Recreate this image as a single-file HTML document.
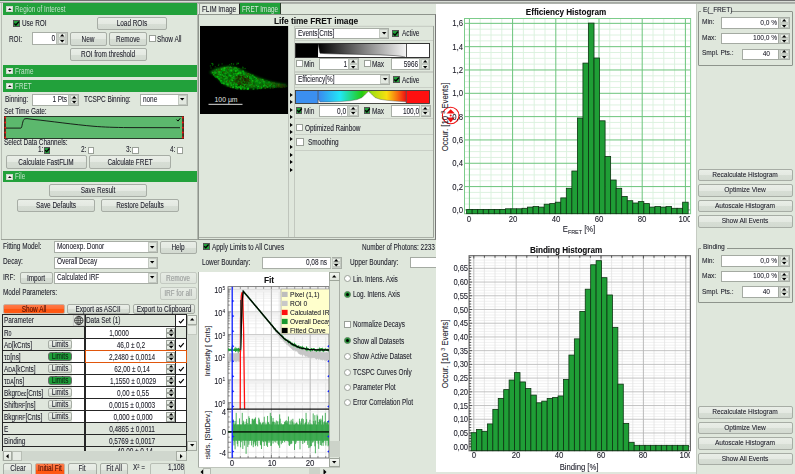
<!DOCTYPE html><html><head><meta charset="utf-8"><style>
html,body{margin:0;padding:0;}
body{width:795px;height:474px;position:relative;overflow:hidden;background:#dfe7dc;font-family:"Liberation Sans",sans-serif;}
body div{position:absolute;box-sizing:border-box;}
.t{white-space:nowrap;line-height:12px;height:12px;text-shadow:0.3px 0 0 rgba(20,20,40,0.3);}
svg{position:absolute;overflow:visible}
</style></head><body>
<div style="left:0px;top:0px;width:795px;height:1px;background:#727272;"></div>
<div style="left:0px;top:1px;width:795px;height:1px;background:#d9ddd7;"></div>
<div style="left:0px;top:2px;width:795px;height:1px;background:#a6aaa4;"></div>
<div style="left:197px;top:3px;width:598px;height:1px;background:#aeb2ac;"></div>
<div style="left:0px;top:0px;width:32.5px;height:1px;background:#3a8a4a;"></div>
<div style="left:1px;top:3px;width:1px;height:237px;background:#b6bcb3;"></div>
<div style="left:197px;top:3px;width:1px;height:237px;background:#b3b9b0;"></div>
<div style="left:1px;top:239px;width:197px;height:1px;background:#9aa097;"></div>
<div style="left:3px;top:3px;width:194px;height:12px;background:#22a13b;"></div>
<div style="left:6px;top:6.1px;width:6.6px;height:6.4px;background:#eef1ec;border:0.5px solid #cfd8cc;"></div>
<svg style="position:absolute;left:7.60px;top:8.40px" width="3.6" height="2"><path d="M0 2 L1.8 0 L3.6 2Z" fill="#111"/></svg>
<div class="t" style="left:15.00px;top:2.87px;width:400px;text-align:left;font-size:8.3px;font-weight:normal;color:#c4f0cc;transform:scaleX(0.77);transform-origin:0 0;">Region of Interest</div>
<div style="left:13px;top:20px;width:7px;height:7px;background:#22a13b;border:1px solid #555;box-sizing:border-box"><svg width="7" height="7" viewBox="0 0 7 7" style="position:absolute;left:-1px;top:-1px"><path d="M1.3 3.4 L2.9 5 L5.9 1.6" stroke="#000" stroke-width="1.4" fill="none"/></svg></div>
<div class="t" style="left:21.50px;top:16.67px;width:400px;text-align:left;font-size:8.3px;font-weight:normal;color:#262630;transform:scaleX(0.77);transform-origin:0 0;">Use ROI</div>
<div style="left:97px;top:17px;width:70px;height:13px;border:1px solid #a7ada5;border-radius:2px;background:linear-gradient(#e9eee7 0%,#e4e9e2 50%,#d7ded5 51%,#d3dad1 100%);"></div>
<div class="t" style="left:-68.00px;top:17.37px;width:400px;text-align:center;font-size:8.3px;font-weight:normal;color:#262630;transform:scaleX(0.77);transform-origin:50% 0;">Load ROIs</div>
<div class="t" style="left:8.50px;top:32.67px;width:400px;text-align:left;font-size:8.3px;font-weight:normal;color:#262630;transform:scaleX(0.77);transform-origin:0 0;">ROI:</div>
<div style="left:32px;top:32px;width:25px;height:13px;background:#fff;border:1px solid #a8aea6;border-right:1px solid #b8beb6;"></div>
<div class="t" style="left:-345.00px;top:32.37px;width:400px;text-align:right;font-size:8.3px;font-weight:normal;color:#262630;transform:scaleX(0.77);transform-origin:100% 0;">0</div>
<div style="left:57px;top:32px;width:10.5px;height:13px;background:#c9cfc7;border:1px solid #a8aea6;border-left:none;"></div>
<div style="left:57.6px;top:33px;width:8.9px;height:5.1px;background:#e9eee7;border:1px solid #c3c9c1;"></div>
<div style="left:57.6px;top:38.9px;width:8.9px;height:5.1px;background:#e9eee7;border:1px solid #c3c9c1;"></div>
<svg style="position:absolute;left:59.75px;top:34.25px" width="4.4" height="2.6"><path d="M0 2.6 L2.2 0 L4.4 2.6Z" fill="#000"/></svg>
<svg style="position:absolute;left:59.75px;top:40.35px" width="4.4" height="2.6"><path d="M0 0 L2.2 2.6 L4.4 0Z" fill="#000"/></svg>
<div style="left:69.5px;top:32px;width:37px;height:13.5px;border:1px solid #a7ada5;border-radius:2px;background:linear-gradient(#e9eee7 0%,#e4e9e2 50%,#d7ded5 51%,#d3dad1 100%);"></div>
<div class="t" style="left:-112.00px;top:32.62px;width:400px;text-align:center;font-size:8.3px;font-weight:normal;color:#262630;transform:scaleX(0.77);transform-origin:50% 0;">New</div>
<div style="left:109px;top:32px;width:37.5px;height:13.5px;border:1px solid #a7ada5;border-radius:2px;background:linear-gradient(#e9eee7 0%,#e4e9e2 50%,#d7ded5 51%,#d3dad1 100%);"></div>
<div class="t" style="left:-72.25px;top:32.62px;width:400px;text-align:center;font-size:8.3px;font-weight:normal;color:#262630;transform:scaleX(0.77);transform-origin:50% 0;">Remove</div>
<div style="left:148.5px;top:35px;width:7px;height:7px;background:#fff;border:1px solid #9aa098;"></div>
<div class="t" style="left:157.00px;top:32.67px;width:400px;text-align:left;font-size:8.3px;font-weight:normal;color:#262630;transform:scaleX(0.77);transform-origin:0 0;">Show All</div>
<div style="left:69.5px;top:48px;width:77px;height:12.5px;border:1px solid #a7ada5;border-radius:2px;background:linear-gradient(#e9eee7 0%,#e4e9e2 50%,#d7ded5 51%,#d3dad1 100%);"></div>
<div class="t" style="left:-92.00px;top:48.12px;width:400px;text-align:center;font-size:8.3px;font-weight:normal;color:#262630;transform:scaleX(0.77);transform-origin:50% 0;">ROI from threshold</div>
<div style="left:3px;top:65px;width:194px;height:12px;background:#22a13b;"></div>
<div style="left:6px;top:68.1px;width:6.6px;height:6.4px;background:#eef1ec;border:0.5px solid #cfd8cc;"></div>
<svg style="position:absolute;left:7.60px;top:70.40px" width="3.6" height="2"><path d="M0 0 L1.8 2 L3.6 0Z" fill="#111"/></svg>
<div class="t" style="left:15.00px;top:64.87px;width:400px;text-align:left;font-size:8.3px;font-weight:normal;color:#c4f0cc;transform:scaleX(0.77);transform-origin:0 0;">Frame</div>
<div style="left:3px;top:80px;width:194px;height:12px;background:#22a13b;"></div>
<div style="left:6px;top:83.1px;width:6.6px;height:6.4px;background:#eef1ec;border:0.5px solid #cfd8cc;"></div>
<svg style="position:absolute;left:7.60px;top:85.40px" width="3.6" height="2"><path d="M0 2 L1.8 0 L3.6 2Z" fill="#111"/></svg>
<div class="t" style="left:15.00px;top:79.87px;width:400px;text-align:left;font-size:8.3px;font-weight:normal;color:#c4f0cc;transform:scaleX(0.77);transform-origin:0 0;">FRET</div>
<div class="t" style="left:4.50px;top:92.87px;width:400px;text-align:left;font-size:8.3px;font-weight:normal;color:#262630;transform:scaleX(0.77);transform-origin:0 0;">Binning:</div>
<div style="left:32px;top:93.5px;width:37px;height:12px;background:#fff;border:1px solid #a8aea6;border-right:1px solid #b8beb6;"></div>
<div class="t" style="left:-333.00px;top:93.37px;width:400px;text-align:right;font-size:8.3px;font-weight:normal;color:#262630;transform:scaleX(0.77);transform-origin:100% 0;">1 Pts</div>
<div style="left:69px;top:93.5px;width:10px;height:12px;background:#c9cfc7;border:1px solid #a8aea6;border-left:none;"></div>
<div style="left:69.6px;top:94.5px;width:8.4px;height:4.6px;background:#e9eee7;border:1px solid #c3c9c1;"></div>
<div style="left:69.6px;top:99.9px;width:8.4px;height:4.6px;background:#e9eee7;border:1px solid #c3c9c1;"></div>
<svg style="position:absolute;left:71.50px;top:95.50px" width="4.4" height="2.6"><path d="M0 2.6 L2.2 0 L4.4 2.6Z" fill="#000"/></svg>
<svg style="position:absolute;left:71.50px;top:101.10px" width="4.4" height="2.6"><path d="M0 0 L2.2 2.6 L4.4 0Z" fill="#000"/></svg>
<div class="t" style="left:84.00px;top:92.87px;width:400px;text-align:left;font-size:8.3px;font-weight:normal;color:#262630;transform:scaleX(0.77);transform-origin:0 0;">TCSPC Binning:</div>
<div style="left:140px;top:93.5px;width:48px;height:12px;background:#fff;border:1px solid #a8aea6;"></div>
<div style="left:178px;top:94.5px;width:9px;height:10px;background:#e2e8e0;border:1px solid #c3c9c1;"></div>
<svg style="position:absolute;left:180.30px;top:98.20px" width="4.4" height="2.6"><path d="M0 0 L2.2 2.6 L4.4 0Z" fill="#000"/></svg>
<div class="t" style="left:142.50px;top:93.37px;width:400px;text-align:left;font-size:8.3px;font-weight:normal;color:#262630;transform:scaleX(0.77);transform-origin:0 0;">none</div>
<div class="t" style="left:4.40px;top:105.37px;width:400px;text-align:left;font-size:8.3px;font-weight:normal;color:#262630;transform:scaleX(0.77);transform-origin:0 0;">Set Time Gate:</div>
<svg style="position:absolute;left:4px;top:116px" width="180" height="23" viewBox="0 0 180 23"><rect x="0.5" y="0.5" width="179" height="22" fill="#5cb86d" stroke="#2a3a2a" stroke-width="1"/><path d="M1 12.1 L17 12.1 C18.2 12.1 18.3 3.5 20.8 2.8 L23 2.6 L30 3.5 C45 5 70 8.6 90 10.3 C100 11.1 110 11.5 125 11.6 L176 11.7" stroke="#111" stroke-width="0.9" fill="none"/><rect x="0.6" y="0.6" width="1.2" height="21.8" fill="#5a1a10"/><rect x="178.2" y="0.6" width="1.2" height="21.8" fill="#5a1a10"/><path d="M172.5 3.6 L174 5.1 L176.2 2.3" stroke="#000" stroke-width="1" fill="none"/><circle cx="1.3" cy="1.5" r="0.9" fill="#ff1010"/><circle cx="178.8" cy="1.5" r="0.9" fill="#ff1010"/><circle cx="1.3" cy="6.5" r="0.9" fill="#ff1010"/><circle cx="178.8" cy="6.5" r="0.9" fill="#ff1010"/><circle cx="1.3" cy="11.7" r="0.9" fill="#ff1010"/><circle cx="178.8" cy="11.7" r="0.9" fill="#ff1010"/><circle cx="1.3" cy="16.5" r="0.9" fill="#ff1010"/><circle cx="178.8" cy="16.5" r="0.9" fill="#ff1010"/><circle cx="1.3" cy="21.5" r="0.9" fill="#ff1010"/><circle cx="178.8" cy="21.5" r="0.9" fill="#ff1010"/></svg>
<div class="t" style="left:4.40px;top:135.97px;width:400px;text-align:left;font-size:8.3px;font-weight:normal;color:#262630;transform:scaleX(0.77);transform-origin:0 0;">Select Data Channels:</div>
<div class="t" style="left:37.60px;top:143.37px;width:400px;text-align:left;font-size:8.3px;font-weight:normal;color:#262630;transform:scaleX(0.77);transform-origin:0 0;">1:</div>
<div style="left:43.5px;top:147px;width:6.5px;height:6.5px;background:#22a13b;border:1px solid #555;box-sizing:border-box"><svg width="6.5" height="6.5" viewBox="0 0 7 7" style="position:absolute;left:-1px;top:-1px"><path d="M1.3 3.4 L2.9 5 L5.9 1.6" stroke="#000" stroke-width="1.4" fill="none"/></svg></div>
<div class="t" style="left:81.00px;top:143.37px;width:400px;text-align:left;font-size:8.3px;font-weight:normal;color:#262630;transform:scaleX(0.77);transform-origin:0 0;">2:</div>
<div style="left:87.5px;top:147px;width:6.5px;height:6.5px;background:#fff;border:1px solid #9aa098;"></div>
<div class="t" style="left:125.50px;top:143.37px;width:400px;text-align:left;font-size:8.3px;font-weight:normal;color:#262630;transform:scaleX(0.77);transform-origin:0 0;">3:</div>
<div style="left:132px;top:147px;width:6.5px;height:6.5px;background:#fff;border:1px solid #9aa098;"></div>
<div class="t" style="left:169.50px;top:143.37px;width:400px;text-align:left;font-size:8.3px;font-weight:normal;color:#262630;transform:scaleX(0.77);transform-origin:0 0;">4:</div>
<div style="left:176.5px;top:147px;width:6.5px;height:6.5px;background:#fff;border:1px solid #9aa098;"></div>
<div style="left:5.5px;top:155px;width:81.5px;height:13.5px;border:1px solid #a7ada5;border-radius:2px;background:linear-gradient(#e9eee7 0%,#e4e9e2 50%,#d7ded5 51%,#d3dad1 100%);"></div>
<div class="t" style="left:-153.75px;top:155.62px;width:400px;text-align:center;font-size:8.3px;font-weight:normal;color:#262630;transform:scaleX(0.77);transform-origin:50% 0;">Calculate FastFLIM</div>
<div style="left:89px;top:155px;width:82px;height:13.5px;border:1px solid #a7ada5;border-radius:2px;background:linear-gradient(#e9eee7 0%,#e4e9e2 50%,#d7ded5 51%,#d3dad1 100%);"></div>
<div class="t" style="left:-70.00px;top:155.62px;width:400px;text-align:center;font-size:8.3px;font-weight:normal;color:#262630;transform:scaleX(0.77);transform-origin:50% 0;">Calculate FRET</div>
<div style="left:3px;top:170.5px;width:194px;height:11.5px;background:#22a13b;"></div>
<div style="left:6px;top:173.6px;width:6.6px;height:6.4px;background:#eef1ec;border:0.5px solid #cfd8cc;"></div>
<svg style="position:absolute;left:7.60px;top:175.90px" width="3.6" height="2"><path d="M0 2 L1.8 0 L3.6 2Z" fill="#111"/></svg>
<div class="t" style="left:15.00px;top:170.12px;width:400px;text-align:left;font-size:8.3px;font-weight:normal;color:#c4f0cc;transform:scaleX(0.77);transform-origin:0 0;">File</div>
<div style="left:49px;top:184px;width:98px;height:12.5px;border:1px solid #a7ada5;border-radius:2px;background:linear-gradient(#e9eee7 0%,#e4e9e2 50%,#d7ded5 51%,#d3dad1 100%);"></div>
<div class="t" style="left:-102.00px;top:184.12px;width:400px;text-align:center;font-size:8.3px;font-weight:normal;color:#262630;transform:scaleX(0.77);transform-origin:50% 0;">Save Result</div>
<div style="left:17px;top:199px;width:78px;height:13px;border:1px solid #a7ada5;border-radius:2px;background:linear-gradient(#e9eee7 0%,#e4e9e2 50%,#d7ded5 51%,#d3dad1 100%);"></div>
<div class="t" style="left:-144.00px;top:199.37px;width:400px;text-align:center;font-size:8.3px;font-weight:normal;color:#262630;transform:scaleX(0.77);transform-origin:50% 0;">Save Defaults</div>
<div style="left:101px;top:199px;width:78px;height:13px;border:1px solid #a7ada5;border-radius:2px;background:linear-gradient(#e9eee7 0%,#e4e9e2 50%,#d7ded5 51%,#d3dad1 100%);"></div>
<div class="t" style="left:-60.00px;top:199.37px;width:400px;text-align:center;font-size:8.3px;font-weight:normal;color:#262630;transform:scaleX(0.77);transform-origin:50% 0;">Restore Defaults</div>
<div class="t" style="left:2.50px;top:239.67px;width:400px;text-align:left;font-size:8.3px;font-weight:normal;color:#262630;transform:scaleX(0.77);transform-origin:0 0;">Fitting Model:</div>
<div style="left:54px;top:241px;width:103.5px;height:12px;background:#fff;border:1px solid #a8aea6;"></div>
<div style="left:147.5px;top:242px;width:9px;height:10px;background:#e2e8e0;border:1px solid #c3c9c1;"></div>
<svg style="position:absolute;left:149.80px;top:245.70px" width="4.4" height="2.6"><path d="M0 0 L2.2 2.6 L4.4 0Z" fill="#000"/></svg>
<div class="t" style="left:56.50px;top:239.67px;width:400px;text-align:left;font-size:8.3px;font-weight:normal;color:#262630;transform:scaleX(0.77);transform-origin:0 0;">Monoexp. Donor</div>
<div style="left:159.5px;top:241px;width:37px;height:12.5px;border:1px solid #a7ada5;border-radius:2px;background:linear-gradient(#e9eee7 0%,#e4e9e2 50%,#d7ded5 51%,#d3dad1 100%);"></div>
<div class="t" style="left:-22.00px;top:241.12px;width:400px;text-align:center;font-size:8.3px;font-weight:normal;color:#262630;transform:scaleX(0.77);transform-origin:50% 0;">Help</div>
<div class="t" style="left:2.50px;top:255.07px;width:400px;text-align:left;font-size:8.3px;font-weight:normal;color:#262630;transform:scaleX(0.77);transform-origin:0 0;">Decay:</div>
<div style="left:54px;top:256.5px;width:103.5px;height:12px;background:#fff;border:1px solid #a8aea6;"></div>
<div style="left:147.5px;top:257.5px;width:9px;height:10px;background:#e2e8e0;border:1px solid #c3c9c1;"></div>
<svg style="position:absolute;left:149.80px;top:261.20px" width="4.4" height="2.6"><path d="M0 0 L2.2 2.6 L4.4 0Z" fill="#000"/></svg>
<div class="t" style="left:56.50px;top:255.07px;width:400px;text-align:left;font-size:8.3px;font-weight:normal;color:#262630;transform:scaleX(0.77);transform-origin:0 0;">Overall Decay</div>
<div class="t" style="left:2.50px;top:270.67px;width:400px;text-align:left;font-size:8.3px;font-weight:normal;color:#262630;transform:scaleX(0.77);transform-origin:0 0;">IRF:</div>
<div style="left:19.5px;top:271.5px;width:33px;height:12.5px;border:1px solid #a7ada5;border-radius:2px;background:linear-gradient(#e9eee7 0%,#e4e9e2 50%,#d7ded5 51%,#d3dad1 100%);"></div>
<div class="t" style="left:-164.00px;top:271.62px;width:400px;text-align:center;font-size:8.3px;font-weight:normal;color:#262630;transform:scaleX(0.77);transform-origin:50% 0;">Import</div>
<div style="left:54px;top:271.5px;width:103.5px;height:12px;background:#fff;border:1px solid #a8aea6;"></div>
<div style="left:147.5px;top:272.5px;width:9px;height:10px;background:#e2e8e0;border:1px solid #c3c9c1;"></div>
<svg style="position:absolute;left:149.80px;top:276.20px" width="4.4" height="2.6"><path d="M0 0 L2.2 2.6 L4.4 0Z" fill="#000"/></svg>
<div class="t" style="left:56.50px;top:270.67px;width:400px;text-align:left;font-size:8.3px;font-weight:normal;color:#262630;transform:scaleX(0.77);transform-origin:0 0;">Calculated IRF</div>
<div style="left:159.5px;top:272px;width:37px;height:12px;border:1px solid #c4cac2;border-radius:2px;background:linear-gradient(#e6ebe4,#dde3db);"></div>
<div class="t" style="left:-22.00px;top:271.87px;width:400px;text-align:center;font-size:8.3px;font-weight:normal;color:#a8aca8;transform:scaleX(0.77);transform-origin:50% 0;">Remove</div>
<div class="t" style="left:2.50px;top:286.27px;width:400px;text-align:left;font-size:8.3px;font-weight:normal;color:#262630;transform:scaleX(0.77);transform-origin:0 0;">Model Parameters:</div>
<div style="left:159.5px;top:287px;width:37px;height:13px;border:1px solid #c4cac2;border-radius:2px;background:linear-gradient(#e6ebe4,#dde3db);"></div>
<div class="t" style="left:-22.00px;top:287.37px;width:400px;text-align:center;font-size:8.3px;font-weight:normal;color:#a8aca8;transform:scaleX(0.77);transform-origin:50% 0;">IRF for all</div>
<div style="left:3px;top:303.6px;width:61.8px;height:10.3px;border:1px solid #c8b0a0;border-radius:2px;background:linear-gradient(#ff7a48 0%,#ff6a30 50%,#ff5510 51%,#ff5a14 100%);"></div>
<div class="t" style="left:-166.10px;top:302.62px;width:400px;text-align:center;font-size:8.3px;font-weight:normal;color:#5a1000;transform:scaleX(0.77);transform-origin:50% 0;">Show All</div>
<div style="left:66.7px;top:303.6px;width:63.3px;height:10.3px;border:1px solid #a7ada5;border-radius:2px;background:linear-gradient(#e9eee7 0%,#e4e9e2 50%,#d7ded5 51%,#d3dad1 100%);"></div>
<div class="t" style="left:-101.65px;top:302.62px;width:400px;text-align:center;font-size:8.3px;font-weight:normal;color:#262630;transform:scaleX(0.77);transform-origin:50% 0;">Export as ASCII</div>
<div style="left:133px;top:303.5px;width:62px;height:10.5px;border:1px solid #a7ada5;border-radius:2px;background:linear-gradient(#e9eee7 0%,#e4e9e2 50%,#d7ded5 51%,#d3dad1 100%);"></div>
<div class="t" style="left:-36.00px;top:302.62px;width:400px;text-align:center;font-size:8.3px;font-weight:normal;color:#262630;transform:scaleX(0.77);transform-origin:50% 0;">Export to Clipboard</div>
<div style="left:2px;top:314px;width:185px;height:137px;background:#dfe6dc;"></div>
<div style="left:85px;top:326.5px;width:101.5px;height:12px;background:#fff;"></div>
<div style="left:85px;top:338.5px;width:101.5px;height:12px;background:#fff;"></div>
<div style="left:85px;top:350.5px;width:101.5px;height:12px;background:#fff;"></div>
<div style="left:85px;top:362.5px;width:101.5px;height:12px;background:#fff;"></div>
<div style="left:85px;top:374.5px;width:101.5px;height:12px;background:#fff;"></div>
<div style="left:85px;top:386.5px;width:101.5px;height:12px;background:#fff;"></div>
<div style="left:85px;top:398.5px;width:101.5px;height:12px;background:#fff;"></div>
<div style="left:85px;top:410.5px;width:101.5px;height:12px;background:#fff;"></div>
<div style="left:176px;top:314.5px;width:10.5px;height:12px;background:#fff;"></div>
<div style="left:176px;top:326.5px;width:10.5px;height:12px;background:#dfe6dc;"></div>
<div style="left:2px;top:313.9px;width:184.6px;height:1.3px;background:#262626;"></div>
<div style="left:2px;top:325.9px;width:184.6px;height:1.3px;background:#262626;"></div>
<div style="left:2px;top:337.9px;width:184.6px;height:1.3px;background:#262626;"></div>
<div style="left:2px;top:349.9px;width:184.6px;height:1.3px;background:#262626;"></div>
<div style="left:2px;top:361.9px;width:184.6px;height:1.3px;background:#262626;"></div>
<div style="left:2px;top:373.9px;width:184.6px;height:1.3px;background:#262626;"></div>
<div style="left:2px;top:385.9px;width:184.6px;height:1.3px;background:#262626;"></div>
<div style="left:2px;top:397.9px;width:184.6px;height:1.3px;background:#262626;"></div>
<div style="left:2px;top:409.9px;width:184.6px;height:1.3px;background:#262626;"></div>
<div style="left:2px;top:421.9px;width:184.6px;height:1.3px;background:#262626;"></div>
<div style="left:2px;top:433.9px;width:184.6px;height:1.3px;background:#262626;"></div>
<div style="left:2px;top:445.9px;width:184.6px;height:1.3px;background:#262626;"></div>
<div style="left:2px;top:314px;width:1.2px;height:137px;background:#262626;"></div>
<div style="left:84.2px;top:314px;width:1.4px;height:137px;background:#262626;"></div>
<div style="left:185.6px;top:314px;width:1.2px;height:137px;background:#262626;"></div>
<div style="left:175.4px;top:314.5px;width:0.9px;height:12px;background:#262626;"></div>
<div style="left:175.4px;top:326.5px;width:0.9px;height:12px;background:#262626;"></div>
<div style="left:175.4px;top:338.5px;width:0.9px;height:12px;background:#262626;"></div>
<div style="left:175.4px;top:350.5px;width:0.9px;height:12px;background:#262626;"></div>
<div style="left:175.4px;top:362.5px;width:0.9px;height:12px;background:#262626;"></div>
<div style="left:175.4px;top:374.5px;width:0.9px;height:12px;background:#262626;"></div>
<div style="left:175.4px;top:386.5px;width:0.9px;height:12px;background:#262626;"></div>
<div style="left:175.4px;top:398.5px;width:0.9px;height:12px;background:#262626;"></div>
<div style="left:175.4px;top:410.5px;width:0.9px;height:12px;background:#262626;"></div>
<div class="t" style="left:4.00px;top:314.27px;width:400px;text-align:left;font-size:8.3px;font-weight:normal;color:#262630;transform:scaleX(0.77);transform-origin:0 0;">Parameter</div>
<svg style="position:absolute;left:73px;top:315px" width="11.5" height="11" viewBox="0 0 11.5 11"><rect x="0.2" y="0.2" width="11" height="10.6" fill="#e4eae2" stroke="#b0b0b0" stroke-width="0.5"/><circle cx="5.8" cy="5.5" r="4.2" fill="none" stroke="#222" stroke-width="0.8"/><ellipse cx="5.8" cy="5.5" rx="1.9" ry="4.2" fill="none" stroke="#222" stroke-width="0.7"/><path d="M1.6 5.5 H10 M2.3 3.3 H9.3 M2.3 7.7 H9.3 M5.8 1.3 V9.7" stroke="#222" stroke-width="0.6"/></svg>
<div class="t" style="left:86.00px;top:314.27px;width:400px;text-align:left;font-size:8.3px;font-weight:normal;color:#262630;transform:scaleX(0.77);transform-origin:0 0;">Data Set (1)</div>
<svg style="position:absolute;left:177.5px;top:317.80px" width="7" height="6"><path d="M1 3.2 L2.6 4.8 L5.8 1.2" stroke="#000" stroke-width="1.2" fill="none"/></svg>
<div class="t" style="left:3.50px;top:326.57px;width:400px;text-align:left;font-size:8.3px;font-weight:normal;color:#262630;transform:scaleX(0.77);transform-origin:0 0;">R<span style="font-size:6.8px">0</span></div>
<div class="t" style="left:-81.00px;top:326.57px;width:400px;text-align:center;font-size:8.3px;font-weight:normal;color:#262630;transform:scaleX(0.77);transform-origin:50% 0;">1,0000</div>
<div style="left:166.3px;top:327.5px;width:9px;height:5px;background:#e8ede6;border:1px solid #9aa098;"></div>
<div style="left:166.3px;top:332.5px;width:9px;height:5px;background:#e8ede6;border:1px solid #9aa098;"></div>
<svg style="position:absolute;left:168.60px;top:328.70px" width="4.4" height="2.6"><path d="M0 2.6 L2.2 0 L4.4 2.6Z" fill="#000"/></svg>
<svg style="position:absolute;left:168.60px;top:333.70px" width="4.4" height="2.6"><path d="M0 0 L2.2 2.6 L4.4 0Z" fill="#000"/></svg>
<div class="t" style="left:3.50px;top:338.57px;width:400px;text-align:left;font-size:8.3px;font-weight:normal;color:#262630;transform:scaleX(0.77);transform-origin:0 0;">A<span style="font-size:6.8px">D</span>[kCnts]</div>
<div style="left:47.6px;top:340.1px;width:24px;height:9px;border:1px solid #a7ada5;border-radius:2px;background:linear-gradient(#e9eee7 0%,#e4e9e2 50%,#d7ded5 51%,#d3dad1 100%);"></div>
<div class="t" style="left:-140.40px;top:338.17px;width:400px;text-align:center;font-size:8.3px;font-weight:normal;color:#262630;transform:scaleX(0.77);transform-origin:50% 0;">Limits</div>
<div style="left:72px;top:339.2px;width:12.2px;height:10.6px;background:#fff;"></div>
<div class="t" style="left:-69.30px;top:338.57px;width:400px;text-align:center;font-size:8.3px;font-weight:normal;color:#262630;transform:scaleX(0.77);transform-origin:50% 0;">46,0 ± 0,2</div>
<div style="left:166.3px;top:339.5px;width:9px;height:5px;background:#e8ede6;border:1px solid #9aa098;"></div>
<div style="left:166.3px;top:344.5px;width:9px;height:5px;background:#e8ede6;border:1px solid #9aa098;"></div>
<svg style="position:absolute;left:168.60px;top:340.70px" width="4.4" height="2.6"><path d="M0 2.6 L2.2 0 L4.4 2.6Z" fill="#000"/></svg>
<svg style="position:absolute;left:168.60px;top:345.70px" width="4.4" height="2.6"><path d="M0 0 L2.2 2.6 L4.4 0Z" fill="#000"/></svg>
<svg style="position:absolute;left:177.5px;top:341.70px" width="7" height="6"><path d="M1 3.2 L2.6 4.8 L5.8 1.2" stroke="#000" stroke-width="1.2" fill="none"/></svg>
<div class="t" style="left:3.50px;top:350.57px;width:400px;text-align:left;font-size:8.3px;font-weight:normal;color:#262630;transform:scaleX(0.77);transform-origin:0 0;">τ<span style="font-size:6.8px">D</span>[ns]</div>
<div style="left:47.6px;top:352.1px;width:24px;height:9px;border:1px solid #6a6a6a;border-radius:3px;background:#1f9e3a;"></div>
<div class="t" style="left:-140.40px;top:350.17px;width:400px;text-align:center;font-size:8.3px;font-weight:normal;color:#0c2a10;transform:scaleX(0.77);transform-origin:50% 0;">Limits</div>
<div style="left:72px;top:351.2px;width:12.2px;height:10.6px;background:#fff;"></div>
<div class="t" style="left:-67.90px;top:350.57px;width:400px;text-align:center;font-size:8.3px;font-weight:normal;color:#262630;transform:scaleX(0.77);transform-origin:50% 0;">2,2480 ± 0,0014</div>
<div style="left:166.3px;top:351.5px;width:9px;height:5px;background:#e8ede6;border:1px solid #9aa098;"></div>
<div style="left:166.3px;top:356.5px;width:9px;height:5px;background:#e8ede6;border:1px solid #9aa098;"></div>
<svg style="position:absolute;left:168.60px;top:352.70px" width="4.4" height="2.6"><path d="M0 2.6 L2.2 0 L4.4 2.6Z" fill="#000"/></svg>
<svg style="position:absolute;left:168.60px;top:357.70px" width="4.4" height="2.6"><path d="M0 0 L2.2 2.6 L4.4 0Z" fill="#000"/></svg>
<div class="t" style="left:3.50px;top:362.57px;width:400px;text-align:left;font-size:8.3px;font-weight:normal;color:#262630;transform:scaleX(0.77);transform-origin:0 0;">A<span style="font-size:6.8px">DA</span>[kCnts]</div>
<div style="left:47.6px;top:364.1px;width:24px;height:9px;border:1px solid #a7ada5;border-radius:2px;background:linear-gradient(#e9eee7 0%,#e4e9e2 50%,#d7ded5 51%,#d3dad1 100%);"></div>
<div class="t" style="left:-140.40px;top:362.17px;width:400px;text-align:center;font-size:8.3px;font-weight:normal;color:#262630;transform:scaleX(0.77);transform-origin:50% 0;">Limits</div>
<div style="left:72px;top:363.2px;width:12.2px;height:10.6px;background:#fff;"></div>
<div class="t" style="left:-67.80px;top:362.57px;width:400px;text-align:center;font-size:8.3px;font-weight:normal;color:#262630;transform:scaleX(0.77);transform-origin:50% 0;">62,00 ± 0,14</div>
<div style="left:166.3px;top:363.5px;width:9px;height:5px;background:#e8ede6;border:1px solid #9aa098;"></div>
<div style="left:166.3px;top:368.5px;width:9px;height:5px;background:#e8ede6;border:1px solid #9aa098;"></div>
<svg style="position:absolute;left:168.60px;top:364.70px" width="4.4" height="2.6"><path d="M0 2.6 L2.2 0 L4.4 2.6Z" fill="#000"/></svg>
<svg style="position:absolute;left:168.60px;top:369.70px" width="4.4" height="2.6"><path d="M0 0 L2.2 2.6 L4.4 0Z" fill="#000"/></svg>
<svg style="position:absolute;left:177.5px;top:365.70px" width="7" height="6"><path d="M1 3.2 L2.6 4.8 L5.8 1.2" stroke="#000" stroke-width="1.2" fill="none"/></svg>
<div class="t" style="left:3.50px;top:374.57px;width:400px;text-align:left;font-size:8.3px;font-weight:normal;color:#262630;transform:scaleX(0.77);transform-origin:0 0;">τ<span style="font-size:6.8px">DA</span>[ns]</div>
<div style="left:47.6px;top:376.1px;width:24px;height:9px;border:1px solid #6a6a6a;border-radius:3px;background:#1f9e3a;"></div>
<div class="t" style="left:-140.40px;top:374.17px;width:400px;text-align:center;font-size:8.3px;font-weight:normal;color:#0c2a10;transform:scaleX(0.77);transform-origin:50% 0;">Limits</div>
<div style="left:72px;top:375.2px;width:12.2px;height:10.6px;background:#fff;"></div>
<div class="t" style="left:-67.30px;top:374.57px;width:400px;text-align:center;font-size:8.3px;font-weight:normal;color:#262630;transform:scaleX(0.77);transform-origin:50% 0;">1,1550 ± 0,0029</div>
<div style="left:166.3px;top:375.5px;width:9px;height:5px;background:#e8ede6;border:1px solid #9aa098;"></div>
<div style="left:166.3px;top:380.5px;width:9px;height:5px;background:#e8ede6;border:1px solid #9aa098;"></div>
<svg style="position:absolute;left:168.60px;top:376.70px" width="4.4" height="2.6"><path d="M0 2.6 L2.2 0 L4.4 2.6Z" fill="#000"/></svg>
<svg style="position:absolute;left:168.60px;top:381.70px" width="4.4" height="2.6"><path d="M0 0 L2.2 2.6 L4.4 0Z" fill="#000"/></svg>
<svg style="position:absolute;left:177.5px;top:377.70px" width="7" height="6"><path d="M1 3.2 L2.6 4.8 L5.8 1.2" stroke="#000" stroke-width="1.2" fill="none"/></svg>
<div class="t" style="left:3.50px;top:386.57px;width:400px;text-align:left;font-size:8.3px;font-weight:normal;color:#262630;transform:scaleX(0.77);transform-origin:0 0;">Bkgr<span style="font-size:6.8px">Dec</span>[Cnts]</div>
<div style="left:47.6px;top:388.1px;width:24px;height:9px;border:1px solid #a7ada5;border-radius:2px;background:linear-gradient(#e9eee7 0%,#e4e9e2 50%,#d7ded5 51%,#d3dad1 100%);"></div>
<div class="t" style="left:-140.40px;top:386.17px;width:400px;text-align:center;font-size:8.3px;font-weight:normal;color:#262630;transform:scaleX(0.77);transform-origin:50% 0;">Limits</div>
<div style="left:72px;top:387.2px;width:12.2px;height:10.6px;background:#fff;"></div>
<div class="t" style="left:-67.30px;top:386.57px;width:400px;text-align:center;font-size:8.3px;font-weight:normal;color:#262630;transform:scaleX(0.77);transform-origin:50% 0;">0,00 ± 0,55</div>
<div style="left:166.3px;top:387.5px;width:9px;height:5px;background:#e8ede6;border:1px solid #9aa098;"></div>
<div style="left:166.3px;top:392.5px;width:9px;height:5px;background:#e8ede6;border:1px solid #9aa098;"></div>
<svg style="position:absolute;left:168.60px;top:388.70px" width="4.4" height="2.6"><path d="M0 2.6 L2.2 0 L4.4 2.6Z" fill="#000"/></svg>
<svg style="position:absolute;left:168.60px;top:393.70px" width="4.4" height="2.6"><path d="M0 0 L2.2 2.6 L4.4 0Z" fill="#000"/></svg>
<div class="t" style="left:3.50px;top:398.57px;width:400px;text-align:left;font-size:8.3px;font-weight:normal;color:#262630;transform:scaleX(0.77);transform-origin:0 0;">Shift<span style="font-size:6.8px">IRF</span>[ns]</div>
<div style="left:47.6px;top:400.1px;width:24px;height:9px;border:1px solid #a7ada5;border-radius:2px;background:linear-gradient(#e9eee7 0%,#e4e9e2 50%,#d7ded5 51%,#d3dad1 100%);"></div>
<div class="t" style="left:-140.40px;top:398.17px;width:400px;text-align:center;font-size:8.3px;font-weight:normal;color:#262630;transform:scaleX(0.77);transform-origin:50% 0;">Limits</div>
<div style="left:72px;top:399.2px;width:12.2px;height:10.6px;background:#fff;"></div>
<div class="t" style="left:-68.00px;top:398.57px;width:400px;text-align:center;font-size:8.3px;font-weight:normal;color:#262630;transform:scaleX(0.77);transform-origin:50% 0;">0,0015 ± 0,0003</div>
<div style="left:166.3px;top:399.5px;width:9px;height:5px;background:#e8ede6;border:1px solid #9aa098;"></div>
<div style="left:166.3px;top:404.5px;width:9px;height:5px;background:#e8ede6;border:1px solid #9aa098;"></div>
<svg style="position:absolute;left:168.60px;top:400.70px" width="4.4" height="2.6"><path d="M0 2.6 L2.2 0 L4.4 2.6Z" fill="#000"/></svg>
<svg style="position:absolute;left:168.60px;top:405.70px" width="4.4" height="2.6"><path d="M0 0 L2.2 2.6 L4.4 0Z" fill="#000"/></svg>
<div class="t" style="left:3.50px;top:410.57px;width:400px;text-align:left;font-size:8.3px;font-weight:normal;color:#262630;transform:scaleX(0.77);transform-origin:0 0;">Bkgr<span style="font-size:6.8px">IRF</span>[Cnts]</div>
<div style="left:47.6px;top:412.1px;width:24px;height:9px;border:1px solid #a7ada5;border-radius:2px;background:linear-gradient(#e9eee7 0%,#e4e9e2 50%,#d7ded5 51%,#d3dad1 100%);"></div>
<div class="t" style="left:-140.40px;top:410.17px;width:400px;text-align:center;font-size:8.3px;font-weight:normal;color:#262630;transform:scaleX(0.77);transform-origin:50% 0;">Limits</div>
<div style="left:72px;top:411.2px;width:12.2px;height:10.6px;background:#fff;"></div>
<div class="t" style="left:-67.50px;top:410.57px;width:400px;text-align:center;font-size:8.3px;font-weight:normal;color:#262630;transform:scaleX(0.77);transform-origin:50% 0;">0,000 ± 0,000</div>
<div style="left:166.3px;top:411.5px;width:9px;height:5px;background:#e8ede6;border:1px solid #9aa098;"></div>
<div style="left:166.3px;top:416.5px;width:9px;height:5px;background:#e8ede6;border:1px solid #9aa098;"></div>
<svg style="position:absolute;left:168.60px;top:412.70px" width="4.4" height="2.6"><path d="M0 2.6 L2.2 0 L4.4 2.6Z" fill="#000"/></svg>
<svg style="position:absolute;left:168.60px;top:417.70px" width="4.4" height="2.6"><path d="M0 0 L2.2 2.6 L4.4 0Z" fill="#000"/></svg>
<div style="left:85px;top:350.3px;width:101.6px;height:12.4px;border:1.4px solid #e0560c;"></div>
<div class="t" style="left:3.50px;top:422.57px;width:400px;text-align:left;font-size:8.3px;font-weight:normal;color:#262630;transform:scaleX(0.77);transform-origin:0 0;">E</div>
<div class="t" style="left:-67.80px;top:422.57px;width:400px;text-align:center;font-size:8.3px;font-weight:normal;color:#262630;transform:scaleX(0.77);transform-origin:50% 0;">0,4865 ± 0,0011</div>
<div class="t" style="left:3.50px;top:434.57px;width:400px;text-align:left;font-size:8.3px;font-weight:normal;color:#262630;transform:scaleX(0.77);transform-origin:0 0;">Binding</div>
<div class="t" style="left:-67.80px;top:434.57px;width:400px;text-align:center;font-size:8.3px;font-weight:normal;color:#262630;transform:scaleX(0.77);transform-origin:50% 0;">0,5769 ± 0,0017</div>
<div class="t" style="left:3.50px;top:446.57px;width:400px;text-align:left;font-size:8.3px;font-weight:normal;color:#262630;transform:scaleX(0.77);transform-origin:0 0;"></div>
<div style="left:3px;top:447.3px;width:182px;height:4.2px;overflow:hidden"><div class="t" style="left:-67.8px;top:-2.2px;width:400px;text-align:center;font-size:8.3px;color:#262630;transform:scaleX(0.77)">40,00 ± 0,14</div></div>
<div style="left:186.6px;top:314.5px;width:10.4px;height:137px;background:#d3dad1;"></div>
<div style="left:187px;top:314.5px;width:9.8px;height:10px;background:linear-gradient(#f0f4ee,#dfe5dc);border:1px solid #a6aca3;"></div>
<svg style="position:absolute;left:189.70px;top:318.20px" width="4.4" height="2.6"><path d="M0 2.6 L2.2 0 L4.4 2.6Z" fill="#000"/></svg>
<div style="left:187px;top:325px;width:9.8px;height:10px;background:#e6ebe4;border:1px solid #c4cac1;"></div>
<div style="left:187px;top:440.7px;width:9.8px;height:10px;background:linear-gradient(#f0f4ee,#dfe5dc);border:1px solid #a6aca3;"></div>
<svg style="position:absolute;left:189.70px;top:444.40px" width="4.4" height="2.6"><path d="M0 0 L2.2 2.6 L4.4 0Z" fill="#000"/></svg>
<div style="left:2px;top:451.3px;width:184.6px;height:9.7px;background:#d0d7ce;"></div>
<div style="left:2.7px;top:451.3px;width:9.7px;height:9.7px;background:linear-gradient(#f0f4ee,#dfe5dc);border:1px solid #a6aca3;"></div>
<svg style="position:absolute;left:6px;top:454px" width="3" height="4.4"><path d="M2.6 0 L0 2.2 L2.6 4.4Z" fill="#000"/></svg>
<div style="left:12.4px;top:451.3px;width:10.1px;height:9.7px;background:#e6ebe4;border:1px solid #b8beb5;"></div>
<div style="left:176.4px;top:451.3px;width:10.2px;height:9.7px;background:linear-gradient(#f0f4ee,#dfe5dc);border:1px solid #a6aca3;"></div>
<svg style="position:absolute;left:180.2px;top:454px" width="3" height="4.4"><path d="M0 0 L2.6 2.2 L0 4.4Z" fill="#000"/></svg>
<div style="left:186.6px;top:451.3px;width:10.4px;height:9.7px;background:#dfe6dc;"></div>
<div style="left:3.1px;top:462.5px;width:28.9px;height:13px;border:1px solid #a7ada5;border-radius:2px;background:linear-gradient(#e9eee7 0%,#e4e9e2 50%,#d7ded5 51%,#d3dad1 100%);"></div>
<div class="t" style="left:-182.45px;top:462.17px;width:400px;text-align:center;font-size:8.3px;font-weight:normal;color:#262630;transform:scaleX(0.77);transform-origin:50% 0;">Clear</div>
<div style="left:35.3px;top:462.5px;width:29.8px;height:13px;border:1px solid #c8b0a0;border-radius:2px;background:linear-gradient(#ff7a48 0%,#ff6a30 50%,#ff5510 51%,#ff5a14 100%);"></div>
<div class="t" style="left:-149.80px;top:462.17px;width:400px;text-align:center;font-size:8.3px;font-weight:normal;color:#5a1000;transform:scaleX(0.77);transform-origin:50% 0;">Initial Fit</div>
<div style="left:68px;top:462.5px;width:28.9px;height:13px;border:1px solid #a7ada5;border-radius:2px;background:linear-gradient(#e9eee7 0%,#e4e9e2 50%,#d7ded5 51%,#d3dad1 100%);"></div>
<div class="t" style="left:-117.55px;top:462.17px;width:400px;text-align:center;font-size:8.3px;font-weight:normal;color:#262630;transform:scaleX(0.77);transform-origin:50% 0;">Fit</div>
<div style="left:99.7px;top:462.5px;width:28.8px;height:13px;border:1px solid #a7ada5;border-radius:2px;background:linear-gradient(#e9eee7 0%,#e4e9e2 50%,#d7ded5 51%,#d3dad1 100%);"></div>
<div class="t" style="left:-85.90px;top:462.17px;width:400px;text-align:center;font-size:8.3px;font-weight:normal;color:#262630;transform:scaleX(0.77);transform-origin:50% 0;">Fit All</div>
<div class="t" style="left:133.40px;top:461.47px;width:400px;text-align:left;font-size:8.3px;font-weight:normal;color:#262630;transform:scaleX(0.77);transform-origin:0 0;">X² =</div>
<div style="left:150.2px;top:462.5px;width:35px;height:13px;background:#e1e8df;border:1px solid #b8beb5;border-radius:2px"></div>
<div class="t" style="left:-216.30px;top:461.47px;width:400px;text-align:right;font-size:8.3px;font-weight:normal;color:#262630;transform:scaleX(0.77);transform-origin:100% 0;">1,108</div>
<div style="left:198px;top:14px;width:238px;height:226px;border:1px solid #8e948c;border-right:1px solid #777;"></div>
<div style="left:199.2px;top:3.4px;width:40.8px;height:11px;background:#e4ebe1;border:1px solid #9ea49b;border-bottom:none;border-right:1.2px solid #2a2a2a;"></div>
<div class="t" style="left:18.50px;top:2.87px;width:400px;text-align:center;font-size:8.3px;font-weight:normal;color:#262630;transform:scaleX(0.77);transform-origin:50% 0;">FLIM Image</div>
<div style="left:240px;top:3.4px;width:40.8px;height:11px;background:#22a13b;border-right:1px solid #2a3a2a;"></div>
<div class="t" style="left:59.80px;top:2.87px;width:400px;text-align:center;font-size:8.3px;font-weight:normal;color:#d8f2da;transform:scaleX(0.77);transform-origin:50% 0;">FRET Image</div>
<div class="t" style="left:116.00px;top:14.63px;width:400px;text-align:center;font-size:9px;font-weight:bold;color:#111;transform:scaleX(0.92);transform-origin:50% 0;">Life time FRET image</div>
<div style="left:199px;top:25px;width:235px;height:1px;background:#d9e1d6;"></div>
<div style="left:199px;top:26px;width:90px;height:212px;border-right:1px solid #bfc5bc;"></div>
<div style="left:200.2px;top:26.4px;width:88.1px;height:87.6px;background:#000;"></div>
<svg style="position:absolute;left:200.2px;top:26.4px" width="88" height="87" viewBox="0 0 88 87"><defs><filter id="bl" x="-20%" y="-20%" width="140%" height="140%"><feGaussianBlur stdDeviation="0.5"/></filter><filter id="bl2" x="-20%" y="-20%" width="140%" height="140%"><feGaussianBlur stdDeviation="1.3"/></filter></defs><polygon points="9.3,46.2 14.8,42.9 22.6,40.7 29.3,40.1 35.9,41.2 42.6,44.0 50.3,47.9 59.2,51.7 70.2,55.6 81.3,57.8 86.3,58.6 86.3,60.1 75.8,60.8 64.7,61.7 53.6,62.6 42.6,62.8 34.8,61.7 25.9,59.5 21.5,56.7 18.2,52.9 13.8,49.0" fill="#0c700c" filter="url(#bl2)"/><g filter="url(#bl)"><rect x="40.0" y="60.1" width="1.6" height="1.6" fill="rgb(7,95,7)"/><rect x="57.1" y="52.3" width="1.6" height="1.6" fill="rgb(46,87,6)"/><rect x="23.1" y="51.4" width="1.6" height="1.6" fill="rgb(9,97,7)"/><rect x="39.6" y="50.9" width="1.6" height="1.6" fill="rgb(21,82,6)"/><rect x="48.9" y="58.5" width="1.6" height="1.6" fill="rgb(18,139,11)"/><rect x="29.7" y="49.4" width="1.6" height="1.6" fill="rgb(14,123,9)"/><rect x="14.6" y="47.0" width="1.6" height="1.6" fill="rgb(10,176,14)"/><rect x="17.4" y="49.2" width="1.6" height="1.6" fill="rgb(14,85,6)"/><rect x="44.2" y="54.9" width="1.6" height="1.6" fill="rgb(46,49,3)"/><rect x="28.4" y="45.9" width="1.6" height="1.6" fill="rgb(11,165,13)"/><rect x="37.2" y="61.5" width="1.6" height="1.6" fill="rgb(20,90,7)"/><rect x="42.1" y="51.2" width="1.6" height="1.6" fill="rgb(45,57,4)"/><rect x="27.9" y="46.9" width="1.6" height="1.6" fill="rgb(12,125,10)"/><rect x="24.2" y="49.1" width="1.6" height="1.6" fill="rgb(5,155,12)"/><rect x="39.6" y="45.4" width="1.6" height="1.6" fill="rgb(10,152,12)"/><rect x="47.6" y="53.4" width="1.6" height="1.6" fill="rgb(45,59,4)"/><rect x="37.4" y="46.4" width="1.6" height="1.6" fill="rgb(40,93,7)"/><rect x="18.3" y="44.5" width="1.6" height="1.6" fill="rgb(16,86,6)"/><rect x="13.2" y="45.2" width="1.6" height="1.6" fill="rgb(14,83,6)"/><rect x="33.6" y="45.3" width="1.6" height="1.6" fill="rgb(3,95,7)"/><rect x="43.5" y="49.1" width="1.6" height="1.6" fill="rgb(31,77,6)"/><rect x="34.8" y="55.7" width="1.6" height="1.6" fill="rgb(29,63,5)"/><rect x="71.7" y="59.8" width="1.6" height="1.6" fill="rgb(7,124,9)"/><rect x="21.4" y="49.4" width="1.6" height="1.6" fill="rgb(0,173,13)"/><rect x="71.9" y="56.7" width="1.6" height="1.6" fill="rgb(33,88,7)"/><rect x="58.2" y="60.3" width="1.6" height="1.6" fill="rgb(12,95,7)"/><rect x="69.7" y="57.6" width="1.6" height="1.6" fill="rgb(5,109,8)"/><rect x="40.8" y="53.9" width="1.6" height="1.6" fill="rgb(35,91,7)"/><rect x="43.2" y="57.4" width="1.6" height="1.6" fill="rgb(18,40,3)"/><rect x="43.4" y="54.6" width="1.6" height="1.6" fill="rgb(15,158,12)"/><rect x="77.2" y="60.0" width="1.6" height="1.6" fill="rgb(11,60,4)"/><rect x="25.7" y="43.0" width="1.6" height="1.6" fill="rgb(18,110,8)"/><rect x="31.9" y="51.0" width="1.6" height="1.6" fill="rgb(4,186,14)"/><rect x="47.2" y="61.5" width="1.6" height="1.6" fill="rgb(5,179,14)"/><rect x="55.3" y="58.4" width="1.6" height="1.6" fill="rgb(5,99,7)"/><rect x="44.8" y="58.4" width="1.6" height="1.6" fill="rgb(22,45,3)"/><rect x="27.8" y="58.3" width="1.6" height="1.6" fill="rgb(14,144,11)"/><rect x="51.4" y="57.9" width="1.6" height="1.6" fill="rgb(2,196,15)"/><rect x="41.6" y="53.2" width="1.6" height="1.6" fill="rgb(27,42,3)"/><rect x="42.3" y="50.7" width="1.6" height="1.6" fill="rgb(43,45,3)"/><rect x="26.3" y="51.5" width="1.6" height="1.6" fill="rgb(6,200,16)"/><rect x="14.9" y="47.7" width="1.6" height="1.6" fill="rgb(25,89,7)"/><rect x="43.6" y="57.5" width="1.6" height="1.6" fill="rgb(20,61,4)"/><rect x="18.2" y="47.4" width="1.6" height="1.6" fill="rgb(12,145,11)"/><rect x="31.2" y="56.7" width="1.6" height="1.6" fill="rgb(31,82,6)"/><rect x="52.2" y="56.0" width="1.6" height="1.6" fill="rgb(27,91,7)"/><rect x="32.9" y="51.3" width="1.6" height="1.6" fill="rgb(8,198,15)"/><rect x="21.9" y="47.9" width="1.6" height="1.6" fill="rgb(5,166,13)"/><rect x="27.3" y="59.3" width="1.6" height="1.6" fill="rgb(1,112,8)"/><rect x="40.7" y="49.4" width="1.6" height="1.6" fill="rgb(16,186,14)"/><rect x="30.3" y="40.5" width="1.6" height="1.6" fill="rgb(10,109,8)"/><rect x="56.7" y="61.8" width="1.6" height="1.6" fill="rgb(5,135,10)"/><rect x="36.4" y="49.8" width="1.6" height="1.6" fill="rgb(28,74,5)"/><rect x="35.0" y="44.1" width="1.6" height="1.6" fill="rgb(10,150,12)"/><rect x="30.5" y="45.0" width="1.6" height="1.6" fill="rgb(31,80,6)"/><rect x="36.5" y="48.8" width="1.6" height="1.6" fill="rgb(20,144,11)"/><rect x="21.5" y="49.8" width="1.6" height="1.6" fill="rgb(15,80,6)"/><rect x="24.1" y="52.3" width="1.6" height="1.6" fill="rgb(4,147,11)"/><rect x="59.4" y="56.5" width="1.6" height="1.6" fill="rgb(19,192,15)"/><rect x="37.1" y="44.0" width="1.6" height="1.6" fill="rgb(4,143,11)"/><rect x="28.4" y="53.4" width="1.6" height="1.6" fill="rgb(1,98,7)"/><rect x="73.3" y="56.5" width="1.6" height="1.6" fill="rgb(20,97,7)"/><rect x="40.4" y="56.0" width="1.6" height="1.6" fill="rgb(42,63,5)"/><rect x="52.0" y="59.6" width="1.6" height="1.6" fill="rgb(47,82,6)"/><rect x="71.0" y="56.4" width="1.6" height="1.6" fill="rgb(20,123,9)"/><rect x="15.8" y="45.1" width="1.6" height="1.6" fill="rgb(34,93,7)"/><rect x="56.9" y="53.6" width="1.6" height="1.6" fill="rgb(7,167,13)"/><rect x="71.0" y="57.5" width="1.6" height="1.6" fill="rgb(17,106,8)"/><rect x="72.0" y="60.7" width="1.6" height="1.6" fill="rgb(23,78,6)"/><rect x="24.0" y="54.4" width="1.6" height="1.6" fill="rgb(15,138,11)"/><rect x="21.3" y="52.8" width="1.6" height="1.6" fill="rgb(8,122,9)"/><rect x="58.9" y="55.8" width="1.6" height="1.6" fill="rgb(18,159,12)"/><rect x="15.9" y="49.0" width="1.6" height="1.6" fill="rgb(8,142,11)"/><rect x="22.9" y="49.3" width="1.6" height="1.6" fill="rgb(16,170,13)"/><rect x="28.5" y="48.5" width="1.6" height="1.6" fill="rgb(3,178,14)"/><rect x="26.5" y="45.1" width="1.6" height="1.6" fill="rgb(20,157,12)"/><rect x="47.0" y="62.0" width="1.6" height="1.6" fill="rgb(11,170,13)"/><rect x="16.5" y="44.6" width="1.6" height="1.6" fill="rgb(3,120,9)"/><rect x="67.1" y="60.5" width="1.6" height="1.6" fill="rgb(22,80,6)"/><rect x="28.9" y="45.5" width="1.6" height="1.6" fill="rgb(12,130,10)"/><rect x="34.7" y="47.3" width="1.6" height="1.6" fill="rgb(1,115,9)"/><rect x="59.7" y="53.9" width="1.6" height="1.6" fill="rgb(7,99,7)"/><rect x="31.0" y="58.3" width="1.6" height="1.6" fill="rgb(13,180,14)"/><rect x="78.2" y="59.6" width="1.6" height="1.6" fill="rgb(35,85,6)"/><rect x="50.4" y="56.6" width="1.6" height="1.6" fill="rgb(36,86,6)"/><rect x="42.2" y="57.7" width="1.6" height="1.6" fill="rgb(15,162,12)"/><rect x="15.4" y="48.7" width="1.6" height="1.6" fill="rgb(9,123,9)"/><rect x="29.5" y="57.2" width="1.6" height="1.6" fill="rgb(8,163,13)"/><rect x="44.9" y="55.0" width="1.6" height="1.6" fill="rgb(14,40,3)"/><rect x="24.6" y="41.9" width="1.6" height="1.6" fill="rgb(6,152,12)"/><rect x="78.4" y="57.6" width="1.6" height="1.6" fill="rgb(34,69,5)"/><rect x="39.2" y="50.4" width="1.6" height="1.6" fill="rgb(13,78,6)"/><rect x="46.1" y="52.0" width="1.6" height="1.6" fill="rgb(43,62,4)"/><rect x="57.1" y="61.2" width="1.6" height="1.6" fill="rgb(2,107,8)"/><rect x="27.3" y="41.6" width="1.6" height="1.6" fill="rgb(20,131,10)"/><rect x="44.1" y="52.4" width="1.6" height="1.6" fill="rgb(43,89,7)"/><rect x="17.6" y="50.3" width="1.6" height="1.6" fill="rgb(3,167,13)"/><rect x="58.5" y="58.1" width="1.6" height="1.6" fill="rgb(2,138,11)"/><rect x="25.7" y="54.0" width="1.6" height="1.6" fill="rgb(3,169,13)"/><rect x="26.5" y="58.9" width="1.6" height="1.6" fill="rgb(10,80,6)"/><rect x="27.9" y="43.7" width="1.6" height="1.6" fill="rgb(7,187,14)"/><rect x="26.2" y="55.0" width="1.6" height="1.6" fill="rgb(11,198,15)"/><rect x="32.9" y="47.1" width="1.6" height="1.6" fill="rgb(12,167,13)"/><rect x="30.7" y="59.8" width="1.6" height="1.6" fill="rgb(14,109,8)"/><rect x="23.3" y="46.9" width="1.6" height="1.6" fill="rgb(1,165,13)"/><rect x="36.2" y="45.6" width="1.6" height="1.6" fill="rgb(14,122,9)"/><rect x="28.0" y="44.8" width="1.6" height="1.6" fill="rgb(3,193,15)"/><rect x="51.4" y="57.9" width="1.6" height="1.6" fill="rgb(11,128,10)"/><rect x="49.7" y="47.9" width="1.6" height="1.6" fill="rgb(11,121,9)"/><rect x="36.0" y="48.4" width="1.6" height="1.6" fill="rgb(1,182,14)"/><rect x="26.1" y="57.5" width="1.6" height="1.6" fill="rgb(19,195,15)"/><rect x="32.9" y="42.3" width="1.6" height="1.6" fill="rgb(1,158,12)"/><rect x="26.6" y="56.5" width="1.6" height="1.6" fill="rgb(8,120,9)"/><rect x="29.5" y="56.7" width="1.6" height="1.6" fill="rgb(20,156,12)"/><rect x="69.2" y="58.9" width="1.6" height="1.6" fill="rgb(13,154,12)"/><rect x="43.0" y="58.7" width="1.6" height="1.6" fill="rgb(35,42,3)"/><rect x="46.2" y="56.3" width="1.6" height="1.6" fill="rgb(36,38,3)"/><rect x="43.1" y="62.1" width="1.6" height="1.6" fill="rgb(17,110,8)"/><rect x="29.2" y="51.7" width="1.6" height="1.6" fill="rgb(8,127,10)"/><rect x="25.3" y="41.5" width="1.6" height="1.6" fill="rgb(9,99,7)"/><rect x="31.9" y="46.3" width="1.6" height="1.6" fill="rgb(16,111,8)"/><rect x="48.5" y="54.4" width="1.6" height="1.6" fill="rgb(16,32,2)"/><rect x="24.0" y="47.9" width="1.6" height="1.6" fill="rgb(1,127,10)"/><rect x="19.6" y="52.9" width="1.6" height="1.6" fill="rgb(0,179,14)"/><rect x="21.7" y="41.8" width="1.6" height="1.6" fill="rgb(20,156,12)"/><rect x="80.7" y="59.7" width="1.6" height="1.6" fill="rgb(30,84,6)"/><rect x="38.7" y="45.5" width="1.6" height="1.6" fill="rgb(9,159,12)"/><rect x="45.9" y="49.1" width="1.6" height="1.6" fill="rgb(45,55,4)"/><rect x="17.6" y="50.7" width="1.6" height="1.6" fill="rgb(5,163,13)"/><rect x="37.8" y="42.3" width="1.6" height="1.6" fill="rgb(9,116,9)"/><rect x="68.4" y="59.3" width="1.6" height="1.6" fill="rgb(6,131,10)"/><rect x="37.2" y="46.6" width="1.6" height="1.6" fill="rgb(0,200,16)"/><rect x="36.6" y="57.7" width="1.6" height="1.6" fill="rgb(6,181,14)"/><rect x="29.8" y="60.4" width="1.6" height="1.6" fill="rgb(40,85,6)"/><rect x="30.9" y="53.0" width="1.6" height="1.6" fill="rgb(12,161,12)"/><rect x="57.9" y="61.0" width="1.6" height="1.6" fill="rgb(12,159,12)"/><rect x="44.1" y="51.7" width="1.6" height="1.6" fill="rgb(20,63,5)"/><rect x="25.3" y="56.8" width="1.6" height="1.6" fill="rgb(6,194,15)"/><rect x="54.6" y="51.2" width="1.6" height="1.6" fill="rgb(9,160,12)"/><rect x="25.5" y="46.1" width="1.6" height="1.6" fill="rgb(14,127,10)"/><rect x="43.4" y="47.9" width="1.6" height="1.6" fill="rgb(14,159,12)"/><rect x="74.2" y="59.5" width="1.6" height="1.6" fill="rgb(16,84,6)"/><rect x="35.1" y="59.3" width="1.6" height="1.6" fill="rgb(16,144,11)"/><rect x="30.8" y="56.7" width="1.6" height="1.6" fill="rgb(13,90,7)"/><rect x="59.0" y="58.7" width="1.6" height="1.6" fill="rgb(14,83,6)"/><rect x="33.9" y="57.8" width="1.6" height="1.6" fill="rgb(10,100,8)"/><rect x="22.1" y="42.0" width="1.6" height="1.6" fill="rgb(7,144,11)"/><rect x="48.8" y="54.0" width="1.6" height="1.6" fill="rgb(14,126,10)"/><rect x="50.9" y="52.2" width="1.6" height="1.6" fill="rgb(3,192,15)"/><rect x="25.7" y="50.7" width="1.6" height="1.6" fill="rgb(12,189,15)"/><rect x="36.0" y="45.4" width="1.6" height="1.6" fill="rgb(11,98,7)"/><rect x="23.9" y="53.3" width="1.6" height="1.6" fill="rgb(28,86,6)"/><rect x="53.4" y="54.8" width="1.6" height="1.6" fill="rgb(0,120,9)"/><rect x="29.0" y="53.6" width="1.6" height="1.6" fill="rgb(16,133,10)"/><rect x="45.3" y="53.2" width="1.6" height="1.6" fill="rgb(46,30,2)"/><rect x="53.2" y="52.5" width="1.6" height="1.6" fill="rgb(11,106,8)"/><rect x="77.1" y="58.6" width="1.6" height="1.6" fill="rgb(26,73,5)"/><rect x="54.2" y="52.1" width="1.6" height="1.6" fill="rgb(16,157,12)"/><rect x="58.1" y="59.6" width="1.6" height="1.6" fill="rgb(16,102,8)"/><rect x="30.5" y="43.2" width="1.6" height="1.6" fill="rgb(40,86,6)"/><rect x="74.9" y="57.4" width="1.6" height="1.6" fill="rgb(15,87,6)"/><rect x="32.6" y="57.6" width="1.6" height="1.6" fill="rgb(8,168,13)"/><rect x="26.8" y="54.1" width="1.6" height="1.6" fill="rgb(6,194,15)"/><rect x="20.7" y="46.0" width="1.6" height="1.6" fill="rgb(7,156,12)"/><rect x="36.3" y="60.9" width="1.6" height="1.6" fill="rgb(17,197,15)"/><rect x="43.8" y="60.5" width="1.6" height="1.6" fill="rgb(0,169,13)"/><rect x="30.3" y="40.4" width="1.6" height="1.6" fill="rgb(18,159,12)"/><rect x="62.3" y="53.9" width="1.6" height="1.6" fill="rgb(2,166,13)"/><rect x="72.7" y="59.8" width="1.6" height="1.6" fill="rgb(2,133,10)"/><rect x="77.8" y="57.8" width="1.6" height="1.6" fill="rgb(34,92,7)"/><rect x="75.2" y="59.6" width="1.6" height="1.6" fill="rgb(2,99,7)"/><rect x="21.8" y="43.8" width="1.6" height="1.6" fill="rgb(8,134,10)"/><rect x="28.3" y="56.5" width="1.6" height="1.6" fill="rgb(10,127,10)"/><rect x="66.7" y="58.8" width="1.6" height="1.6" fill="rgb(37,71,5)"/><rect x="51.8" y="56.5" width="1.6" height="1.6" fill="rgb(2,185,14)"/><rect x="41.0" y="50.4" width="1.6" height="1.6" fill="rgb(1,116,9)"/><rect x="45.6" y="59.1" width="1.6" height="1.6" fill="rgb(15,103,8)"/><rect x="47.6" y="52.1" width="1.6" height="1.6" fill="rgb(24,43,3)"/><rect x="70.2" y="55.9" width="1.6" height="1.6" fill="rgb(3,136,10)"/><rect x="38.1" y="46.2" width="1.6" height="1.6" fill="rgb(2,193,15)"/><rect x="39.8" y="54.3" width="1.6" height="1.6" fill="rgb(37,46,3)"/><rect x="36.3" y="61.9" width="1.6" height="1.6" fill="rgb(14,109,8)"/><rect x="62.0" y="53.0" width="1.6" height="1.6" fill="rgb(32,83,6)"/><rect x="53.1" y="50.3" width="1.6" height="1.6" fill="rgb(14,191,15)"/><rect x="59.8" y="57.3" width="1.6" height="1.6" fill="rgb(14,101,8)"/><rect x="41.2" y="58.3" width="1.6" height="1.6" fill="rgb(39,51,4)"/><rect x="58.1" y="55.9" width="1.6" height="1.6" fill="rgb(6,144,11)"/><rect x="27.0" y="57.8" width="1.6" height="1.6" fill="rgb(19,185,14)"/><rect x="25.3" y="44.1" width="1.6" height="1.6" fill="rgb(11,146,11)"/><rect x="18.2" y="44.1" width="1.6" height="1.6" fill="rgb(8,104,8)"/><rect x="13.2" y="45.9" width="1.6" height="1.6" fill="rgb(9,98,7)"/><rect x="21.1" y="54.0" width="1.6" height="1.6" fill="rgb(27,93,7)"/><rect x="21.9" y="46.0" width="1.6" height="1.6" fill="rgb(10,84,6)"/><rect x="37.9" y="58.9" width="1.6" height="1.6" fill="rgb(7,168,13)"/><rect x="46.3" y="53.8" width="1.6" height="1.6" fill="rgb(48,46,3)"/><rect x="58.5" y="60.7" width="1.6" height="1.6" fill="rgb(20,165,13)"/><rect x="77.8" y="58.4" width="1.6" height="1.6" fill="rgb(47,91,7)"/><rect x="30.8" y="53.7" width="1.6" height="1.6" fill="rgb(36,92,7)"/><rect x="24.9" y="46.4" width="1.6" height="1.6" fill="rgb(20,171,13)"/><rect x="59.7" y="61.5" width="1.6" height="1.6" fill="rgb(20,194,15)"/><rect x="22.9" y="56.5" width="1.6" height="1.6" fill="rgb(6,200,16)"/><rect x="52.5" y="50.9" width="1.6" height="1.6" fill="rgb(15,171,13)"/><rect x="47.3" y="54.1" width="1.6" height="1.6" fill="rgb(36,51,4)"/><rect x="57.0" y="55.2" width="1.6" height="1.6" fill="rgb(8,154,12)"/><rect x="20.8" y="54.2" width="1.6" height="1.6" fill="rgb(7,172,13)"/><rect x="60.1" y="60.2" width="1.6" height="1.6" fill="rgb(13,181,14)"/><rect x="36.0" y="41.7" width="1.6" height="1.6" fill="rgb(5,134,10)"/><rect x="44.8" y="59.4" width="1.6" height="1.6" fill="rgb(8,182,14)"/><rect x="34.5" y="54.5" width="1.6" height="1.6" fill="rgb(49,57,4)"/><rect x="57.7" y="54.7" width="1.6" height="1.6" fill="rgb(4,126,10)"/><rect x="80.0" y="58.7" width="1.6" height="1.6" fill="rgb(43,46,3)"/><rect x="79.0" y="58.8" width="1.6" height="1.6" fill="rgb(9,95,7)"/><rect x="21.2" y="55.8" width="1.6" height="1.6" fill="rgb(2,147,11)"/><rect x="26.8" y="41.1" width="1.6" height="1.6" fill="rgb(15,97,7)"/><rect x="45.6" y="49.5" width="1.6" height="1.6" fill="rgb(10,77,6)"/><rect x="18.1" y="43.9" width="1.6" height="1.6" fill="rgb(18,169,13)"/><rect x="43.5" y="47.2" width="1.6" height="1.6" fill="rgb(2,166,13)"/><rect x="19.8" y="45.1" width="1.6" height="1.6" fill="rgb(0,162,12)"/><rect x="45.0" y="57.8" width="1.6" height="1.6" fill="rgb(36,75,6)"/><rect x="44.2" y="50.4" width="1.6" height="1.6" fill="rgb(9,178,14)"/><rect x="40.9" y="47.1" width="1.6" height="1.6" fill="rgb(1,150,12)"/><rect x="59.1" y="58.9" width="1.6" height="1.6" fill="rgb(6,122,9)"/><rect x="31.1" y="43.2" width="1.6" height="1.6" fill="rgb(20,155,12)"/><rect x="37.9" y="51.3" width="1.6" height="1.6" fill="rgb(35,33,2)"/><rect x="55.3" y="54.7" width="1.6" height="1.6" fill="rgb(16,180,14)"/><rect x="56.0" y="53.7" width="1.6" height="1.6" fill="rgb(19,169,13)"/><rect x="59.9" y="61.4" width="1.6" height="1.6" fill="rgb(3,133,10)"/><rect x="35.4" y="59.9" width="1.6" height="1.6" fill="rgb(9,180,14)"/><rect x="29.9" y="47.1" width="1.6" height="1.6" fill="rgb(0,120,9)"/><rect x="40.5" y="54.1" width="1.6" height="1.6" fill="rgb(15,199,15)"/><rect x="36.9" y="52.5" width="1.6" height="1.6" fill="rgb(40,39,3)"/><rect x="14.9" y="48.7" width="1.6" height="1.6" fill="rgb(18,115,9)"/><rect x="24.9" y="57.1" width="1.6" height="1.6" fill="rgb(1,103,8)"/><rect x="35.2" y="57.5" width="1.6" height="1.6" fill="rgb(4,168,13)"/><rect x="57.0" y="56.3" width="1.6" height="1.6" fill="rgb(8,138,11)"/><rect x="30.7" y="52.8" width="1.6" height="1.6" fill="rgb(15,190,15)"/><rect x="27.4" y="57.8" width="1.6" height="1.6" fill="rgb(9,122,9)"/><rect x="28.0" y="53.5" width="1.6" height="1.6" fill="rgb(19,163,13)"/><rect x="32.4" y="53.0" width="1.6" height="1.6" fill="rgb(19,81,6)"/><rect x="40.4" y="62.0" width="1.6" height="1.6" fill="rgb(12,128,10)"/><rect x="61.6" y="52.9" width="1.6" height="1.6" fill="rgb(7,194,15)"/><rect x="39.9" y="52.4" width="1.6" height="1.6" fill="rgb(1,184,14)"/><rect x="49.2" y="50.9" width="1.6" height="1.6" fill="rgb(12,142,11)"/><rect x="55.2" y="55.3" width="1.6" height="1.6" fill="rgb(6,139,11)"/><rect x="49.7" y="50.8" width="1.6" height="1.6" fill="rgb(2,125,10)"/><rect x="24.1" y="52.1" width="1.6" height="1.6" fill="rgb(8,194,15)"/><rect x="44.4" y="52.5" width="1.6" height="1.6" fill="rgb(21,35,2)"/><rect x="69.5" y="61.0" width="1.6" height="1.6" fill="rgb(12,86,6)"/><rect x="28.1" y="53.0" width="1.6" height="1.6" fill="rgb(12,92,7)"/><rect x="51.7" y="52.4" width="1.6" height="1.6" fill="rgb(8,107,8)"/><rect x="12.9" y="47.9" width="1.6" height="1.6" fill="rgb(19,155,12)"/><rect x="51.7" y="54.1" width="1.6" height="1.6" fill="rgb(16,197,15)"/><rect x="37.4" y="47.9" width="1.6" height="1.6" fill="rgb(11,100,8)"/><rect x="26.0" y="44.9" width="1.6" height="1.6" fill="rgb(17,195,15)"/><rect x="79.9" y="60.4" width="1.6" height="1.6" fill="rgb(26,41,3)"/><rect x="70.1" y="56.3" width="1.6" height="1.6" fill="rgb(15,123,9)"/><rect x="53.9" y="57.9" width="1.6" height="1.6" fill="rgb(40,93,7)"/><rect x="31.7" y="41.8" width="1.6" height="1.6" fill="rgb(11,95,7)"/><rect x="16.4" y="47.9" width="1.6" height="1.6" fill="rgb(34,92,7)"/><rect x="42.3" y="44.5" width="1.6" height="1.6" fill="rgb(7,185,14)"/><rect x="44.4" y="53.7" width="1.6" height="1.6" fill="rgb(13,77,6)"/><rect x="19.8" y="48.0" width="1.6" height="1.6" fill="rgb(4,193,15)"/><rect x="29.4" y="59.3" width="1.6" height="1.6" fill="rgb(15,113,9)"/><rect x="13.9" y="48.2" width="1.6" height="1.6" fill="rgb(3,141,11)"/><rect x="17.5" y="50.0" width="1.6" height="1.6" fill="rgb(6,160,12)"/><rect x="51.3" y="60.3" width="1.6" height="1.6" fill="rgb(8,95,7)"/><rect x="24.6" y="41.2" width="1.6" height="1.6" fill="rgb(9,129,10)"/><rect x="41.5" y="49.8" width="1.6" height="1.6" fill="rgb(43,30,2)"/><rect x="28.6" y="45.1" width="1.6" height="1.6" fill="rgb(36,85,6)"/><rect x="22.9" y="51.9" width="1.6" height="1.6" fill="rgb(5,97,7)"/><rect x="19.4" y="52.8" width="1.6" height="1.6" fill="rgb(2,186,14)"/><rect x="28.2" y="54.1" width="1.6" height="1.6" fill="rgb(2,143,11)"/><rect x="44.4" y="61.5" width="1.6" height="1.6" fill="rgb(7,114,9)"/><rect x="35.6" y="52.6" width="1.6" height="1.6" fill="rgb(38,89,7)"/><rect x="34.4" y="41.4" width="1.6" height="1.6" fill="rgb(10,186,14)"/><rect x="52.6" y="62.3" width="1.6" height="1.6" fill="rgb(3,117,9)"/><rect x="47.4" y="50.6" width="1.6" height="1.6" fill="rgb(15,45,3)"/><rect x="54.6" y="52.0" width="1.6" height="1.6" fill="rgb(7,146,11)"/><rect x="45.8" y="49.6" width="1.6" height="1.6" fill="rgb(35,37,2)"/><rect x="23.7" y="40.9" width="1.6" height="1.6" fill="rgb(18,165,13)"/><rect x="43.2" y="46.3" width="1.6" height="1.6" fill="rgb(0,185,14)"/><rect x="39.7" y="60.5" width="1.6" height="1.6" fill="rgb(1,147,11)"/><rect x="24.8" y="44.3" width="1.6" height="1.6" fill="rgb(18,135,10)"/><rect x="72.4" y="60.7" width="1.6" height="1.6" fill="rgb(30,59,4)"/><rect x="39.8" y="53.8" width="1.6" height="1.6" fill="rgb(14,41,3)"/><rect x="39.7" y="46.3" width="1.6" height="1.6" fill="rgb(14,199,15)"/><rect x="57.4" y="59.5" width="1.6" height="1.6" fill="rgb(1,193,15)"/><rect x="26.9" y="55.3" width="1.6" height="1.6" fill="rgb(20,114,9)"/><rect x="48.0" y="47.5" width="1.6" height="1.6" fill="rgb(28,85,6)"/><rect x="14.2" y="44.7" width="1.6" height="1.6" fill="rgb(3,101,8)"/><rect x="47.3" y="61.9" width="1.6" height="1.6" fill="rgb(13,197,15)"/><rect x="65.9" y="57.3" width="1.6" height="1.6" fill="rgb(14,102,8)"/><rect x="55.4" y="51.8" width="1.6" height="1.6" fill="rgb(12,163,13)"/><rect x="21.5" y="56.3" width="1.6" height="1.6" fill="rgb(17,138,11)"/><rect x="30.0" y="48.9" width="1.6" height="1.6" fill="rgb(9,184,14)"/><rect x="20.5" y="51.1" width="1.6" height="1.6" fill="rgb(12,154,12)"/><rect x="51.0" y="49.3" width="1.6" height="1.6" fill="rgb(6,116,9)"/><rect x="29.3" y="58.3" width="1.6" height="1.6" fill="rgb(17,100,8)"/><rect x="37.0" y="47.7" width="1.6" height="1.6" fill="rgb(3,174,13)"/><rect x="39.4" y="55.0" width="1.6" height="1.6" fill="rgb(49,69,5)"/><rect x="75.3" y="59.9" width="1.6" height="1.6" fill="rgb(16,89,7)"/><rect x="66.1" y="57.4" width="1.6" height="1.6" fill="rgb(15,155,12)"/><rect x="27.1" y="53.8" width="1.6" height="1.6" fill="rgb(4,160,12)"/><rect x="38.9" y="51.2" width="1.6" height="1.6" fill="rgb(19,66,5)"/><rect x="39.5" y="58.7" width="1.6" height="1.6" fill="rgb(34,37,2)"/><rect x="28.7" y="44.9" width="1.6" height="1.6" fill="rgb(12,125,10)"/><rect x="48.5" y="52.7" width="1.6" height="1.6" fill="rgb(41,80,6)"/><rect x="36.4" y="43.2" width="1.6" height="1.6" fill="rgb(9,148,11)"/><rect x="24.9" y="44.0" width="1.6" height="1.6" fill="rgb(0,134,10)"/><rect x="73.3" y="56.9" width="1.6" height="1.6" fill="rgb(34,90,7)"/><rect x="23.8" y="46.7" width="1.6" height="1.6" fill="rgb(12,144,11)"/><rect x="39.8" y="46.5" width="1.6" height="1.6" fill="rgb(19,178,14)"/><rect x="62.2" y="57.5" width="1.6" height="1.6" fill="rgb(20,89,7)"/><rect x="34.9" y="45.3" width="1.6" height="1.6" fill="rgb(29,89,7)"/><rect x="17.8" y="42.9" width="1.6" height="1.6" fill="rgb(6,145,11)"/><rect x="19.9" y="53.8" width="1.6" height="1.6" fill="rgb(3,157,12)"/><rect x="38.9" y="58.8" width="1.6" height="1.6" fill="rgb(10,65,5)"/><rect x="21.3" y="52.9" width="1.6" height="1.6" fill="rgb(5,98,7)"/><rect x="47.8" y="49.9" width="1.6" height="1.6" fill="rgb(43,40,3)"/><rect x="45.5" y="48.6" width="1.6" height="1.6" fill="rgb(1,135,10)"/><rect x="58.8" y="55.5" width="1.6" height="1.6" fill="rgb(10,154,12)"/><rect x="57.0" y="61.1" width="1.6" height="1.6" fill="rgb(2,154,12)"/><rect x="33.8" y="48.0" width="1.6" height="1.6" fill="rgb(0,129,10)"/><rect x="41.3" y="53.4" width="1.6" height="1.6" fill="rgb(47,40,3)"/><rect x="79.4" y="59.7" width="1.6" height="1.6" fill="rgb(36,58,4)"/><rect x="25.0" y="46.1" width="1.6" height="1.6" fill="rgb(18,171,13)"/><rect x="23.2" y="43.5" width="1.6" height="1.6" fill="rgb(15,192,15)"/><rect x="34.9" y="44.3" width="1.6" height="1.6" fill="rgb(12,191,15)"/><rect x="32.7" y="54.4" width="1.6" height="1.6" fill="rgb(13,95,7)"/><rect x="28.3" y="41.2" width="1.6" height="1.6" fill="rgb(27,84,6)"/><rect x="41.6" y="60.4" width="1.6" height="1.6" fill="rgb(7,183,14)"/><rect x="18.0" y="44.9" width="1.6" height="1.6" fill="rgb(12,172,13)"/><rect x="35.3" y="41.5" width="1.6" height="1.6" fill="rgb(16,157,12)"/><rect x="15.0" y="50.0" width="1.6" height="1.6" fill="rgb(8,149,11)"/><rect x="65.9" y="58.1" width="1.6" height="1.6" fill="rgb(46,73,5)"/><rect x="63.8" y="55.8" width="1.6" height="1.6" fill="rgb(7,168,13)"/><rect x="31.4" y="54.8" width="1.6" height="1.6" fill="rgb(14,93,7)"/><rect x="61.2" y="54.8" width="1.6" height="1.6" fill="rgb(13,124,9)"/><rect x="27.3" y="53.1" width="1.6" height="1.6" fill="rgb(1,108,8)"/><rect x="38.4" y="53.1" width="1.6" height="1.6" fill="rgb(19,49,3)"/><rect x="30.6" y="54.0" width="1.6" height="1.6" fill="rgb(18,102,8)"/><rect x="40.9" y="55.5" width="1.6" height="1.6" fill="rgb(3,124,9)"/><rect x="74.0" y="58.4" width="1.6" height="1.6" fill="rgb(12,75,6)"/><rect x="31.2" y="58.5" width="1.6" height="1.6" fill="rgb(2,124,9)"/><rect x="39.4" y="57.4" width="1.6" height="1.6" fill="rgb(27,44,3)"/><rect x="33.0" y="49.7" width="1.6" height="1.6" fill="rgb(20,168,13)"/><rect x="60.7" y="60.7" width="1.6" height="1.6" fill="rgb(4,179,14)"/><rect x="83.8" y="60.0" width="1.6" height="1.6" fill="rgb(26,55,4)"/><rect x="18.7" y="44.7" width="1.6" height="1.6" fill="rgb(22,91,7)"/><rect x="44.9" y="56.2" width="1.6" height="1.6" fill="rgb(18,58,4)"/><rect x="32.5" y="59.7" width="1.6" height="1.6" fill="rgb(13,150,12)"/><rect x="60.1" y="52.8" width="1.6" height="1.6" fill="rgb(12,139,11)"/><rect x="28.8" y="45.1" width="1.6" height="1.6" fill="rgb(1,106,8)"/><rect x="21.2" y="56.1" width="1.6" height="1.6" fill="rgb(3,137,10)"/><rect x="18.2" y="47.8" width="1.6" height="1.6" fill="rgb(11,152,12)"/><rect x="28.8" y="51.4" width="1.6" height="1.6" fill="rgb(10,85,6)"/><rect x="45.1" y="57.5" width="1.6" height="1.6" fill="rgb(18,122,9)"/><rect x="26.7" y="54.2" width="1.6" height="1.6" fill="rgb(15,135,10)"/><rect x="20.6" y="51.0" width="1.6" height="1.6" fill="rgb(32,81,6)"/><rect x="20.2" y="54.0" width="1.6" height="1.6" fill="rgb(5,188,15)"/><rect x="30.6" y="53.3" width="1.6" height="1.6" fill="rgb(5,128,10)"/><rect x="81.1" y="60.4" width="1.6" height="1.6" fill="rgb(25,50,4)"/><rect x="39.9" y="57.0" width="1.6" height="1.6" fill="rgb(15,70,5)"/><rect x="22.9" y="45.5" width="1.6" height="1.6" fill="rgb(49,84,6)"/><rect x="75.8" y="58.8" width="1.6" height="1.6" fill="rgb(19,80,6)"/><rect x="28.3" y="54.8" width="1.6" height="1.6" fill="rgb(13,145,11)"/><rect x="51.9" y="48.6" width="1.6" height="1.6" fill="rgb(10,149,11)"/><rect x="47.7" y="47.3" width="1.6" height="1.6" fill="rgb(20,148,11)"/><rect x="60.9" y="53.1" width="1.6" height="1.6" fill="rgb(18,118,9)"/><rect x="44.7" y="54.3" width="1.6" height="1.6" fill="rgb(16,118,9)"/><rect x="20.5" y="55.3" width="1.6" height="1.6" fill="rgb(2,137,10)"/><rect x="34.7" y="41.3" width="1.6" height="1.6" fill="rgb(12,136,10)"/><rect x="26.5" y="40.9" width="1.6" height="1.6" fill="rgb(6,193,15)"/><rect x="25.7" y="49.3" width="1.6" height="1.6" fill="rgb(14,150,12)"/><rect x="23.6" y="51.9" width="1.6" height="1.6" fill="rgb(42,94,7)"/><rect x="46.6" y="49.8" width="1.6" height="1.6" fill="rgb(3,187,14)"/><rect x="47.6" y="48.3" width="1.6" height="1.6" fill="rgb(12,167,13)"/><rect x="20.7" y="48.8" width="1.6" height="1.6" fill="rgb(18,91,7)"/><rect x="35.8" y="53.4" width="1.6" height="1.6" fill="rgb(12,53,4)"/><rect x="22.5" y="43.2" width="1.6" height="1.6" fill="rgb(4,170,13)"/><rect x="40.2" y="62.0" width="1.6" height="1.6" fill="rgb(6,159,12)"/><rect x="68.2" y="55.4" width="1.6" height="1.6" fill="rgb(8,151,12)"/><rect x="15.0" y="45.5" width="1.6" height="1.6" fill="rgb(16,174,13)"/><rect x="41.9" y="60.4" width="1.6" height="1.6" fill="rgb(14,154,12)"/><rect x="20.2" y="51.3" width="1.6" height="1.6" fill="rgb(12,117,9)"/><rect x="56.3" y="54.2" width="1.6" height="1.6" fill="rgb(12,156,12)"/><rect x="30.9" y="44.3" width="1.6" height="1.6" fill="rgb(10,141,11)"/><rect x="23.6" y="41.6" width="1.6" height="1.6" fill="rgb(19,192,15)"/><rect x="27.5" y="49.6" width="1.6" height="1.6" fill="rgb(11,113,9)"/><rect x="52.0" y="50.5" width="1.6" height="1.6" fill="rgb(1,97,7)"/><rect x="40.2" y="51.9" width="1.6" height="1.6" fill="rgb(25,48,3)"/><rect x="68.2" y="57.3" width="1.6" height="1.6" fill="rgb(20,118,9)"/><rect x="63.3" y="55.1" width="1.6" height="1.6" fill="rgb(15,185,14)"/><rect x="46.6" y="62.2" width="1.6" height="1.6" fill="rgb(7,183,14)"/><rect x="37.7" y="58.3" width="1.6" height="1.6" fill="rgb(19,34,2)"/><rect x="29.8" y="43.5" width="1.6" height="1.6" fill="rgb(18,173,13)"/><rect x="19.6" y="52.2" width="1.6" height="1.6" fill="rgb(11,139,11)"/><rect x="50.2" y="57.9" width="1.6" height="1.6" fill="rgb(8,160,12)"/><rect x="52.6" y="56.6" width="1.6" height="1.6" fill="rgb(22,80,6)"/><rect x="27.3" y="54.2" width="1.6" height="1.6" fill="rgb(50,81,6)"/><rect x="55.4" y="59.2" width="1.6" height="1.6" fill="rgb(1,102,8)"/><rect x="76.5" y="59.1" width="1.6" height="1.6" fill="rgb(50,52,4)"/><rect x="55.7" y="58.4" width="1.6" height="1.6" fill="rgb(12,156,12)"/><rect x="26.1" y="48.4" width="1.6" height="1.6" fill="rgb(11,81,6)"/><rect x="55.8" y="56.8" width="1.6" height="1.6" fill="rgb(5,122,9)"/><rect x="39.9" y="50.8" width="1.6" height="1.6" fill="rgb(4,155,12)"/><rect x="59.4" y="52.9" width="1.6" height="1.6" fill="rgb(7,122,9)"/><rect x="63.8" y="58.0" width="1.6" height="1.6" fill="rgb(20,168,13)"/><rect x="30.5" y="58.3" width="1.6" height="1.6" fill="rgb(14,170,13)"/><rect x="25.8" y="51.5" width="1.6" height="1.6" fill="rgb(33,92,7)"/><rect x="26.3" y="53.0" width="1.6" height="1.6" fill="rgb(4,174,13)"/><rect x="75.8" y="58.5" width="1.6" height="1.6" fill="rgb(11,88,7)"/><rect x="33.9" y="56.3" width="1.6" height="1.6" fill="rgb(15,136,10)"/><rect x="33.9" y="40.9" width="1.6" height="1.6" fill="rgb(13,128,10)"/><rect x="59.3" y="61.1" width="1.6" height="1.6" fill="rgb(26,83,6)"/><rect x="24.9" y="44.9" width="1.6" height="1.6" fill="rgb(13,121,9)"/><rect x="27.0" y="57.6" width="1.6" height="1.6" fill="rgb(9,185,14)"/><rect x="28.3" y="44.2" width="1.6" height="1.6" fill="rgb(7,142,11)"/><rect x="52.9" y="61.9" width="1.6" height="1.6" fill="rgb(11,106,8)"/><rect x="41.2" y="47.5" width="1.6" height="1.6" fill="rgb(9,97,7)"/><rect x="61.7" y="59.4" width="1.6" height="1.6" fill="rgb(0,99,7)"/><rect x="15.9" y="43.3" width="1.6" height="1.6" fill="rgb(11,144,11)"/><rect x="14.8" y="49.2" width="1.6" height="1.6" fill="rgb(16,97,7)"/><rect x="14.1" y="44.9" width="1.6" height="1.6" fill="rgb(2,143,11)"/><rect x="19.5" y="42.1" width="1.6" height="1.6" fill="rgb(12,88,7)"/><rect x="27.0" y="44.0" width="1.6" height="1.6" fill="rgb(39,85,6)"/><rect x="49.9" y="51.2" width="1.6" height="1.6" fill="rgb(13,168,13)"/><rect x="31.2" y="47.0" width="1.6" height="1.6" fill="rgb(12,99,7)"/><rect x="62.4" y="57.0" width="1.6" height="1.6" fill="rgb(6,108,8)"/><rect x="51.2" y="55.5" width="1.6" height="1.6" fill="rgb(17,136,10)"/><rect x="33.2" y="51.1" width="1.6" height="1.6" fill="rgb(7,128,10)"/><rect x="73.3" y="58.9" width="1.6" height="1.6" fill="rgb(12,128,10)"/><rect x="59.5" y="60.0" width="1.6" height="1.6" fill="rgb(50,89,7)"/><rect x="81.5" y="58.1" width="1.6" height="1.6" fill="rgb(40,49,3)"/><rect x="53.7" y="51.9" width="1.6" height="1.6" fill="rgb(2,98,7)"/><rect x="48.3" y="50.5" width="1.6" height="1.6" fill="rgb(21,73,5)"/><rect x="34.8" y="61.2" width="1.6" height="1.6" fill="rgb(3,134,10)"/><rect x="38.8" y="56.1" width="1.6" height="1.6" fill="rgb(43,52,4)"/><rect x="48.1" y="48.1" width="1.6" height="1.6" fill="rgb(27,91,7)"/><rect x="44.5" y="59.1" width="1.6" height="1.6" fill="rgb(18,30,2)"/><rect x="35.3" y="50.3" width="1.6" height="1.6" fill="rgb(31,63,5)"/><rect x="26.4" y="52.5" width="1.6" height="1.6" fill="rgb(17,119,9)"/><rect x="27.6" y="44.0" width="1.6" height="1.6" fill="rgb(8,110,8)"/><rect x="57.6" y="61.1" width="1.6" height="1.6" fill="rgb(4,105,8)"/><rect x="39.9" y="59.0" width="1.6" height="1.6" fill="rgb(1,159,12)"/><rect x="37.4" y="46.9" width="1.6" height="1.6" fill="rgb(20,199,15)"/><rect x="43.2" y="60.5" width="1.6" height="1.6" fill="rgb(15,133,10)"/><rect x="29.2" y="44.2" width="1.6" height="1.6" fill="rgb(14,129,10)"/><rect x="39.5" y="52.3" width="1.6" height="1.6" fill="rgb(20,132,10)"/><rect x="16.9" y="44.3" width="1.6" height="1.6" fill="rgb(0,146,11)"/><rect x="20.3" y="50.8" width="1.6" height="1.6" fill="rgb(8,146,11)"/><rect x="12.0" y="45.9" width="1.6" height="1.6" fill="rgb(9,164,13)"/><rect x="50.9" y="50.0" width="1.6" height="1.6" fill="rgb(1,133,10)"/><rect x="30.3" y="41.6" width="1.6" height="1.6" fill="rgb(13,128,10)"/><rect x="43.3" y="49.2" width="1.6" height="1.6" fill="rgb(31,89,7)"/><rect x="30.9" y="50.7" width="1.6" height="1.6" fill="rgb(18,132,10)"/><rect x="23.0" y="47.7" width="1.6" height="1.6" fill="rgb(6,105,8)"/><rect x="41.7" y="61.7" width="1.6" height="1.6" fill="rgb(21,87,6)"/><rect x="40.8" y="54.1" width="1.6" height="1.6" fill="rgb(14,86,6)"/><rect x="23.1" y="56.7" width="1.6" height="1.6" fill="rgb(9,175,14)"/><rect x="40.0" y="61.4" width="1.6" height="1.6" fill="rgb(4,198,15)"/><rect x="29.2" y="41.0" width="1.6" height="1.6" fill="rgb(10,154,12)"/><rect x="63.5" y="56.6" width="1.6" height="1.6" fill="rgb(8,113,9)"/><rect x="31.7" y="60.5" width="1.6" height="1.6" fill="rgb(7,99,7)"/><rect x="36.3" y="54.1" width="1.6" height="1.6" fill="rgb(15,74,5)"/><rect x="20.1" y="44.3" width="1.6" height="1.6" fill="rgb(3,131,10)"/><rect x="21.4" y="42.6" width="1.6" height="1.6" fill="rgb(19,118,9)"/><rect x="53.3" y="57.8" width="1.6" height="1.6" fill="rgb(4,105,8)"/><rect x="43.8" y="58.2" width="1.6" height="1.6" fill="rgb(7,177,14)"/><rect x="17.4" y="43.2" width="1.6" height="1.6" fill="rgb(10,102,8)"/><rect x="33.9" y="49.0" width="1.6" height="1.6" fill="rgb(11,122,9)"/><rect x="50.6" y="58.8" width="1.6" height="1.6" fill="rgb(12,156,12)"/><rect x="35.9" y="54.8" width="1.6" height="1.6" fill="rgb(15,72,5)"/><rect x="32.3" y="60.6" width="1.6" height="1.6" fill="rgb(15,191,15)"/><rect x="30.0" y="42.0" width="1.6" height="1.6" fill="rgb(25,93,7)"/><rect x="14.5" y="49.5" width="1.6" height="1.6" fill="rgb(17,148,11)"/><rect x="14.6" y="48.6" width="1.6" height="1.6" fill="rgb(18,100,8)"/><rect x="49.2" y="49.8" width="1.6" height="1.6" fill="rgb(6,126,10)"/><rect x="28.3" y="51.4" width="1.6" height="1.6" fill="rgb(7,96,7)"/><rect x="70.5" y="56.0" width="1.6" height="1.6" fill="rgb(24,79,6)"/><rect x="40.0" y="53.6" width="1.6" height="1.6" fill="rgb(17,86,6)"/><rect x="24.2" y="52.6" width="1.6" height="1.6" fill="rgb(16,180,14)"/><rect x="25.2" y="52.8" width="1.6" height="1.6" fill="rgb(12,92,7)"/><rect x="19.3" y="43.3" width="1.6" height="1.6" fill="rgb(39,90,7)"/><rect x="71.0" y="58.2" width="1.6" height="1.6" fill="rgb(22,78,6)"/><rect x="35.1" y="46.8" width="1.6" height="1.6" fill="rgb(11,163,13)"/><rect x="53.2" y="59.3" width="1.6" height="1.6" fill="rgb(15,143,11)"/><rect x="66.6" y="60.2" width="1.6" height="1.6" fill="rgb(18,156,12)"/><rect x="18.5" y="45.9" width="1.6" height="1.6" fill="rgb(16,161,12)"/><rect x="21.2" y="48.3" width="1.6" height="1.6" fill="rgb(15,110,8)"/><rect x="56.8" y="58.4" width="1.6" height="1.6" fill="rgb(12,123,9)"/><rect x="59.0" y="60.4" width="1.6" height="1.6" fill="rgb(19,123,9)"/><rect x="30.1" y="43.2" width="1.6" height="1.6" fill="rgb(0,157,12)"/><rect x="44.3" y="46.7" width="1.6" height="1.6" fill="rgb(14,118,9)"/><rect x="16.9" y="51.1" width="1.6" height="1.6" fill="rgb(32,90,7)"/><rect x="37.5" y="48.5" width="1.6" height="1.6" fill="rgb(28,84,6)"/><rect x="38.6" y="50.8" width="1.6" height="1.6" fill="rgb(50,73,5)"/><rect x="20.1" y="42.3" width="1.6" height="1.6" fill="rgb(11,99,7)"/><rect x="18.7" y="44.8" width="1.6" height="1.6" fill="rgb(19,184,14)"/><rect x="30.4" y="43.8" width="1.6" height="1.6" fill="rgb(16,192,15)"/><rect x="25.2" y="51.7" width="1.6" height="1.6" fill="rgb(8,164,13)"/><rect x="65.9" y="55.2" width="1.6" height="1.6" fill="rgb(16,132,10)"/><rect x="39.3" y="50.1" width="1.6" height="1.6" fill="rgb(33,48,3)"/><rect x="30.1" y="56.3" width="1.6" height="1.6" fill="rgb(12,167,13)"/><rect x="82.6" y="59.5" width="1.6" height="1.6" fill="rgb(41,35,2)"/><rect x="45.7" y="55.7" width="1.6" height="1.6" fill="rgb(17,83,6)"/><rect x="65.3" y="57.6" width="1.6" height="1.6" fill="rgb(30,75,6)"/><rect x="19.2" y="52.5" width="1.6" height="1.6" fill="rgb(20,115,9)"/><rect x="63.7" y="55.7" width="1.6" height="1.6" fill="rgb(10,108,8)"/><rect x="18.2" y="52.0" width="1.6" height="1.6" fill="rgb(1,185,14)"/><rect x="16.4" y="50.1" width="1.6" height="1.6" fill="rgb(1,192,15)"/><rect x="19.0" y="43.6" width="1.6" height="1.6" fill="rgb(47,86,6)"/><rect x="29.5" y="45.9" width="1.6" height="1.6" fill="rgb(5,126,10)"/><rect x="44.2" y="53.5" width="1.6" height="1.6" fill="rgb(26,36,2)"/><rect x="34.8" y="43.8" width="1.6" height="1.6" fill="rgb(15,181,14)"/><rect x="43.8" y="51.5" width="1.6" height="1.6" fill="rgb(27,34,2)"/><rect x="37.3" y="56.6" width="1.6" height="1.6" fill="rgb(50,48,3)"/><rect x="14.9" y="48.0" width="1.6" height="1.6" fill="rgb(12,81,6)"/><rect x="49.0" y="55.9" width="1.6" height="1.6" fill="rgb(33,90,7)"/><rect x="26.8" y="41.4" width="1.6" height="1.6" fill="rgb(45,88,7)"/><rect x="73.6" y="60.3" width="1.6" height="1.6" fill="rgb(3,113,9)"/><rect x="38.3" y="60.5" width="1.6" height="1.6" fill="rgb(10,181,14)"/><rect x="38.0" y="49.6" width="1.6" height="1.6" fill="rgb(19,41,3)"/><rect x="48.9" y="50.3" width="1.6" height="1.6" fill="rgb(9,165,13)"/><rect x="15.9" y="44.4" width="1.6" height="1.6" fill="rgb(36,88,7)"/><rect x="65.3" y="58.7" width="1.6" height="1.6" fill="rgb(4,149,11)"/><rect x="66.5" y="59.9" width="1.6" height="1.6" fill="rgb(12,141,11)"/><rect x="63.2" y="56.1" width="1.6" height="1.6" fill="rgb(8,151,12)"/><rect x="63.9" y="58.3" width="1.6" height="1.6" fill="rgb(16,147,11)"/><rect x="27.5" y="40.4" width="1.6" height="1.6" fill="rgb(9,108,8)"/><rect x="85.7" y="59.3" width="1.6" height="1.6" fill="rgb(11,44,3)"/><rect x="50.9" y="59.4" width="1.6" height="1.6" fill="rgb(44,85,6)"/><rect x="23.4" y="53.7" width="1.6" height="1.6" fill="rgb(10,123,9)"/><rect x="51.0" y="59.9" width="1.6" height="1.6" fill="rgb(18,116,9)"/><rect x="46.7" y="47.2" width="1.6" height="1.6" fill="rgb(50,88,7)"/><rect x="14.1" y="46.1" width="1.6" height="1.6" fill="rgb(13,155,12)"/><rect x="42.5" y="55.4" width="1.6" height="1.6" fill="rgb(31,42,3)"/><rect x="70.4" y="57.4" width="1.6" height="1.6" fill="rgb(8,134,10)"/><rect x="39.5" y="60.3" width="1.6" height="1.6" fill="rgb(20,162,12)"/><rect x="49.4" y="51.4" width="1.6" height="1.6" fill="rgb(5,160,12)"/><rect x="66.2" y="55.7" width="1.6" height="1.6" fill="rgb(0,116,9)"/><rect x="80.5" y="59.0" width="1.6" height="1.6" fill="rgb(18,65,5)"/><rect x="25.7" y="46.0" width="1.6" height="1.6" fill="rgb(8,125,10)"/><rect x="20.8" y="42.5" width="1.6" height="1.6" fill="rgb(16,184,14)"/><rect x="41.1" y="57.0" width="1.6" height="1.6" fill="rgb(37,87,6)"/><rect x="22.6" y="52.3" width="1.6" height="1.6" fill="rgb(0,128,10)"/><rect x="31.6" y="53.6" width="1.6" height="1.6" fill="rgb(14,193,15)"/><rect x="45.0" y="54.1" width="1.6" height="1.6" fill="rgb(32,43,3)"/><rect x="21.4" y="48.2" width="1.6" height="1.6" fill="rgb(20,154,12)"/><rect x="64.5" y="61.2" width="1.6" height="1.6" fill="rgb(35,93,7)"/><rect x="58.9" y="61.2" width="1.6" height="1.6" fill="rgb(20,110,8)"/><rect x="43.8" y="61.8" width="1.6" height="1.6" fill="rgb(4,157,12)"/><rect x="14.6" y="49.5" width="1.6" height="1.6" fill="rgb(2,128,10)"/><rect x="62.9" y="59.2" width="1.6" height="1.6" fill="rgb(7,187,14)"/><rect x="66.1" y="54.3" width="1.6" height="1.6" fill="rgb(3,97,7)"/><rect x="43.3" y="42.0" width="1.2" height="1.2" fill="rgb(0,55,0)"/><rect x="42.3" y="41.1" width="1.2" height="1.2" fill="rgb(0,102,0)"/><rect x="18.3" y="37.7" width="1.2" height="1.2" fill="rgb(0,52,0)"/><rect x="12.3" y="37.6" width="1.2" height="1.2" fill="rgb(0,117,0)"/><rect x="14.7" y="40.2" width="1.2" height="1.2" fill="rgb(0,63,0)"/><rect x="11.4" y="36.8" width="1.2" height="1.2" fill="rgb(0,60,0)"/><rect x="11.6" y="37.0" width="1.2" height="1.2" fill="rgb(0,119,0)"/><rect x="30.9" y="39.8" width="1.2" height="1.2" fill="rgb(0,50,0)"/><rect x="29.0" y="38.1" width="1.2" height="1.2" fill="rgb(0,73,0)"/><rect x="38.7" y="42.3" width="1.2" height="1.2" fill="rgb(0,108,0)"/><rect x="16.3" y="41.6" width="1.2" height="1.2" fill="rgb(0,76,0)"/><rect x="30.9" y="37.2" width="1.2" height="1.2" fill="rgb(0,116,0)"/><rect x="21.5" y="37.3" width="1.2" height="1.2" fill="rgb(0,80,0)"/><rect x="39.4" y="42.5" width="1.2" height="1.2" fill="rgb(0,62,0)"/><rect x="12.0" y="38.5" width="1.2" height="1.2" fill="rgb(0,89,0)"/><rect x="36.2" y="37.6" width="1.2" height="1.2" fill="rgb(0,92,0)"/><rect x="36.5" y="36.6" width="1.2" height="1.2" fill="rgb(0,59,0)"/><rect x="10.4" y="41.4" width="1.2" height="1.2" fill="rgb(0,77,0)"/><rect x="27.5" y="39.8" width="1.2" height="1.2" fill="rgb(0,102,0)"/><rect x="42.1" y="40.6" width="1.2" height="1.2" fill="rgb(0,76,0)"/><rect x="41.8" y="41.7" width="1.2" height="1.2" fill="rgb(0,60,0)"/><rect x="41.7" y="42.5" width="1.2" height="1.2" fill="rgb(0,53,0)"/><rect x="32.9" y="37.5" width="1.2" height="1.2" fill="rgb(0,105,0)"/><rect x="37.6" y="37.0" width="1.2" height="1.2" fill="rgb(0,87,0)"/><rect x="17.9" y="38.7" width="1.2" height="1.2" fill="rgb(0,94,0)"/><rect x="9.8" y="39.3" width="1.2" height="1.2" fill="rgb(0,70,0)"/><rect x="44.6" y="41.9" width="1.2" height="1.2" fill="rgb(0,85,0)"/><rect x="37.7" y="36.7" width="1.2" height="1.2" fill="rgb(0,118,0)"/></g><text x="14.5" y="75.8" font-family="Liberation Sans" font-size="7.5" fill="#e0e0e0" transform="translate(14.5 0) scale(0.92 1) translate(-14.5 0)">100 µm</text><rect x="8.5" y="77.8" width="34" height="1.1" fill="#c8c8c8"/></svg>
<svg style="position:absolute;left:290.2px;top:92.5px" width="3" height="4"><path d="M0 0 L2.8 2 L0 4Z" fill="#000"/></svg>
<svg style="position:absolute;left:290.2px;top:100px" width="3" height="4"><path d="M0 0 L2.8 2 L0 4Z" fill="#000"/></svg>
<svg style="position:absolute;left:290.2px;top:107.5px" width="3" height="4"><path d="M0 0 L2.8 2 L0 4Z" fill="#000"/></svg>
<svg style="position:absolute;left:290.2px;top:115px" width="3" height="4"><path d="M0 0 L2.8 2 L0 4Z" fill="#000"/></svg>
<svg style="position:absolute;left:290.2px;top:122.5px" width="3" height="4"><path d="M0 0 L2.8 2 L0 4Z" fill="#000"/></svg>
<svg style="position:absolute;left:290.2px;top:129.5px" width="3" height="4"><path d="M0 0 L2.8 2 L0 4Z" fill="#000"/></svg>
<svg style="position:absolute;left:290.2px;top:137px" width="3" height="4"><path d="M0 0 L2.8 2 L0 4Z" fill="#000"/></svg>
<svg style="position:absolute;left:290.2px;top:145px" width="3" height="4"><path d="M0 0 L2.8 2 L0 4Z" fill="#000"/></svg>
<svg style="position:absolute;left:290.2px;top:152.5px" width="3" height="4"><path d="M0 0 L2.8 2 L0 4Z" fill="#000"/></svg>
<svg style="position:absolute;left:290.2px;top:160px" width="3" height="4"><path d="M0 0 L2.8 2 L0 4Z" fill="#000"/></svg>
<svg style="position:absolute;left:290.2px;top:167.5px" width="3" height="4"><path d="M0 0 L2.8 2 L0 4Z" fill="#000"/></svg>
<div style="left:294px;top:26px;width:140px;height:46px;border:1px solid #c9cfc6;"></div>
<div style="left:294px;top:72px;width:140px;height:47px;border:1px solid #c9cfc6;"></div>
<div style="left:294px;top:119px;width:140px;height:16px;border-bottom:1px solid #c9cfc6;"></div>
<div style="left:294px;top:135px;width:140px;height:15.5px;border-bottom:1px solid #c9cfc6;"></div>
<div style="left:294px;top:40px;width:140px;height:1px;background:#c9cfc6;"></div>
<div style="left:294px;top:87px;width:140px;height:1px;background:#c9cfc6;"></div>
<div style="left:295.3px;top:27.5px;width:94px;height:11.5px;background:#fff;border:1px solid #a8aea6;"></div>
<div style="left:379.3px;top:28.5px;width:9px;height:9.5px;background:#e2e8e0;border:1px solid #c3c9c1;"></div>
<svg style="position:absolute;left:381.60px;top:31.95px" width="4.4" height="2.6"><path d="M0 0 L2.2 2.6 L4.4 0Z" fill="#000"/></svg>
<div class="t" style="left:297.80px;top:27.17px;width:400px;text-align:left;font-size:8.3px;font-weight:normal;color:#262630;transform:scaleX(0.77);transform-origin:0 0;">Events[Cnts]</div>
<div style="left:392px;top:29.7px;width:7.2px;height:7.2px;background:#22a13b;border:1px solid #555;box-sizing:border-box"><svg width="7.2" height="7.2" viewBox="0 0 7 7" style="position:absolute;left:-1px;top:-1px"><path d="M1.3 3.4 L2.9 5 L5.9 1.6" stroke="#000" stroke-width="1.4" fill="none"/></svg></div>
<div class="t" style="left:401.50px;top:27.47px;width:400px;text-align:left;font-size:8.3px;font-weight:normal;color:#262630;transform:scaleX(0.77);transform-origin:0 0;">Active</div>
<svg style="position:absolute;left:295px;top:42.5px" width="135" height="15" viewBox="0 0 135 15">
<defs><linearGradient id="gg" x1="0" x2="1"><stop offset="0" stop-color="#000"/><stop offset="1" stop-color="#f4f4f4"/></linearGradient></defs>
<rect x="0" y="0" width="135" height="15" fill="#fff"/>
<rect x="0.5" y="0.5" width="23" height="14" fill="#000"/>
<rect x="23" y="0.5" width="88" height="14" fill="url(#gg)"/>
<path d="M23 14.5 L23.2 1 L25 10.2 L30 10.6 L45 11 L60 11.3 L85 11.9 L100 12.6 L106 13.3 L110 14 L111 14.5 Z" fill="#fff"/><path d="M23.2 1 L25 10.2 L30 10.6 L45 11 L60 11.3 L85 11.9 L100 12.6 L106 13.3 L110 14" fill="none" stroke="#222" stroke-width="0.5"/>
<rect x="111" y="0.5" width="1" height="14" fill="#555"/>
<rect x="0.5" y="0.5" width="134" height="14" fill="none" stroke="#333" stroke-width="1"/>
</svg>
<div style="left:295.7px;top:60.4px;width:7px;height:7px;background:#fff;border:1px solid #9aa098;"></div>
<div class="t" style="left:304.00px;top:57.87px;width:400px;text-align:left;font-size:8.3px;font-weight:normal;color:#262630;transform:scaleX(0.77);transform-origin:0 0;">Min</div>
<div style="left:319px;top:58px;width:29.5px;height:12px;background:#fff;border:1px solid #a8aea6;border-right:1px solid #b8beb6;"></div>
<div class="t" style="left:-53.50px;top:58.07px;width:400px;text-align:right;font-size:8.3px;font-weight:normal;color:#262630;transform:scaleX(0.77);transform-origin:100% 0;">1</div>
<div style="left:348.5px;top:58px;width:10.3px;height:12px;background:#c9cfc7;border:1px solid #a8aea6;border-left:none;"></div>
<div style="left:349.1px;top:59px;width:8.700000000000001px;height:4.6px;background:#e9eee7;border:1px solid #c3c9c1;"></div>
<div style="left:349.1px;top:64.4px;width:8.700000000000001px;height:4.6px;background:#e9eee7;border:1px solid #c3c9c1;"></div>
<svg style="position:absolute;left:351.15px;top:60.00px" width="4.4" height="2.6"><path d="M0 2.6 L2.2 0 L4.4 2.6Z" fill="#000"/></svg>
<svg style="position:absolute;left:351.15px;top:65.60px" width="4.4" height="2.6"><path d="M0 0 L2.2 2.6 L4.4 0Z" fill="#000"/></svg>
<div style="left:363.6px;top:60.4px;width:7px;height:7px;background:#fff;border:1px solid #9aa098;"></div>
<div class="t" style="left:372.00px;top:57.87px;width:400px;text-align:left;font-size:8.3px;font-weight:normal;color:#262630;transform:scaleX(0.77);transform-origin:0 0;">Max</div>
<div style="left:391px;top:58px;width:29.2px;height:12px;background:#fff;border:1px solid #a8aea6;border-right:1px solid #b8beb6;"></div>
<div class="t" style="left:18.20px;top:58.07px;width:400px;text-align:right;font-size:8.3px;font-weight:normal;color:#262630;transform:scaleX(0.77);transform-origin:100% 0;">5966</div>
<div style="left:420.2px;top:58px;width:10.3px;height:12px;background:#c9cfc7;border:1px solid #a8aea6;border-left:none;"></div>
<div style="left:420.8px;top:59px;width:8.700000000000001px;height:4.6px;background:#e9eee7;border:1px solid #c3c9c1;"></div>
<div style="left:420.8px;top:64.4px;width:8.700000000000001px;height:4.6px;background:#e9eee7;border:1px solid #c3c9c1;"></div>
<svg style="position:absolute;left:422.85px;top:60.00px" width="4.4" height="2.6"><path d="M0 2.6 L2.2 0 L4.4 2.6Z" fill="#000"/></svg>
<svg style="position:absolute;left:422.85px;top:65.60px" width="4.4" height="2.6"><path d="M0 0 L2.2 2.6 L4.4 0Z" fill="#000"/></svg>
<div style="left:295.3px;top:73.5px;width:95px;height:11.7px;background:#fff;border:1px solid #a8aea6;"></div>
<div style="left:380.3px;top:74.5px;width:9px;height:9.7px;background:#e2e8e0;border:1px solid #c3c9c1;"></div>
<svg style="position:absolute;left:382.60px;top:78.05px" width="4.4" height="2.6"><path d="M0 0 L2.2 2.6 L4.4 0Z" fill="#000"/></svg>
<div class="t" style="left:297.80px;top:73.37px;width:400px;text-align:left;font-size:8.3px;font-weight:normal;color:#262630;transform:scaleX(0.77);transform-origin:0 0;">Efficiency[%]</div>
<div style="left:392.8px;top:76.4px;width:7px;height:7px;background:#22a13b;border:1px solid #555;box-sizing:border-box"><svg width="7" height="7" viewBox="0 0 7 7" style="position:absolute;left:-1px;top:-1px"><path d="M1.3 3.4 L2.9 5 L5.9 1.6" stroke="#000" stroke-width="1.4" fill="none"/></svg></div>
<div class="t" style="left:401.50px;top:73.87px;width:400px;text-align:left;font-size:8.3px;font-weight:normal;color:#262630;transform:scaleX(0.77);transform-origin:0 0;">Active</div>
<svg style="position:absolute;left:295px;top:89.5px" width="135" height="14" viewBox="0 0 135 14">
<defs><linearGradient id="rb" x1="0" x2="1">
<stop offset="0" stop-color="#3a86f0"/><stop offset="0.25" stop-color="#22e6f6"/><stop offset="0.5" stop-color="#22cc10"/><stop offset="0.62" stop-color="#a8e010"/><stop offset="0.78" stop-color="#f8e010"/><stop offset="0.9" stop-color="#f87010"/><stop offset="1" stop-color="#f01010"/></linearGradient></defs>
<rect x="0.5" y="0.5" width="23" height="13" fill="#3b8ff0"/>
<rect x="23" y="0.5" width="88" height="13" fill="url(#rb)"/>
<rect x="111" y="0.5" width="23.5" height="13" fill="#ff1010"/>
<path d="M23 13.5 L23.3 9 L25 12 L35 11.9 L45 11.6 L55 10.8 L62 9.6 L67 7.5 L70.5 4 L73.5 1.3 L76.5 4 L80 7.5 L85 9.3 L92 10.3 L100 11.1 L111 11.8 L111 13.5Z" fill="#fff"/>
<path d="M23.3 9 L25 12 L35 11.9 L45 11.6 L55 10.8 L62 9.6 L67 7.5 L70.5 4 L73.5 1.3 L76.5 4 L80 7.5 L85 9.3 L92 10.3 L100 11.1 L111 11.8" stroke="#444" stroke-width="0.4" fill="none"/>
<rect x="22.6" y="0.5" width="0.8" height="13" fill="#555"/><rect x="110.8" y="0.5" width="0.8" height="13" fill="#555"/>
<rect x="0.5" y="0.5" width="134" height="13" fill="none" stroke="#3a3a3a" stroke-width="0.9"/>
</svg>
<div style="left:295.6px;top:107.3px;width:6.9px;height:6.9px;background:#22a13b;border:1px solid #555;box-sizing:border-box"><svg width="6.9" height="6.9" viewBox="0 0 7 7" style="position:absolute;left:-1px;top:-1px"><path d="M1.3 3.4 L2.9 5 L5.9 1.6" stroke="#000" stroke-width="1.4" fill="none"/></svg></div>
<div class="t" style="left:304.00px;top:105.07px;width:400px;text-align:left;font-size:8.3px;font-weight:normal;color:#262630;transform:scaleX(0.77);transform-origin:0 0;">Min</div>
<div style="left:319px;top:104.7px;width:29.4px;height:12px;background:#fff;border:1px solid #a8aea6;border-right:1px solid #b8beb6;"></div>
<div class="t" style="left:-53.60px;top:104.77px;width:400px;text-align:right;font-size:8.3px;font-weight:normal;color:#262630;transform:scaleX(0.77);transform-origin:100% 0;">0,0</div>
<div style="left:348.4px;top:104.7px;width:10.3px;height:12px;background:#c9cfc7;border:1px solid #a8aea6;border-left:none;"></div>
<div style="left:349.0px;top:105.7px;width:8.700000000000001px;height:4.6px;background:#e9eee7;border:1px solid #c3c9c1;"></div>
<div style="left:349.0px;top:111.10000000000001px;width:8.700000000000001px;height:4.6px;background:#e9eee7;border:1px solid #c3c9c1;"></div>
<svg style="position:absolute;left:351.05px;top:106.70px" width="4.4" height="2.6"><path d="M0 2.6 L2.2 0 L4.4 2.6Z" fill="#000"/></svg>
<svg style="position:absolute;left:351.05px;top:112.30px" width="4.4" height="2.6"><path d="M0 0 L2.2 2.6 L4.4 0Z" fill="#000"/></svg>
<div style="left:363.5px;top:107.3px;width:6.9px;height:6.9px;background:#22a13b;border:1px solid #555;box-sizing:border-box"><svg width="6.9" height="6.9" viewBox="0 0 7 7" style="position:absolute;left:-1px;top:-1px"><path d="M1.3 3.4 L2.9 5 L5.9 1.6" stroke="#000" stroke-width="1.4" fill="none"/></svg></div>
<div class="t" style="left:372.00px;top:105.07px;width:400px;text-align:left;font-size:8.3px;font-weight:normal;color:#262630;transform:scaleX(0.77);transform-origin:0 0;">Max</div>
<div style="left:390.8px;top:104.7px;width:29.7px;height:12px;background:#fff;border:1px solid #a8aea6;border-right:1px solid #b8beb6;"></div>
<div class="t" style="left:18.50px;top:104.77px;width:400px;text-align:right;font-size:8.3px;font-weight:normal;color:#262630;transform:scaleX(0.77);transform-origin:100% 0;">100,0</div>
<div style="left:420.5px;top:104.7px;width:10.3px;height:12px;background:#c9cfc7;border:1px solid #a8aea6;border-left:none;"></div>
<div style="left:421.1px;top:105.7px;width:8.700000000000001px;height:4.6px;background:#e9eee7;border:1px solid #c3c9c1;"></div>
<div style="left:421.1px;top:111.10000000000001px;width:8.700000000000001px;height:4.6px;background:#e9eee7;border:1px solid #c3c9c1;"></div>
<svg style="position:absolute;left:423.15px;top:106.70px" width="4.4" height="2.6"><path d="M0 2.6 L2.2 0 L4.4 2.6Z" fill="#000"/></svg>
<svg style="position:absolute;left:423.15px;top:112.30px" width="4.4" height="2.6"><path d="M0 0 L2.2 2.6 L4.4 0Z" fill="#000"/></svg>
<div style="left:295.6px;top:123.5px;width:7.5px;height:7.5px;background:#fff;border:1px solid #9aa098;"></div>
<div class="t" style="left:305.00px;top:121.67px;width:400px;text-align:left;font-size:8.3px;font-weight:normal;color:#262630;transform:scaleX(0.77);transform-origin:0 0;">Optimized Rainbow</div>
<div style="left:296px;top:138.2px;width:7.5px;height:7.5px;background:#fff;border:1px solid #9aa098;"></div>
<div class="t" style="left:308.00px;top:136.07px;width:400px;text-align:left;font-size:8.3px;font-weight:normal;color:#262630;transform:scaleX(0.77);transform-origin:0 0;">Smoothing</div>
<div style="left:433px;top:26px;width:1px;height:212px;background:#9aa097;"></div>
<div style="left:294px;top:26px;width:1px;height:212px;background:#c2c8bf;"></div>
<div style="left:199px;top:237.3px;width:235px;height:1px;background:#aab0a7;"></div>
<div style="left:203px;top:243.2px;width:6.6px;height:6.6px;background:#22a13b;border:1px solid #555;box-sizing:border-box"><svg width="6.6" height="6.6" viewBox="0 0 7 7" style="position:absolute;left:-1px;top:-1px"><path d="M1.3 3.4 L2.9 5 L5.9 1.6" stroke="#000" stroke-width="1.4" fill="none"/></svg></div>
<div class="t" style="left:211.50px;top:240.67px;width:400px;text-align:left;font-size:8.3px;font-weight:normal;color:#262630;transform:scaleX(0.77);transform-origin:0 0;">Apply Limits to All Curves</div>
<div class="t" style="left:361.50px;top:240.67px;width:400px;text-align:left;font-size:8.3px;font-weight:normal;color:#262630;transform:scaleX(0.77);transform-origin:0 0;">Number of Photons: 2233</div>
<div class="t" style="left:202.00px;top:255.87px;width:400px;text-align:left;font-size:8.3px;font-weight:normal;color:#262630;transform:scaleX(0.77);transform-origin:0 0;">Lower Boundary:</div>
<div style="left:261.8px;top:256.5px;width:69.7px;height:12px;background:#fff;border:1px solid #a8aea6;border-right:1px solid #b8beb6;"></div>
<div class="t" style="left:-73.00px;top:256.37px;width:400px;text-align:right;font-size:8.3px;font-weight:normal;color:#262630;transform:scaleX(0.77);transform-origin:100% 0;">0,08 ns</div>
<div style="left:331.5px;top:256.5px;width:10.5px;height:12px;background:#c9cfc7;border:1px solid #a8aea6;border-left:none;"></div>
<div style="left:332.1px;top:257.5px;width:8.9px;height:4.6px;background:#e9eee7;border:1px solid #c3c9c1;"></div>
<div style="left:332.1px;top:262.9px;width:8.9px;height:4.6px;background:#e9eee7;border:1px solid #c3c9c1;"></div>
<svg style="position:absolute;left:334.25px;top:258.50px" width="4.4" height="2.6"><path d="M0 2.6 L2.2 0 L4.4 2.6Z" fill="#000"/></svg>
<svg style="position:absolute;left:334.25px;top:264.10px" width="4.4" height="2.6"><path d="M0 0 L2.2 2.6 L4.4 0Z" fill="#000"/></svg>
<div class="t" style="left:350.00px;top:255.87px;width:400px;text-align:left;font-size:8.3px;font-weight:normal;color:#262630;transform:scaleX(0.77);transform-origin:0 0;">Upper Boundary:</div>
<div style="left:409.8px;top:256.7px;width:30px;height:11px;background:#fff;border:1px solid #a4aaa2;"></div>
<div style="left:436px;top:4px;width:261px;height:470px;background:#fff;"></div>
<div style="left:436px;top:472.3px;width:360px;height:1.7px;background:#dfe6dc;"></div>
<div style="left:197.5px;top:271.5px;width:131.5px;height:196px;background:#fff;border-left:1px solid #a4aaa2;"></div>
<div style="left:329px;top:271.5px;width:11px;height:195.5px;background:#dfe6dc;border-left:1px solid #aab0a8;border-right:1px solid #aab0a8;"></div>
<div style="left:329px;top:271.5px;width:11px;height:9px;background:linear-gradient(#f2f5f0,#dfe5dc);border:1px solid #9ea59b;"></div>
<svg style="position:absolute;left:332.30px;top:274.70px" width="4.4" height="2.6"><path d="M0 2.6 L2.2 0 L4.4 2.6Z" fill="#000"/></svg>
<div style="left:329.5px;top:440.5px;width:10px;height:16px;background:#ccd3c9;"></div>
<div style="left:329px;top:457.5px;width:11px;height:9px;background:linear-gradient(#f2f5f0,#dfe5dc);border:1px solid #9ea59b;"></div>
<svg style="position:absolute;left:332.30px;top:460.70px" width="4.4" height="2.6"><path d="M0 0 L2.2 2.6 L4.4 0Z" fill="#000"/></svg>
<div style="left:197.5px;top:467px;width:142.5px;height:7px;background:#dfe6dc;border-top:1px solid #bfc5bc;"></div>
<svg style="position:absolute;left:200px;top:469px" width="4" height="6"><path d="M3.5 0 L0.5 3 L3.5 6Z" fill="#000"/></svg>
<svg style="position:absolute;left:322.5px;top:469px" width="4" height="6"><path d="M0.5 0 L3.5 3 L0.5 6Z" fill="#000"/></svg>
<div style="left:203px;top:467.5px;width:8px;height:7px;background:#e9eee7;border:1px solid #b4bab1;"></div>
<div style="left:309px;top:467.5px;width:11px;height:7px;background:#ccd3c9;"></div>
<div style="left:344.3px;top:275.4px;width:7px;height:7px;border-radius:50%;background:#fff;border:1px solid #9aa098;"></div>
<div class="t" style="left:353.00px;top:272.87px;width:400px;text-align:left;font-size:8.3px;font-weight:normal;color:#262630;transform:scaleX(0.77);transform-origin:0 0;">Lin. Intens. Axis</div>
<div style="left:344.1px;top:290.8px;width:7.4px;height:7.4px;border-radius:50%;background:#1f9a35;border:1px solid #6a8a6a;"></div>
<div style="left:346.3px;top:293px;width:3px;height:3px;border-radius:50%;background:#000;"></div>
<div class="t" style="left:353.00px;top:288.37px;width:400px;text-align:left;font-size:8.3px;font-weight:normal;color:#262630;transform:scaleX(0.77);transform-origin:0 0;">Log. Intens. Axis</div>
<div style="left:344.3px;top:321px;width:7px;height:7px;background:#fff;border:1px solid #9aa098;"></div>
<div class="t" style="left:353.00px;top:318.37px;width:400px;text-align:left;font-size:8.3px;font-weight:normal;color:#262630;transform:scaleX(0.77);transform-origin:0 0;">Normalize Decays</div>
<div style="left:344.1px;top:337.0px;width:7.4px;height:7.4px;border-radius:50%;background:#1f9a35;border:1px solid #6a8a6a;"></div>
<div style="left:346.3px;top:339.2px;width:3px;height:3px;border-radius:50%;background:#000;"></div>
<div class="t" style="left:353.00px;top:334.67px;width:400px;text-align:left;font-size:8.3px;font-weight:normal;color:#262630;transform:scaleX(0.77);transform-origin:0 0;">Show all Datasets</div>
<div style="left:344.3px;top:352.6px;width:7px;height:7px;border-radius:50%;background:#fff;border:1px solid #9aa098;"></div>
<div class="t" style="left:353.00px;top:350.07px;width:400px;text-align:left;font-size:8.3px;font-weight:normal;color:#262630;transform:scaleX(0.77);transform-origin:0 0;">Show Active Dataset</div>
<div style="left:344.3px;top:368.5px;width:7px;height:7px;border-radius:50%;background:#fff;border:1px solid #9aa098;"></div>
<div class="t" style="left:353.00px;top:365.87px;width:400px;text-align:left;font-size:8.3px;font-weight:normal;color:#262630;transform:scaleX(0.77);transform-origin:0 0;">TCSPC Curves Only</div>
<div style="left:344.3px;top:383.6px;width:7px;height:7px;border-radius:50%;background:#fff;border:1px solid #9aa098;"></div>
<div class="t" style="left:353.00px;top:381.07px;width:400px;text-align:left;font-size:8.3px;font-weight:normal;color:#262630;transform:scaleX(0.77);transform-origin:0 0;">Parameter Plot</div>
<div style="left:344.3px;top:398.9px;width:7px;height:7px;border-radius:50%;background:#fff;border:1px solid #9aa098;"></div>
<div class="t" style="left:353.00px;top:396.37px;width:400px;text-align:left;font-size:8.3px;font-weight:normal;color:#262630;transform:scaleX(0.77);transform-origin:0 0;">Error Correlation Plot</div>
<svg style="position:absolute;left:0;top:0" width="795" height="474" viewBox="0 0 795 474"><defs><clipPath id="fc"><rect x="198" y="272" width="131" height="195"/></clipPath><clipPath id="pc"><rect x="228" y="286.7" width="101" height="122.3"/></clipPath><clipPath id="rc"><rect x="228" y="409" width="101" height="49"/></clipPath></defs><g clip-path="url(#fc)"><rect x="228" y="286.7" width="101" height="171.3" fill="#fff"/><line x1="228" x2="329" y1="407.74" y2="407.74" stroke="#ececec" stroke-width="0.8"/><line x1="228" x2="329" y1="406.22" y2="406.22" stroke="#ececec" stroke-width="0.8"/><line x1="228" x2="329" y1="404.90" y2="404.90" stroke="#ececec" stroke-width="0.8"/><line x1="228" x2="329" y1="403.74" y2="403.74" stroke="#ececec" stroke-width="0.8"/><line x1="228" x2="329" y1="395.87" y2="395.87" stroke="#ececec" stroke-width="0.8"/><line x1="228" x2="329" y1="391.87" y2="391.87" stroke="#ececec" stroke-width="0.8"/><line x1="228" x2="329" y1="389.03" y2="389.03" stroke="#ececec" stroke-width="0.8"/><line x1="228" x2="329" y1="386.83" y2="386.83" stroke="#ececec" stroke-width="0.8"/><line x1="228" x2="329" y1="385.04" y2="385.04" stroke="#ececec" stroke-width="0.8"/><line x1="228" x2="329" y1="383.52" y2="383.52" stroke="#ececec" stroke-width="0.8"/><line x1="228" x2="329" y1="382.20" y2="382.20" stroke="#ececec" stroke-width="0.8"/><line x1="228" x2="329" y1="381.04" y2="381.04" stroke="#ececec" stroke-width="0.8"/><line x1="228" x2="329" y1="373.17" y2="373.17" stroke="#ececec" stroke-width="0.8"/><line x1="228" x2="329" y1="369.17" y2="369.17" stroke="#ececec" stroke-width="0.8"/><line x1="228" x2="329" y1="366.33" y2="366.33" stroke="#ececec" stroke-width="0.8"/><line x1="228" x2="329" y1="364.13" y2="364.13" stroke="#ececec" stroke-width="0.8"/><line x1="228" x2="329" y1="362.34" y2="362.34" stroke="#ececec" stroke-width="0.8"/><line x1="228" x2="329" y1="360.82" y2="360.82" stroke="#ececec" stroke-width="0.8"/><line x1="228" x2="329" y1="359.50" y2="359.50" stroke="#ececec" stroke-width="0.8"/><line x1="228" x2="329" y1="358.34" y2="358.34" stroke="#ececec" stroke-width="0.8"/><line x1="228" x2="329" y1="350.47" y2="350.47" stroke="#ececec" stroke-width="0.8"/><line x1="228" x2="329" y1="346.47" y2="346.47" stroke="#ececec" stroke-width="0.8"/><line x1="228" x2="329" y1="343.63" y2="343.63" stroke="#ececec" stroke-width="0.8"/><line x1="228" x2="329" y1="341.43" y2="341.43" stroke="#ececec" stroke-width="0.8"/><line x1="228" x2="329" y1="339.64" y2="339.64" stroke="#ececec" stroke-width="0.8"/><line x1="228" x2="329" y1="338.12" y2="338.12" stroke="#ececec" stroke-width="0.8"/><line x1="228" x2="329" y1="336.80" y2="336.80" stroke="#ececec" stroke-width="0.8"/><line x1="228" x2="329" y1="335.64" y2="335.64" stroke="#ececec" stroke-width="0.8"/><line x1="228" x2="329" y1="327.77" y2="327.77" stroke="#ececec" stroke-width="0.8"/><line x1="228" x2="329" y1="323.77" y2="323.77" stroke="#ececec" stroke-width="0.8"/><line x1="228" x2="329" y1="320.93" y2="320.93" stroke="#ececec" stroke-width="0.8"/><line x1="228" x2="329" y1="318.73" y2="318.73" stroke="#ececec" stroke-width="0.8"/><line x1="228" x2="329" y1="316.94" y2="316.94" stroke="#ececec" stroke-width="0.8"/><line x1="228" x2="329" y1="315.42" y2="315.42" stroke="#ececec" stroke-width="0.8"/><line x1="228" x2="329" y1="314.10" y2="314.10" stroke="#ececec" stroke-width="0.8"/><line x1="228" x2="329" y1="312.94" y2="312.94" stroke="#ececec" stroke-width="0.8"/><line x1="228" x2="329" y1="305.07" y2="305.07" stroke="#ececec" stroke-width="0.8"/><line x1="228" x2="329" y1="301.07" y2="301.07" stroke="#ececec" stroke-width="0.8"/><line x1="228" x2="329" y1="298.23" y2="298.23" stroke="#ececec" stroke-width="0.8"/><line x1="228" x2="329" y1="296.03" y2="296.03" stroke="#ececec" stroke-width="0.8"/><line x1="228" x2="329" y1="294.24" y2="294.24" stroke="#ececec" stroke-width="0.8"/><line x1="228" x2="329" y1="292.72" y2="292.72" stroke="#ececec" stroke-width="0.8"/><line x1="228" x2="329" y1="291.40" y2="291.40" stroke="#ececec" stroke-width="0.8"/><line x1="228" x2="329" y1="290.24" y2="290.24" stroke="#ececec" stroke-width="0.8"/><line x1="232.60" x2="232.60" y1="286.7" y2="458" stroke="#e2e2e2" stroke-width="0.8"/><line x1="240.36" x2="240.36" y1="286.7" y2="458" stroke="#e2e2e2" stroke-width="0.8"/><line x1="248.12" x2="248.12" y1="286.7" y2="458" stroke="#e2e2e2" stroke-width="0.8"/><line x1="255.88" x2="255.88" y1="286.7" y2="458" stroke="#e2e2e2" stroke-width="0.8"/><line x1="263.64" x2="263.64" y1="286.7" y2="458" stroke="#e2e2e2" stroke-width="0.8"/><line x1="271.40" x2="271.40" y1="286.7" y2="458" stroke="#e2e2e2" stroke-width="0.8"/><line x1="279.16" x2="279.16" y1="286.7" y2="458" stroke="#e2e2e2" stroke-width="0.8"/><line x1="286.92" x2="286.92" y1="286.7" y2="458" stroke="#e2e2e2" stroke-width="0.8"/><line x1="294.68" x2="294.68" y1="286.7" y2="458" stroke="#e2e2e2" stroke-width="0.8"/><line x1="302.44" x2="302.44" y1="286.7" y2="458" stroke="#e2e2e2" stroke-width="0.8"/><line x1="310.20" x2="310.20" y1="286.7" y2="458" stroke="#e2e2e2" stroke-width="0.8"/><line x1="317.96" x2="317.96" y1="286.7" y2="458" stroke="#e2e2e2" stroke-width="0.8"/><line x1="325.72" x2="325.72" y1="286.7" y2="458" stroke="#e2e2e2" stroke-width="0.8"/><line x1="228" x2="329" y1="402.70" y2="402.70" stroke="#c8c8c8" stroke-width="1"/><rect x="228" y="403.20" width="101" height="2.2" fill="#f0f0f0"/><line x1="228" x2="329" y1="380.00" y2="380.00" stroke="#c8c8c8" stroke-width="1"/><rect x="228" y="380.50" width="101" height="2.2" fill="#f0f0f0"/><line x1="228" x2="329" y1="357.30" y2="357.30" stroke="#c8c8c8" stroke-width="1"/><rect x="228" y="357.80" width="101" height="2.2" fill="#f0f0f0"/><line x1="228" x2="329" y1="334.60" y2="334.60" stroke="#c8c8c8" stroke-width="1"/><rect x="228" y="335.10" width="101" height="2.2" fill="#f0f0f0"/><line x1="228" x2="329" y1="311.90" y2="311.90" stroke="#c8c8c8" stroke-width="1"/><rect x="228" y="312.40" width="101" height="2.2" fill="#f0f0f0"/><line x1="228" x2="329" y1="289.20" y2="289.20" stroke="#c8c8c8" stroke-width="1"/><rect x="228" y="289.70" width="101" height="2.2" fill="#f0f0f0"/><line x1="271.40" x2="271.40" y1="286.7" y2="458" stroke="#bdbdbd" stroke-width="1"/><line x1="310.20" x2="310.20" y1="286.7" y2="458" stroke="#bdbdbd" stroke-width="1"/><line x1="228" x2="329" y1="452.34" y2="452.34" stroke="#e4e4e4" stroke-width="0.8"/><line x1="228" x2="329" y1="442.22" y2="442.22" stroke="#e4e4e4" stroke-width="0.8"/><line x1="228" x2="329" y1="421.98" y2="421.98" stroke="#e4e4e4" stroke-width="0.8"/><line x1="228" x2="329" y1="411.86" y2="411.86" stroke="#e4e4e4" stroke-width="0.8"/><rect x="228" y="286.7" width="101" height="171.3" fill="none" stroke="#555" stroke-width="0.8"/><line x1="228" x2="229.8" y1="407.74" y2="407.74" stroke="#555" stroke-width="0.6"/><line x1="228" x2="229.8" y1="406.22" y2="406.22" stroke="#555" stroke-width="0.6"/><line x1="228" x2="229.8" y1="404.90" y2="404.90" stroke="#555" stroke-width="0.6"/><line x1="228" x2="229.8" y1="403.74" y2="403.74" stroke="#555" stroke-width="0.6"/><line x1="228" x2="231" y1="402.70" y2="402.70" stroke="#555" stroke-width="0.6"/><line x1="228" x2="229.8" y1="395.87" y2="395.87" stroke="#555" stroke-width="0.6"/><line x1="228" x2="229.8" y1="391.87" y2="391.87" stroke="#555" stroke-width="0.6"/><line x1="228" x2="229.8" y1="389.03" y2="389.03" stroke="#555" stroke-width="0.6"/><line x1="228" x2="229.8" y1="386.83" y2="386.83" stroke="#555" stroke-width="0.6"/><line x1="228" x2="229.8" y1="385.04" y2="385.04" stroke="#555" stroke-width="0.6"/><line x1="228" x2="229.8" y1="383.52" y2="383.52" stroke="#555" stroke-width="0.6"/><line x1="228" x2="229.8" y1="382.20" y2="382.20" stroke="#555" stroke-width="0.6"/><line x1="228" x2="229.8" y1="381.04" y2="381.04" stroke="#555" stroke-width="0.6"/><line x1="228" x2="231" y1="380.00" y2="380.00" stroke="#555" stroke-width="0.6"/><line x1="228" x2="229.8" y1="373.17" y2="373.17" stroke="#555" stroke-width="0.6"/><line x1="228" x2="229.8" y1="369.17" y2="369.17" stroke="#555" stroke-width="0.6"/><line x1="228" x2="229.8" y1="366.33" y2="366.33" stroke="#555" stroke-width="0.6"/><line x1="228" x2="229.8" y1="364.13" y2="364.13" stroke="#555" stroke-width="0.6"/><line x1="228" x2="229.8" y1="362.34" y2="362.34" stroke="#555" stroke-width="0.6"/><line x1="228" x2="229.8" y1="360.82" y2="360.82" stroke="#555" stroke-width="0.6"/><line x1="228" x2="229.8" y1="359.50" y2="359.50" stroke="#555" stroke-width="0.6"/><line x1="228" x2="229.8" y1="358.34" y2="358.34" stroke="#555" stroke-width="0.6"/><line x1="228" x2="231" y1="357.30" y2="357.30" stroke="#555" stroke-width="0.6"/><line x1="228" x2="229.8" y1="350.47" y2="350.47" stroke="#555" stroke-width="0.6"/><line x1="228" x2="229.8" y1="346.47" y2="346.47" stroke="#555" stroke-width="0.6"/><line x1="228" x2="229.8" y1="343.63" y2="343.63" stroke="#555" stroke-width="0.6"/><line x1="228" x2="229.8" y1="341.43" y2="341.43" stroke="#555" stroke-width="0.6"/><line x1="228" x2="229.8" y1="339.64" y2="339.64" stroke="#555" stroke-width="0.6"/><line x1="228" x2="229.8" y1="338.12" y2="338.12" stroke="#555" stroke-width="0.6"/><line x1="228" x2="229.8" y1="336.80" y2="336.80" stroke="#555" stroke-width="0.6"/><line x1="228" x2="229.8" y1="335.64" y2="335.64" stroke="#555" stroke-width="0.6"/><line x1="228" x2="231" y1="334.60" y2="334.60" stroke="#555" stroke-width="0.6"/><line x1="228" x2="229.8" y1="327.77" y2="327.77" stroke="#555" stroke-width="0.6"/><line x1="228" x2="229.8" y1="323.77" y2="323.77" stroke="#555" stroke-width="0.6"/><line x1="228" x2="229.8" y1="320.93" y2="320.93" stroke="#555" stroke-width="0.6"/><line x1="228" x2="229.8" y1="318.73" y2="318.73" stroke="#555" stroke-width="0.6"/><line x1="228" x2="229.8" y1="316.94" y2="316.94" stroke="#555" stroke-width="0.6"/><line x1="228" x2="229.8" y1="315.42" y2="315.42" stroke="#555" stroke-width="0.6"/><line x1="228" x2="229.8" y1="314.10" y2="314.10" stroke="#555" stroke-width="0.6"/><line x1="228" x2="229.8" y1="312.94" y2="312.94" stroke="#555" stroke-width="0.6"/><line x1="228" x2="231" y1="311.90" y2="311.90" stroke="#555" stroke-width="0.6"/><line x1="228" x2="229.8" y1="305.07" y2="305.07" stroke="#555" stroke-width="0.6"/><line x1="228" x2="229.8" y1="301.07" y2="301.07" stroke="#555" stroke-width="0.6"/><line x1="228" x2="229.8" y1="298.23" y2="298.23" stroke="#555" stroke-width="0.6"/><line x1="228" x2="229.8" y1="296.03" y2="296.03" stroke="#555" stroke-width="0.6"/><line x1="228" x2="229.8" y1="294.24" y2="294.24" stroke="#555" stroke-width="0.6"/><line x1="228" x2="229.8" y1="292.72" y2="292.72" stroke="#555" stroke-width="0.6"/><line x1="228" x2="229.8" y1="291.40" y2="291.40" stroke="#555" stroke-width="0.6"/><line x1="228" x2="229.8" y1="290.24" y2="290.24" stroke="#555" stroke-width="0.6"/><line x1="228" x2="231" y1="289.20" y2="289.20" stroke="#555" stroke-width="0.6"/><line x1="228" x2="231" y1="452.34" y2="452.34" stroke="#555" stroke-width="0.6"/><line x1="228" x2="229.8" y1="447.28" y2="447.28" stroke="#555" stroke-width="0.6"/><line x1="228" x2="231" y1="442.22" y2="442.22" stroke="#555" stroke-width="0.6"/><line x1="228" x2="229.8" y1="437.16" y2="437.16" stroke="#555" stroke-width="0.6"/><line x1="228" x2="231" y1="432.10" y2="432.10" stroke="#555" stroke-width="0.6"/><line x1="228" x2="229.8" y1="427.04" y2="427.04" stroke="#555" stroke-width="0.6"/><line x1="228" x2="231" y1="421.98" y2="421.98" stroke="#555" stroke-width="0.6"/><line x1="228" x2="229.8" y1="416.92" y2="416.92" stroke="#555" stroke-width="0.6"/><line x1="228" x2="231" y1="411.86" y2="411.86" stroke="#555" stroke-width="0.6"/><line x1="232.60" x2="232.60" y1="458" y2="455" stroke="#555" stroke-width="0.6"/><line x1="240.36" x2="240.36" y1="458" y2="456" stroke="#555" stroke-width="0.6"/><line x1="248.12" x2="248.12" y1="458" y2="456" stroke="#555" stroke-width="0.6"/><line x1="255.88" x2="255.88" y1="458" y2="456" stroke="#555" stroke-width="0.6"/><line x1="263.64" x2="263.64" y1="458" y2="456" stroke="#555" stroke-width="0.6"/><line x1="271.40" x2="271.40" y1="458" y2="455" stroke="#555" stroke-width="0.6"/><line x1="279.16" x2="279.16" y1="458" y2="456" stroke="#555" stroke-width="0.6"/><line x1="286.92" x2="286.92" y1="458" y2="456" stroke="#555" stroke-width="0.6"/><line x1="294.68" x2="294.68" y1="458" y2="456" stroke="#555" stroke-width="0.6"/><line x1="302.44" x2="302.44" y1="458" y2="456" stroke="#555" stroke-width="0.6"/><line x1="310.20" x2="310.20" y1="458" y2="455" stroke="#555" stroke-width="0.6"/><line x1="317.96" x2="317.96" y1="458" y2="456" stroke="#555" stroke-width="0.6"/><line x1="325.72" x2="325.72" y1="458" y2="456" stroke="#555" stroke-width="0.6"/><line x1="232.60" x2="232.60" y1="286.7" y2="289" stroke="#777" stroke-width="0.6"/><line x1="240.36" x2="240.36" y1="286.7" y2="289" stroke="#777" stroke-width="0.6"/><line x1="248.12" x2="248.12" y1="286.7" y2="289" stroke="#777" stroke-width="0.6"/><line x1="255.88" x2="255.88" y1="286.7" y2="289" stroke="#777" stroke-width="0.6"/><line x1="263.64" x2="263.64" y1="286.7" y2="289" stroke="#777" stroke-width="0.6"/><line x1="271.40" x2="271.40" y1="286.7" y2="289" stroke="#777" stroke-width="0.6"/><line x1="279.16" x2="279.16" y1="286.7" y2="289" stroke="#777" stroke-width="0.6"/><line x1="286.92" x2="286.92" y1="286.7" y2="289" stroke="#777" stroke-width="0.6"/><line x1="294.68" x2="294.68" y1="286.7" y2="289" stroke="#777" stroke-width="0.6"/><line x1="302.44" x2="302.44" y1="286.7" y2="289" stroke="#777" stroke-width="0.6"/><line x1="310.20" x2="310.20" y1="286.7" y2="289" stroke="#777" stroke-width="0.6"/><line x1="317.96" x2="317.96" y1="286.7" y2="289" stroke="#777" stroke-width="0.6"/><line x1="325.72" x2="325.72" y1="286.7" y2="289" stroke="#777" stroke-width="0.6"/><g clip-path="url(#pc)"><polygon points="228.5,352.7 229.2,353.8 229.9,353.1 230.6,353.6 231.3,353.7 232.0,352.8 232.7,353.1 233.4,353.1 234.1,353.9 234.8,353.3 235.5,353.3 236.2,353.2 236.9,353.5 237.6,352.8 238.3,353.0 239.0,352.7 239.7,353.6 240.4,352.9 241.1,332.3 241.8,311.6 242.5,296.4 243.2,289.9 243.9,290.9 244.6,292.6 245.3,293.0 246.0,293.8 246.7,294.3 247.4,294.8 248.1,296.0 248.8,296.6 249.5,298.4 250.2,298.4 250.9,299.1 251.6,300.1 252.3,301.4 253.0,302.3 253.7,303.4 254.4,304.1 255.1,304.9 255.8,305.8 256.5,306.4 257.2,306.5 257.9,308.4 258.6,308.9 259.3,309.8 260.0,310.0 260.7,311.8 261.4,312.3 262.1,312.6 262.8,313.2 263.5,314.1 264.2,315.3 264.9,315.8 265.6,316.8 266.3,318.0 267.0,318.5 267.7,319.4 268.4,320.8 269.1,321.0 269.8,322.1 270.5,323.3 271.2,324.4 271.9,325.1 272.6,325.4 273.3,326.6 274.0,327.5 274.7,327.9 275.4,329.2 276.1,329.8 276.8,330.4 277.5,331.4 278.2,332.9 278.9,332.6 279.6,334.1 280.3,335.0 281.0,335.7 281.7,336.6 282.4,336.5 283.1,338.0 283.8,337.8 284.5,339.4 285.2,339.7 285.9,339.9 286.6,340.1 287.3,340.8 288.0,342.1 288.7,341.7 289.4,342.8 290.1,342.5 290.8,343.9 291.5,343.8 292.2,344.8 292.9,344.6 293.6,345.9 294.3,346.2 295.0,346.6 295.7,346.1 296.4,347.3 297.1,346.8 297.8,347.5 298.5,347.5 299.2,348.4 299.9,348.5 300.6,348.3 301.3,348.7 302.0,349.2 302.7,349.4 303.4,349.7 304.1,350.2 304.8,350.5 305.5,349.8 306.2,350.1 306.9,350.3 307.6,350.1 308.3,350.4 309.0,350.3 309.7,350.6 310.4,351.1 311.1,350.6 311.8,350.7 312.5,350.8 313.2,351.3 313.9,351.8 314.6,351.1 315.3,351.6 316.0,351.5 316.7,351.9 317.4,352.3 318.1,352.3 318.8,351.3 319.5,351.4 320.2,351.7 320.9,352.5 321.6,351.9 322.3,352.5 323.0,352.3 323.7,351.7 324.4,352.4 325.1,352.6 325.8,352.9 326.5,351.8 327.2,352.5 327.9,352.7 328.6,352.2 329.3,352.5 329.3,361.0 328.6,360.4 327.9,360.1 327.2,359.9 326.5,360.9 325.8,359.7 325.1,360.7 324.4,360.1 323.7,359.4 323.0,359.7 322.3,360.1 321.6,359.5 320.9,359.9 320.2,358.9 319.5,358.3 318.8,359.6 318.1,358.7 317.4,358.4 316.7,359.2 316.0,359.1 315.3,358.2 314.6,357.6 313.9,357.3 313.2,358.0 312.5,357.1 311.8,358.3 311.1,357.0 310.4,357.6 309.7,357.0 309.0,357.1 308.3,357.3 307.6,356.4 306.9,356.6 306.2,355.9 305.5,356.6 304.8,355.5 304.1,354.9 303.4,354.6 302.7,355.6 302.0,355.3 301.3,354.3 300.6,354.8 299.9,354.1 299.2,354.0 298.5,353.3 297.8,351.9 297.1,351.3 296.4,350.9 295.7,351.3 295.0,350.2 294.3,350.1 293.6,350.2 292.9,349.9 292.2,349.2 291.5,348.4 290.8,347.9 290.1,347.2 289.4,346.6 288.7,345.2 288.0,345.4 287.3,344.2 286.6,344.5 285.9,343.3 285.2,342.3 284.5,342.3 283.8,341.3 283.1,340.4 282.4,339.6 281.7,339.3 281.0,337.8 280.3,338.4 279.6,336.9 278.9,335.6 278.2,335.3 277.5,334.4 276.8,332.9 276.1,332.7 275.4,331.3 274.7,330.3 274.0,330.3 273.3,328.4 272.6,327.3 271.9,327.6 271.2,325.4 270.5,325.1 269.8,324.0 269.1,322.8 268.4,321.9 267.7,321.2 267.0,321.1 266.3,319.1 265.6,318.7 264.9,318.5 264.2,317.6 263.5,317.1 262.8,316.1 262.1,314.0 261.4,314.0 260.7,312.9 260.0,311.6 259.3,310.8 258.6,310.7 257.9,309.1 257.2,308.3 256.5,307.6 255.8,307.6 255.1,305.9 254.4,304.7 253.7,304.4 253.0,303.2 252.3,302.9 251.6,302.0 250.9,300.7 250.2,300.9 249.5,299.9 248.8,298.8 248.1,297.4 247.4,296.4 246.7,295.6 246.0,295.8 245.3,294.9 244.6,294.1 243.9,292.6 243.2,292.4 242.5,297.9 241.8,313.3 241.1,334.0 240.4,360.8 239.7,361.7 239.0,360.5 238.3,361.6 237.6,360.4 236.9,361.6 236.2,361.6 235.5,361.6 234.8,361.1 234.1,360.4 233.4,361.0 232.7,361.1 232.0,361.4 231.3,361.0 230.6,361.5 229.9,361.3 229.2,361.6 228.5,360.5" fill="#c6c6c6" stroke="#c6c6c6" stroke-width="0.6"/><polyline points="228.5,348.4 229.1,350.4 229.7,350.1 230.3,349.6 230.9,350.2 231.5,350.6 232.1,348.2 232.7,349.6 233.3,350.2 233.9,350.3 234.5,350.1 235.1,348.7 235.7,351.1 236.3,350.6 236.9,348.9 237.5,349.5 238.1,351.1 238.7,348.8 239.3,349.4 239.9,351.1 240.5,350.9 241.1,332.8 241.7,315.0 242.3,299.1 242.9,293.8 243.5,291.6 244.1,292.3 244.7,293.0 245.3,293.7 245.9,294.4 246.5,295.1 247.1,295.8 247.7,296.5 248.3,297.2 248.9,297.9 249.5,298.6 250.1,299.4 250.7,300.1 251.3,300.8 251.9,301.5 252.5,302.2 253.1,302.9 253.7,303.6 254.3,304.4 254.9,305.1 255.5,305.8 256.1,306.5 256.7,307.2 257.3,308.0 257.9,308.7 258.5,309.4 259.1,310.1 259.7,310.8 260.3,311.6 260.9,312.3 261.5,313.0 262.1,313.7 262.7,314.4 263.3,315.2 263.9,315.9 264.5,316.6 265.1,317.3 265.7,318.0 266.3,318.7 266.9,319.4 267.5,320.2 268.1,321.0 268.7,321.5 269.3,322.2 269.9,322.8 270.5,323.6 271.1,324.6 271.7,324.9 272.3,325.8 272.9,326.5 273.5,327.5 274.1,328.5 274.7,328.4 275.3,329.2 275.9,330.7 276.5,331.4 277.1,331.1 277.7,331.9 278.3,332.7 278.9,333.1 279.5,333.8 280.1,334.5 280.7,334.8 281.3,335.1 281.9,335.7 282.5,336.4 283.1,336.9 283.7,338.3 284.3,339.0 284.9,338.7 285.5,340.0 286.1,340.3 286.7,340.0 287.3,340.7 287.9,340.5 288.5,342.5 289.1,342.1 289.7,341.5 290.3,342.1 290.9,343.7 291.5,343.4 292.1,344.6 292.7,343.7 293.3,345.4 293.9,345.7 294.5,344.2 295.1,345.7 295.7,345.0 296.3,346.6 296.9,347.1 297.5,347.4 298.1,346.2 298.7,346.1 299.3,347.9 299.9,347.9 300.5,346.9 301.1,347.2 301.7,348.3 302.3,347.2 302.9,348.7 303.5,347.8 304.1,348.0 304.7,348.5 305.3,348.9 305.9,349.5 306.5,347.9 307.1,349.8 307.7,348.6 308.3,348.9 308.9,349.8 309.5,350.0 310.1,349.8 310.7,350.6 311.3,348.8 311.9,349.1 312.5,350.0 313.1,349.0 313.7,348.8 314.3,349.0 314.9,350.4 315.5,350.6 316.1,350.4 316.7,351.0 317.3,350.6 317.9,349.4 318.5,349.4 319.1,350.5 319.7,348.8 320.3,350.2 320.9,348.9 321.5,348.8 322.1,350.0 322.7,349.0 323.3,351.1 323.9,350.9 324.5,349.9 325.1,349.2 325.7,349.0 326.3,350.0 326.9,350.0 327.5,349.6 328.1,350.6 328.7,350.1 329.3,350.7" fill="none" stroke="#1a9a30" stroke-width="1.4"/><path d="M240.2 410 L240.5 320 L241.3 296 L242 292 L242.8 297 L243.6 330 L244.6 410" fill="none" stroke="#ff1010" stroke-width="1.3"/><polyline points="240.5,349.7 241.2,330 242.2,300 243.2,291.2 252,301.6 260,311.2 268.1,320.9 276.1,330.5 284.1,338.5 292.1,344.1 300.1,347.8 308.1,349.4 318,349.9 329,350" fill="none" stroke="#000" stroke-width="1.3"/><line x1="240.6" x2="240.6" y1="349.7" y2="300" stroke="#444" stroke-width="1"/></g><g clip-path="url(#rc)"><path d="M232.90 424.51 V440.87 M233.45 419.54 V440.70 M234.00 423.65 V445.41 M234.55 424.51 V441.43 M235.10 420.96 V449.38 M235.65 423.58 V440.70 M236.20 412.87 V440.70 M236.75 424.51 V440.70 M237.30 424.51 V444.07 M237.85 424.51 V446.43 M238.40 424.51 V440.70 M238.95 424.51 V440.70 M239.50 418.39 V440.70 M240.05 424.51 V440.70 M240.60 424.51 V447.33 M241.15 424.51 V442.03 M241.70 424.51 V440.70 M242.25 412.87 V440.70 M242.80 423.18 V448.98 M243.35 420.70 V440.70 M243.90 422.17 V440.70 M244.45 424.51 V445.60 M245.00 424.51 V440.70 M245.55 424.27 V440.70 M246.10 421.63 V453.86 M246.65 418.94 V440.70 M247.20 424.51 V441.15 M247.75 422.99 V446.95 M248.30 424.51 V440.70 M248.85 416.24 V444.71 M249.40 418.01 V441.08 M249.95 424.51 V440.70 M250.50 424.20 V440.70 M251.05 423.62 V440.70 M251.60 424.51 V445.49 M252.15 418.92 V440.89 M252.70 418.72 V440.70 M253.25 419.71 V447.18 M253.80 420.74 V444.35 M254.35 418.88 V441.44 M254.90 418.84 V442.28 M255.45 417.41 V446.17 M256.00 424.51 V445.02 M256.55 423.64 V441.17 M257.10 424.51 V440.89 M257.65 424.51 V446.38 M258.20 424.51 V440.70 M258.75 417.73 V440.70 M259.30 419.47 V440.70 M259.85 422.37 V440.70 M260.40 422.47 V444.80 M260.95 424.51 V445.45 M261.50 424.51 V449.00 M262.05 423.29 V441.25 M262.60 422.43 V440.70 M263.15 424.51 V442.12 M263.70 422.20 V441.78 M264.25 416.74 V445.98 M264.80 424.51 V440.70 M265.35 424.51 V441.03 M265.90 422.62 V441.96 M266.45 424.35 V445.62 M267.00 424.51 V440.70 M267.55 415.95 V446.96 M268.10 422.31 V442.71 M268.65 422.26 V440.70 M269.20 423.75 V440.70 M269.75 424.51 V442.55 M270.30 412.87 V440.70 M270.85 424.51 V446.00 M271.40 416.12 V445.67 M271.95 424.51 V440.70 M272.50 421.63 V440.70 M273.05 417.96 V443.54 M273.60 421.63 V440.70 M274.15 422.02 V440.70 M274.70 424.51 V441.66 M275.25 422.54 V440.70 M275.80 424.51 V442.50 M276.35 420.50 V440.75 M276.90 424.51 V440.70 M277.45 421.34 V440.70 M278.00 424.51 V444.16 M278.55 424.51 V445.52 M279.10 421.42 V440.70 M279.65 414.37 V447.86 M280.20 418.68 V440.70 M280.75 424.34 V440.70 M281.30 423.36 V444.23 M281.85 424.51 V440.70 M282.40 424.51 V442.85 M282.95 424.43 V440.70 M283.50 424.51 V440.70 M284.05 423.95 V440.70 M284.60 421.83 V442.16 M285.15 422.33 V440.70 M285.70 420.98 V440.70 M286.25 420.16 V440.70 M286.80 422.77 V440.70 M287.35 421.24 V441.16 M287.90 423.67 V440.70 M288.45 416.53 V441.59 M289.00 424.51 V445.27 M289.55 424.51 V445.92 M290.10 421.34 V440.72 M290.65 424.51 V444.29 M291.20 419.72 V443.68 M291.75 424.51 V443.63 M292.30 421.51 V440.70 M292.85 418.81 V440.70 M293.40 424.51 V440.70 M293.95 422.58 V441.39 M294.50 424.49 V449.98 M295.05 424.51 V440.88 M295.60 423.67 V444.07 M296.15 423.00 V442.45 M296.70 422.33 V440.70 M297.25 423.48 V440.70 M297.80 424.51 V440.70 M298.35 424.51 V440.70 M298.90 424.51 V440.70 M299.45 418.66 V440.70 M300.00 421.45 V449.33 M300.55 424.51 V440.70 M301.10 423.06 V440.70 M301.65 419.09 V440.70 M302.20 418.18 V440.70 M302.75 424.51 V444.00 M303.30 419.09 V440.70 M303.85 424.51 V440.70 M304.40 424.51 V442.74 M304.95 423.21 V441.37 M305.50 422.35 V440.70 M306.05 412.87 V440.70 M306.60 419.03 V440.70 M307.15 424.32 V440.70 M307.70 424.51 V444.90 M308.25 422.39 V440.70 M308.80 424.51 V448.09 M309.35 424.51 V440.70 M309.90 419.73 V447.65 M310.45 424.51 V446.42 M311.00 423.55 V440.70 M311.55 424.51 V446.07 M312.10 424.51 V440.70 M312.65 424.51 V442.61 M313.20 413.42 V441.82 M313.75 421.12 V440.70 M314.30 423.47 V440.70 M314.85 415.18 V446.32 M315.40 420.60 V453.29 M315.95 424.51 V440.70 M316.50 424.51 V440.70 M317.05 414.61 V441.08 M317.60 416.15 V440.70 M318.15 424.51 V443.70 M318.70 422.02 V448.88 M319.25 419.59 V440.70 M319.80 419.25 V440.70 M320.35 420.59 V445.03 M320.90 418.68 V440.70 M321.45 424.51 V445.65 M322.00 419.97 V440.70 M322.55 415.52 V442.73 M323.10 422.38 V445.90 M323.65 424.51 V442.39 M324.20 422.24 V440.70 M324.75 421.28 V440.70 M325.30 412.87 V440.70 M325.85 422.84 V445.58 M326.40 422.45 V440.70 M326.95 424.51 V440.70 M327.50 421.04 V440.70 M328.05 422.14 V446.32 M328.60 424.51 V445.41 M329.15 424.51 V441.12" stroke="#24a03a" stroke-width="0.8" fill="none"/><line x1="228" x2="329" y1="431.9" y2="431.9" stroke="#0e2e12" stroke-width="1.8"/></g><line x1="227" x2="329" y1="409.1" y2="409.1" stroke="#111" stroke-width="1.4"/><line x1="232.2" x2="232.2" y1="286.7" y2="458" stroke="#1020ff" stroke-width="1.3"/><path d="M232 299.4 L234.3 301 L232 302.6Z" fill="#1020ff"/><path d="M232 314.5 L234.3 316.1 L232 317.70000000000005Z" fill="#1020ff"/><path d="M232 329.59999999999997 L234.3 331.2 L232 332.8Z" fill="#1020ff"/><path d="M232 344.59999999999997 L234.3 346.2 L232 347.8Z" fill="#1020ff"/><path d="M232 359.59999999999997 L234.3 361.2 L232 362.8Z" fill="#1020ff"/><path d="M232 374.7 L234.3 376.3 L232 377.90000000000003Z" fill="#1020ff"/><path d="M232 389.7 L234.3 391.3 L232 392.90000000000003Z" fill="#1020ff"/><path d="M232 404.79999999999995 L234.3 406.4 L232 408.0Z" fill="#1020ff"/><path d="M232 419.79999999999995 L234.3 421.4 L232 423.0Z" fill="#1020ff"/><path d="M232 434.9 L234.3 436.5 L232 438.1Z" fill="#1020ff"/><path d="M232 449.9 L234.3 451.5 L232 453.1Z" fill="#1020ff"/><path d="M329.5 329.59999999999997 L327.2 331.2 L329.5 332.8Z" fill="#1020ff"/><path d="M329.5 344.59999999999997 L327.2 346.2 L329.5 347.8Z" fill="#1020ff"/><path d="M329.5 359.59999999999997 L327.2 361.2 L329.5 362.8Z" fill="#1020ff"/><path d="M329.5 374.7 L327.2 376.3 L329.5 377.90000000000003Z" fill="#1020ff"/><path d="M329.5 389.7 L327.2 391.3 L329.5 392.90000000000003Z" fill="#1020ff"/><path d="M329.5 404.79999999999995 L327.2 406.4 L329.5 408.0Z" fill="#1020ff"/><path d="M329.5 419.79999999999995 L327.2 421.4 L329.5 423.0Z" fill="#1020ff"/><path d="M329.5 434.9 L327.2 436.5 L329.5 438.1Z" fill="#1020ff"/><path d="M329.5 449.9 L327.2 451.5 L329.5 453.1Z" fill="#1020ff"/><rect x="281" y="289" width="50" height="45" fill="#ffffcc" stroke="#999" stroke-width="0.7"/><rect x="281.8" y="291.80" width="5.8" height="5.2" fill="#bdbdbd"/><rect x="281.8" y="300.82" width="5.8" height="5.2" fill="#c8c8c8"/><rect x="281.8" y="309.84" width="5.8" height="5.2" fill="#ff1010"/><rect x="281.8" y="318.86" width="5.8" height="5.2" fill="#1a9a30"/><rect x="281.8" y="327.88" width="5.8" height="5.2" fill="#000"/></g></svg>
<div style="left:290px;top:288.4px;width:39px;height:12px;overflow:hidden">
<div class="t" style="left:0;top:0.6px;width:80px;font-size:8px;color:#262630;transform:scaleX(0.82);transform-origin:0 0">Pixel (1,1)</div></div>
<div style="left:290px;top:297.41999999999996px;width:39px;height:12px;overflow:hidden">
<div class="t" style="left:0;top:0.6px;width:80px;font-size:8px;color:#262630;transform:scaleX(0.82);transform-origin:0 0">ROI 0</div></div>
<div style="left:290px;top:306.44px;width:39px;height:12px;overflow:hidden">
<div class="t" style="left:0;top:0.6px;width:80px;font-size:8px;color:#262630;transform:scaleX(0.82);transform-origin:0 0">Calculated IRF</div></div>
<div style="left:290px;top:315.46px;width:39px;height:12px;overflow:hidden">
<div class="t" style="left:0;top:0.6px;width:80px;font-size:8px;color:#262630;transform:scaleX(0.82);transform-origin:0 0">Overall Decay</div></div>
<div style="left:290px;top:324.47999999999996px;width:39px;height:12px;overflow:hidden">
<div class="t" style="left:0;top:0.6px;width:80px;font-size:8px;color:#262630;transform:scaleX(0.82);transform-origin:0 0">Fitted Curve</div></div>
<div class="t" style="left:68.60px;top:273.83px;width:400px;text-align:center;font-size:9px;font-weight:bold;color:#111;transform:scaleX(0.92);transform-origin:50% 0;">Fit</div>
<div class="t" style="left:207.2px;top:395.7px;width:18px;text-align:right;font-size:8.5px;color:#262630;transform:scaleX(0.85);transform-origin:100% 0">10<span style="font-size:5.5px;vertical-align:3px">0</span></div>
<div class="t" style="left:207.2px;top:373.0px;width:18px;text-align:right;font-size:8.5px;color:#262630;transform:scaleX(0.85);transform-origin:100% 0">10<span style="font-size:5.5px;vertical-align:3px">1</span></div>
<div class="t" style="left:207.2px;top:350.3px;width:18px;text-align:right;font-size:8.5px;color:#262630;transform:scaleX(0.85);transform-origin:100% 0">10<span style="font-size:5.5px;vertical-align:3px">2</span></div>
<div class="t" style="left:207.2px;top:327.6px;width:18px;text-align:right;font-size:8.5px;color:#262630;transform:scaleX(0.85);transform-origin:100% 0">10<span style="font-size:5.5px;vertical-align:3px">3</span></div>
<div class="t" style="left:207.2px;top:304.9px;width:18px;text-align:right;font-size:8.5px;color:#262630;transform:scaleX(0.85);transform-origin:100% 0">10<span style="font-size:5.5px;vertical-align:3px">4</span></div>
<div class="t" style="left:207.2px;top:282.2px;width:18px;text-align:right;font-size:8.5px;color:#262630;transform:scaleX(0.85);transform-origin:100% 0">10<span style="font-size:5.5px;vertical-align:3px">5</span></div>
<div class="t" style="left:-174.50px;top:406.10px;width:400px;text-align:right;font-size:8.5px;font-weight:normal;color:#262630;transform:scaleX(0.9);transform-origin:100% 0;">4</div>
<div class="t" style="left:-174.50px;top:426.00px;width:400px;text-align:right;font-size:8.5px;font-weight:normal;color:#262630;transform:scaleX(0.9);transform-origin:100% 0;">0</div>
<div class="t" style="left:-174.50px;top:446.60px;width:400px;text-align:right;font-size:8.5px;font-weight:normal;color:#262630;transform:scaleX(0.9);transform-origin:100% 0;">-4</div>
<div class="t" style="left:32.20px;top:457.30px;width:400px;text-align:center;font-size:8.5px;font-weight:normal;color:#262630;transform:scaleX(0.9);transform-origin:50% 0;">0</div>
<div class="t" style="left:71.50px;top:457.30px;width:400px;text-align:center;font-size:8.5px;font-weight:normal;color:#262630;transform:scaleX(0.9);transform-origin:50% 0;">10</div>
<div class="t" style="left:110.20px;top:457.30px;width:400px;text-align:center;font-size:8.5px;font-weight:normal;color:#262630;transform:scaleX(0.9);transform-origin:50% 0;">20</div>
<div class="t" style="left:167.5px;top:345.3px;width:80px;text-align:center;font-size:8px;color:#262630;transform:rotate(-90deg) scaleX(0.92);transform-origin:50% 50%">Intensity [ Cnts]</div>
<div style="left:198px;top:409.5px;width:20px;height:49px;overflow:hidden"><div class="t" style="left:-30.5px;top:23.4px;width:80px;text-align:center;font-size:8px;color:#262630;transform:rotate(-90deg) scaleX(0.92);transform-origin:50% 50%">Resids. [StdDev.]</div></div>
<svg style="position:absolute;left:0;top:0" width="795" height="474" viewBox="0 0 795 474"><rect x="464.5" y="18.5" width="226.1" height="195.2" fill="#fff"/><line x1="480.20" x2="480.20" y1="18.5" y2="213.7" stroke="#d9f0dc" stroke-width="0.9"/><line x1="491.00" x2="491.00" y1="18.5" y2="213.7" stroke="#d9f0dc" stroke-width="0.9"/><line x1="501.80" x2="501.80" y1="18.5" y2="213.7" stroke="#d9f0dc" stroke-width="0.9"/><line x1="523.40" x2="523.40" y1="18.5" y2="213.7" stroke="#d9f0dc" stroke-width="0.9"/><line x1="534.20" x2="534.20" y1="18.5" y2="213.7" stroke="#d9f0dc" stroke-width="0.9"/><line x1="545.00" x2="545.00" y1="18.5" y2="213.7" stroke="#d9f0dc" stroke-width="0.9"/><line x1="566.60" x2="566.60" y1="18.5" y2="213.7" stroke="#d9f0dc" stroke-width="0.9"/><line x1="577.40" x2="577.40" y1="18.5" y2="213.7" stroke="#d9f0dc" stroke-width="0.9"/><line x1="588.20" x2="588.20" y1="18.5" y2="213.7" stroke="#d9f0dc" stroke-width="0.9"/><line x1="609.80" x2="609.80" y1="18.5" y2="213.7" stroke="#d9f0dc" stroke-width="0.9"/><line x1="620.60" x2="620.60" y1="18.5" y2="213.7" stroke="#d9f0dc" stroke-width="0.9"/><line x1="631.40" x2="631.40" y1="18.5" y2="213.7" stroke="#d9f0dc" stroke-width="0.9"/><line x1="653.00" x2="653.00" y1="18.5" y2="213.7" stroke="#d9f0dc" stroke-width="0.9"/><line x1="663.80" x2="663.80" y1="18.5" y2="213.7" stroke="#d9f0dc" stroke-width="0.9"/><line x1="674.60" x2="674.60" y1="18.5" y2="213.7" stroke="#d9f0dc" stroke-width="0.9"/><line x1="464.5" x2="690.6" y1="204.07" y2="204.07" stroke="#d9f0dc" stroke-width="0.9"/><line x1="464.5" x2="690.6" y1="198.24" y2="198.24" stroke="#d9f0dc" stroke-width="0.9"/><line x1="464.5" x2="690.6" y1="192.41" y2="192.41" stroke="#d9f0dc" stroke-width="0.9"/><line x1="464.5" x2="690.6" y1="180.75" y2="180.75" stroke="#d9f0dc" stroke-width="0.9"/><line x1="464.5" x2="690.6" y1="174.92" y2="174.92" stroke="#d9f0dc" stroke-width="0.9"/><line x1="464.5" x2="690.6" y1="169.09" y2="169.09" stroke="#d9f0dc" stroke-width="0.9"/><line x1="464.5" x2="690.6" y1="157.43" y2="157.43" stroke="#d9f0dc" stroke-width="0.9"/><line x1="464.5" x2="690.6" y1="151.60" y2="151.60" stroke="#d9f0dc" stroke-width="0.9"/><line x1="464.5" x2="690.6" y1="145.77" y2="145.77" stroke="#d9f0dc" stroke-width="0.9"/><line x1="464.5" x2="690.6" y1="134.11" y2="134.11" stroke="#d9f0dc" stroke-width="0.9"/><line x1="464.5" x2="690.6" y1="128.28" y2="128.28" stroke="#d9f0dc" stroke-width="0.9"/><line x1="464.5" x2="690.6" y1="122.45" y2="122.45" stroke="#d9f0dc" stroke-width="0.9"/><line x1="464.5" x2="690.6" y1="110.79" y2="110.79" stroke="#d9f0dc" stroke-width="0.9"/><line x1="464.5" x2="690.6" y1="104.96" y2="104.96" stroke="#d9f0dc" stroke-width="0.9"/><line x1="464.5" x2="690.6" y1="99.13" y2="99.13" stroke="#d9f0dc" stroke-width="0.9"/><line x1="464.5" x2="690.6" y1="87.47" y2="87.47" stroke="#d9f0dc" stroke-width="0.9"/><line x1="464.5" x2="690.6" y1="81.64" y2="81.64" stroke="#d9f0dc" stroke-width="0.9"/><line x1="464.5" x2="690.6" y1="75.81" y2="75.81" stroke="#d9f0dc" stroke-width="0.9"/><line x1="464.5" x2="690.6" y1="64.15" y2="64.15" stroke="#d9f0dc" stroke-width="0.9"/><line x1="464.5" x2="690.6" y1="58.32" y2="58.32" stroke="#d9f0dc" stroke-width="0.9"/><line x1="464.5" x2="690.6" y1="52.49" y2="52.49" stroke="#d9f0dc" stroke-width="0.9"/><line x1="464.5" x2="690.6" y1="40.83" y2="40.83" stroke="#d9f0dc" stroke-width="0.9"/><line x1="464.5" x2="690.6" y1="35.00" y2="35.00" stroke="#d9f0dc" stroke-width="0.9"/><line x1="464.5" x2="690.6" y1="29.17" y2="29.17" stroke="#d9f0dc" stroke-width="0.9"/><line x1="469.40" x2="469.40" y1="18.5" y2="213.7" stroke="#6cc47c" stroke-width="1"/><line x1="512.60" x2="512.60" y1="18.5" y2="213.7" stroke="#6cc47c" stroke-width="1"/><line x1="555.80" x2="555.80" y1="18.5" y2="213.7" stroke="#6cc47c" stroke-width="1"/><line x1="599.00" x2="599.00" y1="18.5" y2="213.7" stroke="#6cc47c" stroke-width="1"/><line x1="642.20" x2="642.20" y1="18.5" y2="213.7" stroke="#6cc47c" stroke-width="1"/><line x1="685.40" x2="685.40" y1="18.5" y2="213.7" stroke="#6cc47c" stroke-width="1"/><line x1="464.5" x2="690.6" y1="209.90" y2="209.90" stroke="#6cc47c" stroke-width="1"/><line x1="464.5" x2="690.6" y1="186.58" y2="186.58" stroke="#6cc47c" stroke-width="1"/><line x1="464.5" x2="690.6" y1="163.26" y2="163.26" stroke="#6cc47c" stroke-width="1"/><line x1="464.5" x2="690.6" y1="139.94" y2="139.94" stroke="#6cc47c" stroke-width="1"/><line x1="464.5" x2="690.6" y1="116.62" y2="116.62" stroke="#6cc47c" stroke-width="1"/><line x1="464.5" x2="690.6" y1="93.30" y2="93.30" stroke="#6cc47c" stroke-width="1"/><line x1="464.5" x2="690.6" y1="69.98" y2="69.98" stroke="#6cc47c" stroke-width="1"/><line x1="464.5" x2="690.6" y1="46.66" y2="46.66" stroke="#6cc47c" stroke-width="1"/><line x1="464.5" x2="690.6" y1="23.34" y2="23.34" stroke="#6cc47c" stroke-width="1"/><rect x="464.5" y="18.5" width="226.1" height="195.2" fill="none" stroke="#7ccc8a" stroke-width="1"/><rect x="466.63" y="209.40" width="5.54" height="4.30" fill="#1f9e36" stroke="#0d3312" stroke-width="0.8"/><rect x="472.17" y="209.40" width="5.54" height="4.30" fill="#1f9e36" stroke="#0d3312" stroke-width="0.8"/><rect x="477.71" y="209.40" width="5.54" height="4.30" fill="#1f9e36" stroke="#0d3312" stroke-width="0.8"/><rect x="483.25" y="209.40" width="5.54" height="4.30" fill="#1f9e36" stroke="#0d3312" stroke-width="0.8"/><rect x="488.78" y="209.40" width="5.54" height="4.30" fill="#1f9e36" stroke="#0d3312" stroke-width="0.8"/><rect x="494.32" y="209.40" width="5.54" height="4.30" fill="#1f9e36" stroke="#0d3312" stroke-width="0.8"/><rect x="499.86" y="209.40" width="5.54" height="4.30" fill="#1f9e36" stroke="#0d3312" stroke-width="0.8"/><rect x="505.40" y="208.80" width="5.54" height="4.90" fill="#1f9e36" stroke="#0d3312" stroke-width="0.8"/><rect x="510.94" y="208.80" width="5.54" height="4.90" fill="#1f9e36" stroke="#0d3312" stroke-width="0.8"/><rect x="516.48" y="208.80" width="5.54" height="4.90" fill="#1f9e36" stroke="#0d3312" stroke-width="0.8"/><rect x="522.02" y="208.30" width="5.54" height="5.40" fill="#1f9e36" stroke="#0d3312" stroke-width="0.8"/><rect x="527.55" y="207.10" width="5.54" height="6.60" fill="#1f9e36" stroke="#0d3312" stroke-width="0.8"/><rect x="533.09" y="206.50" width="5.54" height="7.20" fill="#1f9e36" stroke="#0d3312" stroke-width="0.8"/><rect x="538.63" y="207.10" width="5.54" height="6.60" fill="#1f9e36" stroke="#0d3312" stroke-width="0.8"/><rect x="544.17" y="204.20" width="5.54" height="9.50" fill="#1f9e36" stroke="#0d3312" stroke-width="0.8"/><rect x="549.71" y="203.60" width="5.54" height="10.10" fill="#1f9e36" stroke="#0d3312" stroke-width="0.8"/><rect x="555.25" y="202.20" width="5.54" height="11.50" fill="#1f9e36" stroke="#0d3312" stroke-width="0.8"/><rect x="560.78" y="197.90" width="5.54" height="15.80" fill="#1f9e36" stroke="#0d3312" stroke-width="0.8"/><rect x="566.32" y="188.30" width="5.54" height="25.40" fill="#1f9e36" stroke="#0d3312" stroke-width="0.8"/><rect x="571.86" y="171.00" width="5.54" height="42.70" fill="#1f9e36" stroke="#0d3312" stroke-width="0.8"/><rect x="577.40" y="118.00" width="5.54" height="95.70" fill="#1f9e36" stroke="#0d3312" stroke-width="0.8"/><rect x="582.94" y="63.10" width="5.54" height="150.60" fill="#1f9e36" stroke="#0d3312" stroke-width="0.8"/><rect x="588.48" y="23.10" width="5.54" height="190.60" fill="#1f9e36" stroke="#0d3312" stroke-width="0.8"/><rect x="594.02" y="58.00" width="5.54" height="155.70" fill="#1f9e36" stroke="#0d3312" stroke-width="0.8"/><rect x="599.55" y="120.80" width="5.54" height="92.90" fill="#1f9e36" stroke="#0d3312" stroke-width="0.8"/><rect x="605.09" y="156.50" width="5.54" height="57.20" fill="#1f9e36" stroke="#0d3312" stroke-width="0.8"/><rect x="610.63" y="180.00" width="5.54" height="33.70" fill="#1f9e36" stroke="#0d3312" stroke-width="0.8"/><rect x="616.17" y="188.30" width="5.54" height="25.40" fill="#1f9e36" stroke="#0d3312" stroke-width="0.8"/><rect x="621.71" y="196.40" width="5.54" height="17.30" fill="#1f9e36" stroke="#0d3312" stroke-width="0.8"/><rect x="627.25" y="200.70" width="5.54" height="13.00" fill="#1f9e36" stroke="#0d3312" stroke-width="0.8"/><rect x="632.78" y="203.00" width="5.54" height="10.70" fill="#1f9e36" stroke="#0d3312" stroke-width="0.8"/><rect x="638.32" y="201.60" width="5.54" height="12.10" fill="#1f9e36" stroke="#0d3312" stroke-width="0.8"/><rect x="643.86" y="203.60" width="5.54" height="10.10" fill="#1f9e36" stroke="#0d3312" stroke-width="0.8"/><rect x="649.40" y="207.10" width="5.54" height="6.60" fill="#1f9e36" stroke="#0d3312" stroke-width="0.8"/><rect x="654.94" y="206.50" width="5.54" height="7.20" fill="#1f9e36" stroke="#0d3312" stroke-width="0.8"/><rect x="660.48" y="207.10" width="5.54" height="6.60" fill="#1f9e36" stroke="#0d3312" stroke-width="0.8"/><rect x="666.02" y="206.50" width="5.54" height="7.20" fill="#1f9e36" stroke="#0d3312" stroke-width="0.8"/><rect x="671.55" y="208.30" width="5.54" height="5.40" fill="#1f9e36" stroke="#0d3312" stroke-width="0.8"/><rect x="677.09" y="208.30" width="5.54" height="5.40" fill="#1f9e36" stroke="#0d3312" stroke-width="0.8"/><rect x="682.63" y="202.20" width="5.54" height="11.50" fill="#1f9e36" stroke="#0d3312" stroke-width="0.8"/><rect x="469.1" y="255.7" width="221.3" height="195" fill="#fff"/><line x1="469.1" x2="690.4" y1="443.96" y2="443.96" stroke="#ececec" stroke-width="0.8"/><line x1="469.1" x2="690.4" y1="441.21" y2="441.21" stroke="#ececec" stroke-width="0.8"/><line x1="469.1" x2="690.4" y1="438.47" y2="438.47" stroke="#ececec" stroke-width="0.8"/><line x1="469.1" x2="690.4" y1="435.72" y2="435.72" stroke="#ececec" stroke-width="0.8"/><line x1="469.1" x2="690.4" y1="430.24" y2="430.24" stroke="#ececec" stroke-width="0.8"/><line x1="469.1" x2="690.4" y1="427.49" y2="427.49" stroke="#ececec" stroke-width="0.8"/><line x1="469.1" x2="690.4" y1="424.75" y2="424.75" stroke="#ececec" stroke-width="0.8"/><line x1="469.1" x2="690.4" y1="422.00" y2="422.00" stroke="#ececec" stroke-width="0.8"/><line x1="469.1" x2="690.4" y1="416.52" y2="416.52" stroke="#ececec" stroke-width="0.8"/><line x1="469.1" x2="690.4" y1="413.77" y2="413.77" stroke="#ececec" stroke-width="0.8"/><line x1="469.1" x2="690.4" y1="411.03" y2="411.03" stroke="#ececec" stroke-width="0.8"/><line x1="469.1" x2="690.4" y1="408.28" y2="408.28" stroke="#ececec" stroke-width="0.8"/><line x1="469.1" x2="690.4" y1="402.80" y2="402.80" stroke="#ececec" stroke-width="0.8"/><line x1="469.1" x2="690.4" y1="400.05" y2="400.05" stroke="#ececec" stroke-width="0.8"/><line x1="469.1" x2="690.4" y1="397.31" y2="397.31" stroke="#ececec" stroke-width="0.8"/><line x1="469.1" x2="690.4" y1="394.56" y2="394.56" stroke="#ececec" stroke-width="0.8"/><line x1="469.1" x2="690.4" y1="389.08" y2="389.08" stroke="#ececec" stroke-width="0.8"/><line x1="469.1" x2="690.4" y1="386.33" y2="386.33" stroke="#ececec" stroke-width="0.8"/><line x1="469.1" x2="690.4" y1="383.59" y2="383.59" stroke="#ececec" stroke-width="0.8"/><line x1="469.1" x2="690.4" y1="380.84" y2="380.84" stroke="#ececec" stroke-width="0.8"/><line x1="469.1" x2="690.4" y1="375.36" y2="375.36" stroke="#ececec" stroke-width="0.8"/><line x1="469.1" x2="690.4" y1="372.61" y2="372.61" stroke="#ececec" stroke-width="0.8"/><line x1="469.1" x2="690.4" y1="369.87" y2="369.87" stroke="#ececec" stroke-width="0.8"/><line x1="469.1" x2="690.4" y1="367.12" y2="367.12" stroke="#ececec" stroke-width="0.8"/><line x1="469.1" x2="690.4" y1="361.64" y2="361.64" stroke="#ececec" stroke-width="0.8"/><line x1="469.1" x2="690.4" y1="358.89" y2="358.89" stroke="#ececec" stroke-width="0.8"/><line x1="469.1" x2="690.4" y1="356.15" y2="356.15" stroke="#ececec" stroke-width="0.8"/><line x1="469.1" x2="690.4" y1="353.40" y2="353.40" stroke="#ececec" stroke-width="0.8"/><line x1="469.1" x2="690.4" y1="347.92" y2="347.92" stroke="#ececec" stroke-width="0.8"/><line x1="469.1" x2="690.4" y1="345.17" y2="345.17" stroke="#ececec" stroke-width="0.8"/><line x1="469.1" x2="690.4" y1="342.43" y2="342.43" stroke="#ececec" stroke-width="0.8"/><line x1="469.1" x2="690.4" y1="339.68" y2="339.68" stroke="#ececec" stroke-width="0.8"/><line x1="469.1" x2="690.4" y1="334.20" y2="334.20" stroke="#ececec" stroke-width="0.8"/><line x1="469.1" x2="690.4" y1="331.45" y2="331.45" stroke="#ececec" stroke-width="0.8"/><line x1="469.1" x2="690.4" y1="328.71" y2="328.71" stroke="#ececec" stroke-width="0.8"/><line x1="469.1" x2="690.4" y1="325.96" y2="325.96" stroke="#ececec" stroke-width="0.8"/><line x1="469.1" x2="690.4" y1="320.48" y2="320.48" stroke="#ececec" stroke-width="0.8"/><line x1="469.1" x2="690.4" y1="317.73" y2="317.73" stroke="#ececec" stroke-width="0.8"/><line x1="469.1" x2="690.4" y1="314.99" y2="314.99" stroke="#ececec" stroke-width="0.8"/><line x1="469.1" x2="690.4" y1="312.24" y2="312.24" stroke="#ececec" stroke-width="0.8"/><line x1="469.1" x2="690.4" y1="306.76" y2="306.76" stroke="#ececec" stroke-width="0.8"/><line x1="469.1" x2="690.4" y1="304.01" y2="304.01" stroke="#ececec" stroke-width="0.8"/><line x1="469.1" x2="690.4" y1="301.27" y2="301.27" stroke="#ececec" stroke-width="0.8"/><line x1="469.1" x2="690.4" y1="298.52" y2="298.52" stroke="#ececec" stroke-width="0.8"/><line x1="469.1" x2="690.4" y1="293.04" y2="293.04" stroke="#ececec" stroke-width="0.8"/><line x1="469.1" x2="690.4" y1="290.29" y2="290.29" stroke="#ececec" stroke-width="0.8"/><line x1="469.1" x2="690.4" y1="287.55" y2="287.55" stroke="#ececec" stroke-width="0.8"/><line x1="469.1" x2="690.4" y1="284.80" y2="284.80" stroke="#ececec" stroke-width="0.8"/><line x1="469.1" x2="690.4" y1="279.32" y2="279.32" stroke="#ececec" stroke-width="0.8"/><line x1="469.1" x2="690.4" y1="276.57" y2="276.57" stroke="#ececec" stroke-width="0.8"/><line x1="469.1" x2="690.4" y1="273.83" y2="273.83" stroke="#ececec" stroke-width="0.8"/><line x1="469.1" x2="690.4" y1="271.08" y2="271.08" stroke="#ececec" stroke-width="0.8"/><line x1="469.1" x2="690.4" y1="265.60" y2="265.60" stroke="#ececec" stroke-width="0.8"/><line x1="469.1" x2="690.4" y1="262.85" y2="262.85" stroke="#ececec" stroke-width="0.8"/><line x1="469.1" x2="690.4" y1="260.11" y2="260.11" stroke="#ececec" stroke-width="0.8"/><line x1="469.1" x2="690.4" y1="257.36" y2="257.36" stroke="#ececec" stroke-width="0.8"/><line x1="484.40" x2="484.40" y1="255.7" y2="450.7" stroke="#e2e2e2" stroke-width="0.8"/><line x1="495.00" x2="495.00" y1="255.7" y2="450.7" stroke="#e2e2e2" stroke-width="0.8"/><line x1="505.60" x2="505.60" y1="255.7" y2="450.7" stroke="#e2e2e2" stroke-width="0.8"/><line x1="526.80" x2="526.80" y1="255.7" y2="450.7" stroke="#e2e2e2" stroke-width="0.8"/><line x1="537.40" x2="537.40" y1="255.7" y2="450.7" stroke="#e2e2e2" stroke-width="0.8"/><line x1="548.00" x2="548.00" y1="255.7" y2="450.7" stroke="#e2e2e2" stroke-width="0.8"/><line x1="569.20" x2="569.20" y1="255.7" y2="450.7" stroke="#e2e2e2" stroke-width="0.8"/><line x1="579.80" x2="579.80" y1="255.7" y2="450.7" stroke="#e2e2e2" stroke-width="0.8"/><line x1="590.40" x2="590.40" y1="255.7" y2="450.7" stroke="#e2e2e2" stroke-width="0.8"/><line x1="611.60" x2="611.60" y1="255.7" y2="450.7" stroke="#e2e2e2" stroke-width="0.8"/><line x1="622.20" x2="622.20" y1="255.7" y2="450.7" stroke="#e2e2e2" stroke-width="0.8"/><line x1="632.80" x2="632.80" y1="255.7" y2="450.7" stroke="#e2e2e2" stroke-width="0.8"/><line x1="654.00" x2="654.00" y1="255.7" y2="450.7" stroke="#e2e2e2" stroke-width="0.8"/><line x1="664.60" x2="664.60" y1="255.7" y2="450.7" stroke="#e2e2e2" stroke-width="0.8"/><line x1="675.20" x2="675.20" y1="255.7" y2="450.7" stroke="#e2e2e2" stroke-width="0.8"/><line x1="469.1" x2="690.4" y1="446.70" y2="446.70" stroke="#bcbcbc" stroke-width="0.9"/><line x1="469.1" x2="690.4" y1="432.98" y2="432.98" stroke="#bcbcbc" stroke-width="0.9"/><line x1="469.1" x2="690.4" y1="419.26" y2="419.26" stroke="#bcbcbc" stroke-width="0.9"/><line x1="469.1" x2="690.4" y1="405.54" y2="405.54" stroke="#bcbcbc" stroke-width="0.9"/><line x1="469.1" x2="690.4" y1="391.82" y2="391.82" stroke="#bcbcbc" stroke-width="0.9"/><line x1="469.1" x2="690.4" y1="378.10" y2="378.10" stroke="#bcbcbc" stroke-width="0.9"/><line x1="469.1" x2="690.4" y1="364.38" y2="364.38" stroke="#bcbcbc" stroke-width="0.9"/><line x1="469.1" x2="690.4" y1="350.66" y2="350.66" stroke="#bcbcbc" stroke-width="0.9"/><line x1="469.1" x2="690.4" y1="336.94" y2="336.94" stroke="#bcbcbc" stroke-width="0.9"/><line x1="469.1" x2="690.4" y1="323.22" y2="323.22" stroke="#bcbcbc" stroke-width="0.9"/><line x1="469.1" x2="690.4" y1="309.50" y2="309.50" stroke="#bcbcbc" stroke-width="0.9"/><line x1="469.1" x2="690.4" y1="295.78" y2="295.78" stroke="#bcbcbc" stroke-width="0.9"/><line x1="469.1" x2="690.4" y1="282.06" y2="282.06" stroke="#bcbcbc" stroke-width="0.9"/><line x1="469.1" x2="690.4" y1="268.34" y2="268.34" stroke="#bcbcbc" stroke-width="0.9"/><line x1="473.80" x2="473.80" y1="255.7" y2="450.7" stroke="#b4b4b4" stroke-width="0.9"/><line x1="516.20" x2="516.20" y1="255.7" y2="450.7" stroke="#b4b4b4" stroke-width="0.9"/><line x1="558.60" x2="558.60" y1="255.7" y2="450.7" stroke="#b4b4b4" stroke-width="0.9"/><line x1="601.00" x2="601.00" y1="255.7" y2="450.7" stroke="#b4b4b4" stroke-width="0.9"/><line x1="643.40" x2="643.40" y1="255.7" y2="450.7" stroke="#b4b4b4" stroke-width="0.9"/><line x1="685.80" x2="685.80" y1="255.7" y2="450.7" stroke="#b4b4b4" stroke-width="0.9"/><rect x="469.1" y="255.7" width="221.3" height="195" fill="none" stroke="#6a6a6a" stroke-width="1.2"/><line x1="469.1" x2="472" y1="446.70" y2="446.70" stroke="#333" stroke-width="0.8"/><line x1="469.1" x2="471.2" y1="443.96" y2="443.96" stroke="#333" stroke-width="0.8"/><line x1="469.1" x2="471.2" y1="441.21" y2="441.21" stroke="#333" stroke-width="0.8"/><line x1="469.1" x2="471.2" y1="438.47" y2="438.47" stroke="#333" stroke-width="0.8"/><line x1="469.1" x2="471.2" y1="435.72" y2="435.72" stroke="#333" stroke-width="0.8"/><line x1="469.1" x2="472" y1="432.98" y2="432.98" stroke="#333" stroke-width="0.8"/><line x1="469.1" x2="471.2" y1="430.24" y2="430.24" stroke="#333" stroke-width="0.8"/><line x1="469.1" x2="471.2" y1="427.49" y2="427.49" stroke="#333" stroke-width="0.8"/><line x1="469.1" x2="471.2" y1="424.75" y2="424.75" stroke="#333" stroke-width="0.8"/><line x1="469.1" x2="471.2" y1="422.00" y2="422.00" stroke="#333" stroke-width="0.8"/><line x1="469.1" x2="472" y1="419.26" y2="419.26" stroke="#333" stroke-width="0.8"/><line x1="469.1" x2="471.2" y1="416.52" y2="416.52" stroke="#333" stroke-width="0.8"/><line x1="469.1" x2="471.2" y1="413.77" y2="413.77" stroke="#333" stroke-width="0.8"/><line x1="469.1" x2="471.2" y1="411.03" y2="411.03" stroke="#333" stroke-width="0.8"/><line x1="469.1" x2="471.2" y1="408.28" y2="408.28" stroke="#333" stroke-width="0.8"/><line x1="469.1" x2="472" y1="405.54" y2="405.54" stroke="#333" stroke-width="0.8"/><line x1="469.1" x2="471.2" y1="402.80" y2="402.80" stroke="#333" stroke-width="0.8"/><line x1="469.1" x2="471.2" y1="400.05" y2="400.05" stroke="#333" stroke-width="0.8"/><line x1="469.1" x2="471.2" y1="397.31" y2="397.31" stroke="#333" stroke-width="0.8"/><line x1="469.1" x2="471.2" y1="394.56" y2="394.56" stroke="#333" stroke-width="0.8"/><line x1="469.1" x2="472" y1="391.82" y2="391.82" stroke="#333" stroke-width="0.8"/><line x1="469.1" x2="471.2" y1="389.08" y2="389.08" stroke="#333" stroke-width="0.8"/><line x1="469.1" x2="471.2" y1="386.33" y2="386.33" stroke="#333" stroke-width="0.8"/><line x1="469.1" x2="471.2" y1="383.59" y2="383.59" stroke="#333" stroke-width="0.8"/><line x1="469.1" x2="471.2" y1="380.84" y2="380.84" stroke="#333" stroke-width="0.8"/><line x1="469.1" x2="472" y1="378.10" y2="378.10" stroke="#333" stroke-width="0.8"/><line x1="469.1" x2="471.2" y1="375.36" y2="375.36" stroke="#333" stroke-width="0.8"/><line x1="469.1" x2="471.2" y1="372.61" y2="372.61" stroke="#333" stroke-width="0.8"/><line x1="469.1" x2="471.2" y1="369.87" y2="369.87" stroke="#333" stroke-width="0.8"/><line x1="469.1" x2="471.2" y1="367.12" y2="367.12" stroke="#333" stroke-width="0.8"/><line x1="469.1" x2="472" y1="364.38" y2="364.38" stroke="#333" stroke-width="0.8"/><line x1="469.1" x2="471.2" y1="361.64" y2="361.64" stroke="#333" stroke-width="0.8"/><line x1="469.1" x2="471.2" y1="358.89" y2="358.89" stroke="#333" stroke-width="0.8"/><line x1="469.1" x2="471.2" y1="356.15" y2="356.15" stroke="#333" stroke-width="0.8"/><line x1="469.1" x2="471.2" y1="353.40" y2="353.40" stroke="#333" stroke-width="0.8"/><line x1="469.1" x2="472" y1="350.66" y2="350.66" stroke="#333" stroke-width="0.8"/><line x1="469.1" x2="471.2" y1="347.92" y2="347.92" stroke="#333" stroke-width="0.8"/><line x1="469.1" x2="471.2" y1="345.17" y2="345.17" stroke="#333" stroke-width="0.8"/><line x1="469.1" x2="471.2" y1="342.43" y2="342.43" stroke="#333" stroke-width="0.8"/><line x1="469.1" x2="471.2" y1="339.68" y2="339.68" stroke="#333" stroke-width="0.8"/><line x1="469.1" x2="472" y1="336.94" y2="336.94" stroke="#333" stroke-width="0.8"/><line x1="469.1" x2="471.2" y1="334.20" y2="334.20" stroke="#333" stroke-width="0.8"/><line x1="469.1" x2="471.2" y1="331.45" y2="331.45" stroke="#333" stroke-width="0.8"/><line x1="469.1" x2="471.2" y1="328.71" y2="328.71" stroke="#333" stroke-width="0.8"/><line x1="469.1" x2="471.2" y1="325.96" y2="325.96" stroke="#333" stroke-width="0.8"/><line x1="469.1" x2="472" y1="323.22" y2="323.22" stroke="#333" stroke-width="0.8"/><line x1="469.1" x2="471.2" y1="320.48" y2="320.48" stroke="#333" stroke-width="0.8"/><line x1="469.1" x2="471.2" y1="317.73" y2="317.73" stroke="#333" stroke-width="0.8"/><line x1="469.1" x2="471.2" y1="314.99" y2="314.99" stroke="#333" stroke-width="0.8"/><line x1="469.1" x2="471.2" y1="312.24" y2="312.24" stroke="#333" stroke-width="0.8"/><line x1="469.1" x2="472" y1="309.50" y2="309.50" stroke="#333" stroke-width="0.8"/><line x1="469.1" x2="471.2" y1="306.76" y2="306.76" stroke="#333" stroke-width="0.8"/><line x1="469.1" x2="471.2" y1="304.01" y2="304.01" stroke="#333" stroke-width="0.8"/><line x1="469.1" x2="471.2" y1="301.27" y2="301.27" stroke="#333" stroke-width="0.8"/><line x1="469.1" x2="471.2" y1="298.52" y2="298.52" stroke="#333" stroke-width="0.8"/><line x1="469.1" x2="472" y1="295.78" y2="295.78" stroke="#333" stroke-width="0.8"/><line x1="469.1" x2="471.2" y1="293.04" y2="293.04" stroke="#333" stroke-width="0.8"/><line x1="469.1" x2="471.2" y1="290.29" y2="290.29" stroke="#333" stroke-width="0.8"/><line x1="469.1" x2="471.2" y1="287.55" y2="287.55" stroke="#333" stroke-width="0.8"/><line x1="469.1" x2="471.2" y1="284.80" y2="284.80" stroke="#333" stroke-width="0.8"/><line x1="469.1" x2="472" y1="282.06" y2="282.06" stroke="#333" stroke-width="0.8"/><line x1="469.1" x2="471.2" y1="279.32" y2="279.32" stroke="#333" stroke-width="0.8"/><line x1="469.1" x2="471.2" y1="276.57" y2="276.57" stroke="#333" stroke-width="0.8"/><line x1="469.1" x2="471.2" y1="273.83" y2="273.83" stroke="#333" stroke-width="0.8"/><line x1="469.1" x2="471.2" y1="271.08" y2="271.08" stroke="#333" stroke-width="0.8"/><line x1="469.1" x2="472" y1="268.34" y2="268.34" stroke="#333" stroke-width="0.8"/><line x1="469.1" x2="471.2" y1="265.60" y2="265.60" stroke="#333" stroke-width="0.8"/><line x1="469.1" x2="471.2" y1="262.85" y2="262.85" stroke="#333" stroke-width="0.8"/><line x1="469.1" x2="471.2" y1="260.11" y2="260.11" stroke="#333" stroke-width="0.8"/><line x1="469.1" x2="471.2" y1="257.36" y2="257.36" stroke="#333" stroke-width="0.8"/><line x1="473.80" x2="473.80" y1="255.7" y2="258.5" stroke="#333" stroke-width="0.8"/><line x1="484.40" x2="484.40" y1="255.7" y2="257.8" stroke="#333" stroke-width="0.8"/><line x1="495.00" x2="495.00" y1="255.7" y2="257.8" stroke="#333" stroke-width="0.8"/><line x1="505.60" x2="505.60" y1="255.7" y2="257.8" stroke="#333" stroke-width="0.8"/><line x1="516.20" x2="516.20" y1="255.7" y2="258.5" stroke="#333" stroke-width="0.8"/><line x1="526.80" x2="526.80" y1="255.7" y2="257.8" stroke="#333" stroke-width="0.8"/><line x1="537.40" x2="537.40" y1="255.7" y2="257.8" stroke="#333" stroke-width="0.8"/><line x1="548.00" x2="548.00" y1="255.7" y2="257.8" stroke="#333" stroke-width="0.8"/><line x1="558.60" x2="558.60" y1="255.7" y2="258.5" stroke="#333" stroke-width="0.8"/><line x1="569.20" x2="569.20" y1="255.7" y2="257.8" stroke="#333" stroke-width="0.8"/><line x1="579.80" x2="579.80" y1="255.7" y2="257.8" stroke="#333" stroke-width="0.8"/><line x1="590.40" x2="590.40" y1="255.7" y2="257.8" stroke="#333" stroke-width="0.8"/><line x1="601.00" x2="601.00" y1="255.7" y2="258.5" stroke="#333" stroke-width="0.8"/><line x1="611.60" x2="611.60" y1="255.7" y2="257.8" stroke="#333" stroke-width="0.8"/><line x1="622.20" x2="622.20" y1="255.7" y2="257.8" stroke="#333" stroke-width="0.8"/><line x1="632.80" x2="632.80" y1="255.7" y2="257.8" stroke="#333" stroke-width="0.8"/><line x1="643.40" x2="643.40" y1="255.7" y2="258.5" stroke="#333" stroke-width="0.8"/><line x1="654.00" x2="654.00" y1="255.7" y2="257.8" stroke="#333" stroke-width="0.8"/><line x1="664.60" x2="664.60" y1="255.7" y2="257.8" stroke="#333" stroke-width="0.8"/><line x1="675.20" x2="675.20" y1="255.7" y2="257.8" stroke="#333" stroke-width="0.8"/><line x1="685.80" x2="685.80" y1="255.7" y2="258.5" stroke="#333" stroke-width="0.8"/><rect x="471.08" y="432.71" width="5.44" height="17.99" fill="#1f9e36" stroke="#0d3312" stroke-width="0.8"/><rect x="476.52" y="429.41" width="5.44" height="21.29" fill="#1f9e36" stroke="#0d3312" stroke-width="0.8"/><rect x="481.95" y="431.33" width="5.44" height="19.37" fill="#1f9e36" stroke="#0d3312" stroke-width="0.8"/><rect x="487.39" y="423.92" width="5.44" height="26.78" fill="#1f9e36" stroke="#0d3312" stroke-width="0.8"/><rect x="492.83" y="409.38" width="5.44" height="41.32" fill="#1f9e36" stroke="#0d3312" stroke-width="0.8"/><rect x="498.26" y="398.41" width="5.44" height="52.29" fill="#1f9e36" stroke="#0d3312" stroke-width="0.8"/><rect x="503.70" y="389.62" width="5.44" height="61.08" fill="#1f9e36" stroke="#0d3312" stroke-width="0.8"/><rect x="509.13" y="380.02" width="5.44" height="70.68" fill="#1f9e36" stroke="#0d3312" stroke-width="0.8"/><rect x="514.57" y="372.61" width="5.44" height="78.09" fill="#1f9e36" stroke="#0d3312" stroke-width="0.8"/><rect x="520.01" y="381.94" width="5.44" height="68.76" fill="#1f9e36" stroke="#0d3312" stroke-width="0.8"/><rect x="525.44" y="388.53" width="5.44" height="62.17" fill="#1f9e36" stroke="#0d3312" stroke-width="0.8"/><rect x="530.88" y="395.11" width="5.44" height="55.59" fill="#1f9e36" stroke="#0d3312" stroke-width="0.8"/><rect x="536.31" y="402.80" width="5.44" height="47.90" fill="#1f9e36" stroke="#0d3312" stroke-width="0.8"/><rect x="541.75" y="401.15" width="5.44" height="49.55" fill="#1f9e36" stroke="#0d3312" stroke-width="0.8"/><rect x="547.18" y="398.41" width="5.44" height="52.29" fill="#1f9e36" stroke="#0d3312" stroke-width="0.8"/><rect x="552.62" y="397.58" width="5.44" height="53.12" fill="#1f9e36" stroke="#0d3312" stroke-width="0.8"/><rect x="558.06" y="395.94" width="5.44" height="54.76" fill="#1f9e36" stroke="#0d3312" stroke-width="0.8"/><rect x="563.49" y="379.47" width="5.44" height="71.23" fill="#1f9e36" stroke="#0d3312" stroke-width="0.8"/><rect x="568.93" y="355.05" width="5.44" height="95.65" fill="#1f9e36" stroke="#0d3312" stroke-width="0.8"/><rect x="574.36" y="338.86" width="5.44" height="111.84" fill="#1f9e36" stroke="#0d3312" stroke-width="0.8"/><rect x="579.80" y="311.42" width="5.44" height="139.28" fill="#1f9e36" stroke="#0d3312" stroke-width="0.8"/><rect x="585.24" y="289.19" width="5.44" height="161.51" fill="#1f9e36" stroke="#0d3312" stroke-width="0.8"/><rect x="590.67" y="264.77" width="5.44" height="185.93" fill="#1f9e36" stroke="#0d3312" stroke-width="0.8"/><rect x="596.11" y="260.66" width="5.44" height="190.04" fill="#1f9e36" stroke="#0d3312" stroke-width="0.8"/><rect x="601.54" y="277.67" width="5.44" height="173.03" fill="#1f9e36" stroke="#0d3312" stroke-width="0.8"/><rect x="606.98" y="294.96" width="5.44" height="155.74" fill="#1f9e36" stroke="#0d3312" stroke-width="0.8"/><rect x="612.42" y="327.34" width="5.44" height="123.36" fill="#1f9e36" stroke="#0d3312" stroke-width="0.8"/><rect x="617.85" y="384.14" width="5.44" height="66.56" fill="#1f9e36" stroke="#0d3312" stroke-width="0.8"/><rect x="623.29" y="423.38" width="5.44" height="27.32" fill="#1f9e36" stroke="#0d3312" stroke-width="0.8"/><rect x="628.72" y="442.31" width="5.44" height="8.39" fill="#1f9e36" stroke="#0d3312" stroke-width="0.8"/><rect x="634.16" y="445.33" width="5.44" height="5.37" fill="#1f9e36" stroke="#0d3312" stroke-width="0.8"/><rect x="639.59" y="445.33" width="5.44" height="5.37" fill="#1f9e36" stroke="#0d3312" stroke-width="0.8"/><rect x="645.03" y="445.33" width="5.44" height="5.37" fill="#1f9e36" stroke="#0d3312" stroke-width="0.8"/><rect x="650.47" y="445.33" width="5.44" height="5.37" fill="#1f9e36" stroke="#0d3312" stroke-width="0.8"/><rect x="655.90" y="445.33" width="5.44" height="5.37" fill="#1f9e36" stroke="#0d3312" stroke-width="0.8"/><rect x="661.34" y="445.33" width="5.44" height="5.37" fill="#1f9e36" stroke="#0d3312" stroke-width="0.8"/><rect x="666.77" y="445.33" width="5.44" height="5.37" fill="#1f9e36" stroke="#0d3312" stroke-width="0.8"/><rect x="672.21" y="445.33" width="5.44" height="5.37" fill="#1f9e36" stroke="#0d3312" stroke-width="0.8"/><rect x="677.65" y="445.33" width="5.44" height="5.37" fill="#1f9e36" stroke="#0d3312" stroke-width="0.8"/><rect x="683.08" y="445.33" width="5.44" height="5.37" fill="#1f9e36" stroke="#0d3312" stroke-width="0.8"/><circle cx="450.7" cy="115.5" r="8.3" fill="#fff" fill-opacity="0.55" stroke="#f01010" stroke-width="1.1"/><path d="M450.7 109.2 L454.9 113.6 L446.5 113.6Z M450.7 122.5 L454.9 117.4 L446.5 117.4Z" fill="#f01010"/><circle cx="450.7" cy="115.5" r="1" fill="#f01010"/></svg>
<div class="t" style="left:365.80px;top:6.10px;width:400px;text-align:center;font-size:8.5px;font-weight:bold;color:#111;transform:scaleX(0.95);transform-origin:50% 0;">Efficiency Histogram</div>
<div class="t" style="left:63.10px;top:203.90px;width:400px;text-align:right;font-size:8.5px;font-weight:normal;color:#262630;transform:scaleX(0.9);transform-origin:100% 0;">0,0</div>
<div class="t" style="left:63.10px;top:180.58px;width:400px;text-align:right;font-size:8.5px;font-weight:normal;color:#262630;transform:scaleX(0.9);transform-origin:100% 0;">0,2</div>
<div class="t" style="left:63.10px;top:157.26px;width:400px;text-align:right;font-size:8.5px;font-weight:normal;color:#262630;transform:scaleX(0.9);transform-origin:100% 0;">0,4</div>
<div class="t" style="left:63.10px;top:133.94px;width:400px;text-align:right;font-size:8.5px;font-weight:normal;color:#262630;transform:scaleX(0.9);transform-origin:100% 0;">0,6</div>
<div class="t" style="left:63.10px;top:110.62px;width:400px;text-align:right;font-size:8.5px;font-weight:normal;color:#262630;transform:scaleX(0.9);transform-origin:100% 0;">0,8</div>
<div class="t" style="left:63.10px;top:87.30px;width:400px;text-align:right;font-size:8.5px;font-weight:normal;color:#262630;transform:scaleX(0.9);transform-origin:100% 0;">1,0</div>
<div class="t" style="left:63.10px;top:63.98px;width:400px;text-align:right;font-size:8.5px;font-weight:normal;color:#262630;transform:scaleX(0.9);transform-origin:100% 0;">1,2</div>
<div class="t" style="left:63.10px;top:40.66px;width:400px;text-align:right;font-size:8.5px;font-weight:normal;color:#262630;transform:scaleX(0.9);transform-origin:100% 0;">1,4</div>
<div class="t" style="left:63.10px;top:17.34px;width:400px;text-align:right;font-size:8.5px;font-weight:normal;color:#262630;transform:scaleX(0.9);transform-origin:100% 0;">1,6</div>
<div class="t" style="left:269.40px;top:213.30px;width:400px;text-align:center;font-size:8.5px;font-weight:normal;color:#262630;transform:scaleX(0.9);transform-origin:50% 0;">0</div>
<div class="t" style="left:312.60px;top:213.30px;width:400px;text-align:center;font-size:8.5px;font-weight:normal;color:#262630;transform:scaleX(0.9);transform-origin:50% 0;">20</div>
<div class="t" style="left:355.80px;top:213.30px;width:400px;text-align:center;font-size:8.5px;font-weight:normal;color:#262630;transform:scaleX(0.9);transform-origin:50% 0;">40</div>
<div class="t" style="left:399.00px;top:213.30px;width:400px;text-align:center;font-size:8.5px;font-weight:normal;color:#262630;transform:scaleX(0.9);transform-origin:50% 0;">60</div>
<div class="t" style="left:442.20px;top:213.30px;width:400px;text-align:center;font-size:8.5px;font-weight:normal;color:#262630;transform:scaleX(0.9);transform-origin:50% 0;">80</div>
<div class="t" style="left:485.40px;top:213.30px;width:400px;text-align:center;font-size:8.5px;font-weight:normal;color:#262630;transform:scaleX(0.9);transform-origin:50% 0;">100</div>
<div class="t" style="left:378.50px;top:223.30px;width:400px;text-align:center;font-size:8.5px;font-weight:normal;color:#262630;transform:scaleX(0.9);transform-origin:50% 0;">E<span style="font-size:6px;vertical-align:-2px">FRET</span> [%]</div>
<div class="t" style="left:402.3px;top:110.5px;width:82px;text-align:center;font-size:8.2px;color:#262630;transform:rotate(-90deg) scaleX(0.95);transform-origin:50% 50%">Occur. [10 <span style="font-size:5.5px;vertical-align:3px">3</span> Events]</div>
<div class="t" style="left:365.50px;top:243.80px;width:400px;text-align:center;font-size:8.5px;font-weight:bold;color:#111;transform:scaleX(0.95);transform-origin:50% 0;">Binding Histogram</div>
<div class="t" style="left:67.70px;top:440.70px;width:400px;text-align:right;font-size:8.5px;font-weight:normal;color:#262630;transform:scaleX(0.88);transform-origin:100% 0;">0,00</div>
<div class="t" style="left:67.70px;top:426.98px;width:400px;text-align:right;font-size:8.5px;font-weight:normal;color:#262630;transform:scaleX(0.88);transform-origin:100% 0;">0,05</div>
<div class="t" style="left:67.70px;top:413.26px;width:400px;text-align:right;font-size:8.5px;font-weight:normal;color:#262630;transform:scaleX(0.88);transform-origin:100% 0;">0,10</div>
<div class="t" style="left:67.70px;top:399.54px;width:400px;text-align:right;font-size:8.5px;font-weight:normal;color:#262630;transform:scaleX(0.88);transform-origin:100% 0;">0,15</div>
<div class="t" style="left:67.70px;top:385.82px;width:400px;text-align:right;font-size:8.5px;font-weight:normal;color:#262630;transform:scaleX(0.88);transform-origin:100% 0;">0,20</div>
<div class="t" style="left:67.70px;top:372.10px;width:400px;text-align:right;font-size:8.5px;font-weight:normal;color:#262630;transform:scaleX(0.88);transform-origin:100% 0;">0,25</div>
<div class="t" style="left:67.70px;top:358.38px;width:400px;text-align:right;font-size:8.5px;font-weight:normal;color:#262630;transform:scaleX(0.88);transform-origin:100% 0;">0,30</div>
<div class="t" style="left:67.70px;top:344.66px;width:400px;text-align:right;font-size:8.5px;font-weight:normal;color:#262630;transform:scaleX(0.88);transform-origin:100% 0;">0,35</div>
<div class="t" style="left:67.70px;top:330.94px;width:400px;text-align:right;font-size:8.5px;font-weight:normal;color:#262630;transform:scaleX(0.88);transform-origin:100% 0;">0,40</div>
<div class="t" style="left:67.70px;top:317.22px;width:400px;text-align:right;font-size:8.5px;font-weight:normal;color:#262630;transform:scaleX(0.88);transform-origin:100% 0;">0,45</div>
<div class="t" style="left:67.70px;top:303.50px;width:400px;text-align:right;font-size:8.5px;font-weight:normal;color:#262630;transform:scaleX(0.88);transform-origin:100% 0;">0,50</div>
<div class="t" style="left:67.70px;top:289.78px;width:400px;text-align:right;font-size:8.5px;font-weight:normal;color:#262630;transform:scaleX(0.88);transform-origin:100% 0;">0,55</div>
<div class="t" style="left:67.70px;top:276.06px;width:400px;text-align:right;font-size:8.5px;font-weight:normal;color:#262630;transform:scaleX(0.88);transform-origin:100% 0;">0,60</div>
<div class="t" style="left:67.70px;top:262.34px;width:400px;text-align:right;font-size:8.5px;font-weight:normal;color:#262630;transform:scaleX(0.88);transform-origin:100% 0;">0,65</div>
<div class="t" style="left:273.80px;top:449.20px;width:400px;text-align:center;font-size:8.5px;font-weight:normal;color:#262630;transform:scaleX(0.9);transform-origin:50% 0;">0</div>
<div class="t" style="left:316.20px;top:449.20px;width:400px;text-align:center;font-size:8.5px;font-weight:normal;color:#262630;transform:scaleX(0.9);transform-origin:50% 0;">20</div>
<div class="t" style="left:358.60px;top:449.20px;width:400px;text-align:center;font-size:8.5px;font-weight:normal;color:#262630;transform:scaleX(0.9);transform-origin:50% 0;">40</div>
<div class="t" style="left:401.00px;top:449.20px;width:400px;text-align:center;font-size:8.5px;font-weight:normal;color:#262630;transform:scaleX(0.9);transform-origin:50% 0;">60</div>
<div class="t" style="left:443.40px;top:449.20px;width:400px;text-align:center;font-size:8.5px;font-weight:normal;color:#262630;transform:scaleX(0.9);transform-origin:50% 0;">80</div>
<div class="t" style="left:485.80px;top:449.20px;width:400px;text-align:center;font-size:8.5px;font-weight:normal;color:#262630;transform:scaleX(0.9);transform-origin:50% 0;">100</div>
<div class="t" style="left:379.00px;top:461.30px;width:400px;text-align:center;font-size:8.5px;font-weight:normal;color:#262630;transform:scaleX(0.9);transform-origin:50% 0;">Binding [%]</div>
<div class="t" style="left:402px;top:348.3px;width:82px;text-align:center;font-size:8.2px;color:#262630;transform:rotate(-90deg) scaleX(0.95);transform-origin:50% 50%">Occur. [10 <span style="font-size:5.5px;vertical-align:3px">3</span> Events]</div>
<div style="left:690.3px;top:214.5px;width:5.7px;height:18px;background:#fff;"></div>
<div style="left:690.3px;top:451.5px;width:5.7px;height:18px;background:#fff;"></div>
<div style="left:696px;top:4px;width:99px;height:470px;background:#dfe7dc;border-left:1px solid #c6ccc3;"></div>
<div style="left:698.1px;top:10.5px;width:94.6px;height:55.0px;border:1px solid #8e948c;border-radius:1px;"></div>
<div style="left:701px;top:7.5px;width:30px;height:6px;background:#dfe7dc;"></div>
<div class="t" style="left:703.00px;top:3.62px;width:400px;text-align:left;font-size:7px;font-weight:normal;color:#262630;transform:scaleX(0.93);transform-origin:0 0;">E(_FRET)</div>
<div class="t" style="left:701.50px;top:16.32px;width:400px;text-align:left;font-size:7px;font-weight:normal;color:#262630;transform:scaleX(0.93);transform-origin:0 0;">Min:</div>
<div style="left:721.3px;top:17.2px;width:58px;height:11.8px;background:#fff;border:1px solid #a4aaa2;"></div>
<div class="t" style="left:377.30px;top:16.92px;width:400px;text-align:right;font-size:7px;font-weight:normal;color:#262630;transform:scaleX(0.93);transform-origin:100% 0;">0,0 %</div>
<div style="left:779.3px;top:17.2px;width:10.5px;height:11.8px;background:#c9cfc7;border:1px solid #a8aea6;border-left:none;"></div>
<div style="left:779.9px;top:18.2px;width:8.9px;height:4.5px;background:#e9eee7;border:1px solid #c3c9c1;"></div>
<div style="left:779.9px;top:23.5px;width:8.9px;height:4.5px;background:#e9eee7;border:1px solid #c3c9c1;"></div>
<svg style="position:absolute;left:782.05px;top:19.15px" width="4.4" height="2.6"><path d="M0 2.6 L2.2 0 L4.4 2.6Z" fill="#000"/></svg>
<svg style="position:absolute;left:782.05px;top:24.65px" width="4.4" height="2.6"><path d="M0 0 L2.2 2.6 L4.4 0Z" fill="#000"/></svg>
<div class="t" style="left:701.50px;top:31.52px;width:400px;text-align:left;font-size:7px;font-weight:normal;color:#262630;transform:scaleX(0.93);transform-origin:0 0;">Max:</div>
<div style="left:721.3px;top:33px;width:58px;height:11.3px;background:#fff;border:1px solid #a4aaa2;"></div>
<div class="t" style="left:377.30px;top:32.47px;width:400px;text-align:right;font-size:7px;font-weight:normal;color:#262630;transform:scaleX(0.93);transform-origin:100% 0;">100,0 %</div>
<div style="left:779.3px;top:33px;width:10.5px;height:11.3px;background:#c9cfc7;border:1px solid #a8aea6;border-left:none;"></div>
<div style="left:779.9px;top:34px;width:8.9px;height:4.25px;background:#e9eee7;border:1px solid #c3c9c1;"></div>
<div style="left:779.9px;top:39.05px;width:8.9px;height:4.25px;background:#e9eee7;border:1px solid #c3c9c1;"></div>
<svg style="position:absolute;left:782.05px;top:34.83px" width="4.4" height="2.6"><path d="M0 2.6 L2.2 0 L4.4 2.6Z" fill="#000"/></svg>
<svg style="position:absolute;left:782.05px;top:40.08px" width="4.4" height="2.6"><path d="M0 0 L2.2 2.6 L4.4 0Z" fill="#000"/></svg>
<div class="t" style="left:701.50px;top:47.32px;width:400px;text-align:left;font-size:7px;font-weight:normal;color:#262630;transform:scaleX(0.93);transform-origin:0 0;">Smpl. Pts.:</div>
<div style="left:741.5px;top:48.5px;width:37.7px;height:11.5px;background:#fff;border:1px solid #a4aaa2;"></div>
<div class="t" style="left:370.20px;top:48.07px;width:400px;text-align:right;font-size:7px;font-weight:normal;color:#262630;transform:scaleX(0.93);transform-origin:100% 0;">40</div>
<div style="left:779.2px;top:48.5px;width:10.5px;height:11.5px;background:#c9cfc7;border:1px solid #a8aea6;border-left:none;"></div>
<div style="left:779.8000000000001px;top:49.5px;width:8.9px;height:4.35px;background:#e9eee7;border:1px solid #c3c9c1;"></div>
<div style="left:779.8000000000001px;top:54.65px;width:8.9px;height:4.35px;background:#e9eee7;border:1px solid #c3c9c1;"></div>
<svg style="position:absolute;left:781.95px;top:50.38px" width="4.4" height="2.6"><path d="M0 2.6 L2.2 0 L4.4 2.6Z" fill="#000"/></svg>
<svg style="position:absolute;left:781.95px;top:55.73px" width="4.4" height="2.6"><path d="M0 0 L2.2 2.6 L4.4 0Z" fill="#000"/></svg>
<div style="left:698.2px;top:168.6px;width:94.5px;height:12.8px;border:1px solid #a7ada5;border-radius:2px;background:linear-gradient(#e9eee7 0%,#e4e9e2 50%,#d7ded5 51%,#d3dad1 100%);"></div>
<div class="t" style="left:545.45px;top:168.92px;width:400px;text-align:center;font-size:7px;font-weight:normal;color:#262630;transform:scaleX(0.93);transform-origin:50% 0;">Recalculate Histogram</div>
<div style="left:698.2px;top:184.1px;width:94.5px;height:12.8px;border:1px solid #a7ada5;border-radius:2px;background:linear-gradient(#e9eee7 0%,#e4e9e2 50%,#d7ded5 51%,#d3dad1 100%);"></div>
<div class="t" style="left:545.45px;top:184.42px;width:400px;text-align:center;font-size:7px;font-weight:normal;color:#262630;transform:scaleX(0.93);transform-origin:50% 0;">Optimize View</div>
<div style="left:698.2px;top:199.6px;width:94.5px;height:12.8px;border:1px solid #a7ada5;border-radius:2px;background:linear-gradient(#e9eee7 0%,#e4e9e2 50%,#d7ded5 51%,#d3dad1 100%);"></div>
<div class="t" style="left:545.45px;top:199.92px;width:400px;text-align:center;font-size:7px;font-weight:normal;color:#262630;transform:scaleX(0.93);transform-origin:50% 0;">Autoscale Histogram</div>
<div style="left:698.2px;top:215.1px;width:94.5px;height:12.8px;border:1px solid #a7ada5;border-radius:2px;background:linear-gradient(#e9eee7 0%,#e4e9e2 50%,#d7ded5 51%,#d3dad1 100%);"></div>
<div class="t" style="left:545.45px;top:215.42px;width:400px;text-align:center;font-size:7px;font-weight:normal;color:#262630;transform:scaleX(0.93);transform-origin:50% 0;">Show All Events</div>
<div style="left:698.1px;top:247.5px;width:94.6px;height:55.5px;border:1px solid #8e948c;border-radius:1px;"></div>
<div style="left:701px;top:244.5px;width:26px;height:6px;background:#dfe7dc;"></div>
<div class="t" style="left:703.00px;top:240.62px;width:400px;text-align:left;font-size:7px;font-weight:normal;color:#262630;transform:scaleX(0.93);transform-origin:0 0;">Binding</div>
<div class="t" style="left:701.50px;top:254.82px;width:400px;text-align:left;font-size:7px;font-weight:normal;color:#262630;transform:scaleX(0.93);transform-origin:0 0;">Min:</div>
<div style="left:721.3px;top:255px;width:58px;height:11.8px;background:#fff;border:1px solid #a4aaa2;"></div>
<div class="t" style="left:377.30px;top:254.72px;width:400px;text-align:right;font-size:7px;font-weight:normal;color:#262630;transform:scaleX(0.93);transform-origin:100% 0;">0,0 %</div>
<div style="left:779.3px;top:255px;width:10.5px;height:11.8px;background:#c9cfc7;border:1px solid #a8aea6;border-left:none;"></div>
<div style="left:779.9px;top:256px;width:8.9px;height:4.5px;background:#e9eee7;border:1px solid #c3c9c1;"></div>
<div style="left:779.9px;top:261.29999999999995px;width:8.9px;height:4.5px;background:#e9eee7;border:1px solid #c3c9c1;"></div>
<svg style="position:absolute;left:782.05px;top:256.95px" width="4.4" height="2.6"><path d="M0 2.6 L2.2 0 L4.4 2.6Z" fill="#000"/></svg>
<svg style="position:absolute;left:782.05px;top:262.45px" width="4.4" height="2.6"><path d="M0 0 L2.2 2.6 L4.4 0Z" fill="#000"/></svg>
<div class="t" style="left:701.50px;top:270.32px;width:400px;text-align:left;font-size:7px;font-weight:normal;color:#262630;transform:scaleX(0.93);transform-origin:0 0;">Max:</div>
<div style="left:721.3px;top:270.8px;width:58px;height:11.6px;background:#fff;border:1px solid #a4aaa2;"></div>
<div class="t" style="left:377.30px;top:270.42px;width:400px;text-align:right;font-size:7px;font-weight:normal;color:#262630;transform:scaleX(0.93);transform-origin:100% 0;">100,0 %</div>
<div style="left:779.3px;top:270.8px;width:10.5px;height:11.6px;background:#c9cfc7;border:1px solid #a8aea6;border-left:none;"></div>
<div style="left:779.9px;top:271.8px;width:8.9px;height:4.4px;background:#e9eee7;border:1px solid #c3c9c1;"></div>
<div style="left:779.9px;top:277.0px;width:8.9px;height:4.4px;background:#e9eee7;border:1px solid #c3c9c1;"></div>
<svg style="position:absolute;left:782.05px;top:272.70px" width="4.4" height="2.6"><path d="M0 2.6 L2.2 0 L4.4 2.6Z" fill="#000"/></svg>
<svg style="position:absolute;left:782.05px;top:278.10px" width="4.4" height="2.6"><path d="M0 0 L2.2 2.6 L4.4 0Z" fill="#000"/></svg>
<div class="t" style="left:701.50px;top:285.82px;width:400px;text-align:left;font-size:7px;font-weight:normal;color:#262630;transform:scaleX(0.93);transform-origin:0 0;">Smpl. Pts.:</div>
<div style="left:741.5px;top:286px;width:37.7px;height:11.8px;background:#fff;border:1px solid #a4aaa2;"></div>
<div class="t" style="left:370.20px;top:285.72px;width:400px;text-align:right;font-size:7px;font-weight:normal;color:#262630;transform:scaleX(0.93);transform-origin:100% 0;">40</div>
<div style="left:779.2px;top:286px;width:10.5px;height:11.8px;background:#c9cfc7;border:1px solid #a8aea6;border-left:none;"></div>
<div style="left:779.8000000000001px;top:287px;width:8.9px;height:4.5px;background:#e9eee7;border:1px solid #c3c9c1;"></div>
<div style="left:779.8000000000001px;top:292.29999999999995px;width:8.9px;height:4.5px;background:#e9eee7;border:1px solid #c3c9c1;"></div>
<svg style="position:absolute;left:781.95px;top:287.95px" width="4.4" height="2.6"><path d="M0 2.6 L2.2 0 L4.4 2.6Z" fill="#000"/></svg>
<svg style="position:absolute;left:781.95px;top:293.45px" width="4.4" height="2.6"><path d="M0 0 L2.2 2.6 L4.4 0Z" fill="#000"/></svg>
<div style="left:698.2px;top:406.2px;width:94.5px;height:12.6px;border:1px solid #a7ada5;border-radius:2px;background:linear-gradient(#e9eee7 0%,#e4e9e2 50%,#d7ded5 51%,#d3dad1 100%);"></div>
<div class="t" style="left:545.45px;top:406.42px;width:400px;text-align:center;font-size:7px;font-weight:normal;color:#262630;transform:scaleX(0.93);transform-origin:50% 0;">Recalculate Histogram</div>
<div style="left:698.2px;top:421.7px;width:94.5px;height:12.6px;border:1px solid #a7ada5;border-radius:2px;background:linear-gradient(#e9eee7 0%,#e4e9e2 50%,#d7ded5 51%,#d3dad1 100%);"></div>
<div class="t" style="left:545.45px;top:421.92px;width:400px;text-align:center;font-size:7px;font-weight:normal;color:#262630;transform:scaleX(0.93);transform-origin:50% 0;">Optimize View</div>
<div style="left:698.2px;top:437.2px;width:94.5px;height:12.6px;border:1px solid #a7ada5;border-radius:2px;background:linear-gradient(#e9eee7 0%,#e4e9e2 50%,#d7ded5 51%,#d3dad1 100%);"></div>
<div class="t" style="left:545.45px;top:437.42px;width:400px;text-align:center;font-size:7px;font-weight:normal;color:#262630;transform:scaleX(0.93);transform-origin:50% 0;">Autoscale Histogram</div>
<div style="left:698.2px;top:452.7px;width:94.5px;height:12.6px;border:1px solid #a7ada5;border-radius:2px;background:linear-gradient(#e9eee7 0%,#e4e9e2 50%,#d7ded5 51%,#d3dad1 100%);"></div>
<div class="t" style="left:545.45px;top:452.92px;width:400px;text-align:center;font-size:7px;font-weight:normal;color:#262630;transform:scaleX(0.93);transform-origin:50% 0;">Show All Events</div>
</body></html>
